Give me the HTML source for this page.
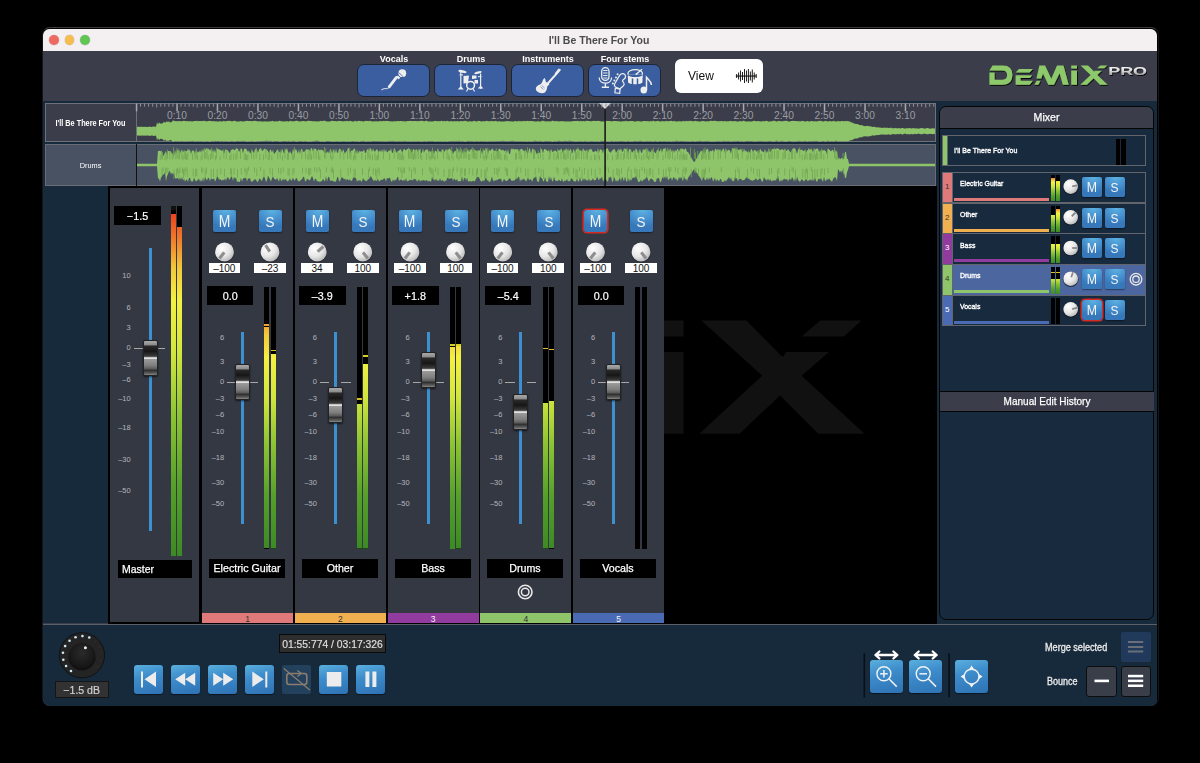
<!DOCTYPE html><html><head><meta charset="utf-8"><style>
html,body{margin:0;padding:0;background:#000;width:1200px;height:763px;overflow:hidden;font-family:"Liberation Sans", sans-serif;}
.ab{position:absolute;}
.t{position:absolute;white-space:nowrap;line-height:1;}
.hv{-webkit-text-stroke:0.25px currentColor;}
.ms{position:absolute;background:radial-gradient(ellipse 90% 80% at 55% 0%,#5db3e2 0%,#4791cf 55%,#3678ba 100%);border-radius:2px;color:#f4f4f4;text-align:center;box-shadow:0 1px 1.5px rgba(0,0,0,.45);}
.ms span{display:inline-block;transform:scaleX(0.88);}
.blk{position:absolute;background:#000;color:#fff;text-align:center;}

</style></head><body>
<div class="ab" style="left:0;top:0;width:1200px;height:763px;background:#000;overflow:hidden">
<div style="position:absolute;left:41.6px;top:27.4px;width:1117px;height:679px;box-sizing:border-box;border:1px solid #161616;border-top-color:#3a3a3a;border-radius:8px;"></div>
<div style="position:absolute;left:43px;top:29px;width:1114px;height:676.6px;background:#3b3e4a;border-radius:6.5px;overflow:hidden;"></div>
<div style="position:absolute;left:43px;top:29px;width:1114px;height:22px;background:#f4f0f1;border-radius:6.5px 6.5px 0 0;"></div>
<div style="position:absolute;left:49.300000000000004px;top:35.1px;width:9.8px;height:9.8px;background:#ee6a5f;border-radius:50%;box-shadow:0 0 0 0.5px rgba(0,0,0,.12);"></div>
<div style="position:absolute;left:64.69999999999999px;top:35.1px;width:9.8px;height:9.8px;background:#f5bd4f;border-radius:50%;box-shadow:0 0 0 0.5px rgba(0,0,0,.12);"></div>
<div style="position:absolute;left:80.1px;top:35.1px;width:9.8px;height:9.8px;background:#61c554;border-radius:50%;box-shadow:0 0 0 0.5px rgba(0,0,0,.12);"></div>
<div class="t" style="left:0px;top:35.5px;width:1198px;text-align:center;font-size:10px;font-weight:bold;color:#4b4b4b;transform:scaleX(1.05);transform-origin:center 0;">I'll Be There For You</div>
<div class="t" style="left:357px;top:55px;width:74px;text-align:center;font-size:9.3px;font-weight:bold;color:#fff;transform:scaleX(0.97);transform-origin:center 0;">Vocals</div>
<div style="position:absolute;left:357px;top:64px;width:73px;height:33px;box-sizing:border-box;background:#3a5e9f;border:1px solid #1b2535;border-radius:7px;"></div>
<div class="t" style="left:434px;top:55px;width:74px;text-align:center;font-size:9.3px;font-weight:bold;color:#fff;transform:scaleX(0.97);transform-origin:center 0;">Drums</div>
<div style="position:absolute;left:434px;top:64px;width:73px;height:33px;box-sizing:border-box;background:#3a5e9f;border:1px solid #1b2535;border-radius:7px;"></div>
<div class="t" style="left:511px;top:55px;width:74px;text-align:center;font-size:9.3px;font-weight:bold;color:#fff;transform:scaleX(0.97);transform-origin:center 0;">Instruments</div>
<div style="position:absolute;left:511px;top:64px;width:73px;height:33px;box-sizing:border-box;background:#3a5e9f;border:1px solid #1b2535;border-radius:7px;"></div>
<div class="t" style="left:588px;top:55px;width:74px;text-align:center;font-size:9.3px;font-weight:bold;color:#fff;transform:scaleX(0.97);transform-origin:center 0;">Four stems</div>
<div style="position:absolute;left:588px;top:64px;width:73px;height:33px;box-sizing:border-box;background:#3a5e9f;border:1px solid #1b2535;border-radius:7px;"></div>
<div style="position:absolute;left:675px;top:59px;width:88px;height:34px;background:#fff;border-radius:6px;"></div>
<div class="t" style="left:688px;top:69.5px;font-size:12.5px;color:#111;transform:scaleX(0.96);transform-origin:left 0;">View</div>
<svg class="ab" style="left:0;top:0" width="1200" height="763"><defs><linearGradient id="prog" x1="0" y1="0" x2="0" y2="1"><stop offset="0" stop-color="#ffffff"/><stop offset="0.5" stop-color="#d8d8d8"/><stop offset="1" stop-color="#8c8c8c"/></linearGradient><filter id="lsh" x="-10%" y="-10%" width="130%" height="140%"><feDropShadow dx="0.8" dy="1" stdDeviation="0.5" flood-color="#000" flood-opacity="0.9"/></filter></defs><circle cx="402.3" cy="73.2" r="3.9" fill="#eeeeee"/><path d="M397.2,76.2 L399.5,78.5" stroke="#eeeeee" stroke-width="2.6"/><path d="M396.4,77.4 L389.2,86.8" stroke="#eeeeee" stroke-width="2.8" stroke-linecap="round"/><path d="M388.8,87.5 C387.5,89.5 386,88.5 384.5,88.5 C383,88.5 382.5,89.8 381.2,89.8" fill="none" stroke="#c9d2e0" stroke-width="1.1"/><path d="M398.8,72.5 L403.3,77" stroke="#3a60a0" stroke-width="0.8"/><path d="M397.7,74.8 L401.3,78.4" stroke="#3a60a0" stroke-width="0.8"/><g fill="#eeeeee" stroke="none"><ellipse cx="462.5" cy="71.5" rx="4.2" ry="1.3" transform="rotate(12 462.5 71.5)"/><ellipse cx="478" cy="72.6" rx="3.8" ry="1.2" transform="rotate(-14 478 72.6)"/><rect x="460.2" y="72" width="1.2" height="17"/><rect x="480" y="73.5" width="1.2" height="15.5"/><path d="M457.8,89.5 L460.8,86 L463.8,89.5Z"/><path d="M477.8,88.5 L480.6,85.5 L483.5,88.5Z"/><path d="M458,75 L463,74.3 L463,75.5Z"/><path d="M478,76 L483,76.8 L478,77.2Z"/><path d="M463.5,76 L469,75.5 L468,83 L463.5,83.5Z"/><path d="M472,75.5 L476.5,75.5 L476.5,78.5 L472,79Z"/><path d="M474.5,80 L478,80 L478,83.5 L474.5,83.5Z"/></g><circle cx="470.6" cy="85.3" r="3.9" fill="none" stroke="#eeeeee" stroke-width="1.5"/><path d="M466.5,91.5 L468,88.5 M474.5,91.5 L473,88.5" stroke="#eeeeee" stroke-width="1.1"/><g fill="#eeeeee"><path d="M546.3,83.6 L555.4,73.4 L556.9,74.8 L547.8,85Z"/><path d="M554.6,73.6 L558.6,68.6 L561,69.6 L560.4,70.8 L556.6,75.2Z"/><path d="M544.6,77.9 C545.8,79.5 545.6,80.8 545.8,81.8 L547.6,83.1 C548.6,83.3 549.4,83.9 549.3,84.8 C548.4,85.2 547.6,85.8 547.3,86.6 C546.9,88.6 546.8,90.5 545.2,92.2 C543.2,93.9 539.6,93.6 537.2,91.6 C535.3,89.8 535.4,87.6 537.2,86 C538.6,84.9 540.2,84.8 541.3,83.6 C542.6,82 542.4,79.3 544.6,77.9Z"/></g><path d="M540.4,86.6 L543.4,89.4 M541.6,85.3 L544.6,88.1" stroke="#5d7bb0" stroke-width="0.7"/><g fill="none" stroke="#eeeeee" stroke-width="1.3"><rect x="601.7" y="67.6" width="7.3" height="12.8" rx="3.65" fill="#3a60a0"/><path d="M599.2,77.4 C599.2,85 611.6,85 611.6,77.4"/><path d="M605.4,83.2 L605.4,87 M601.8,87.3 L609,87.3" stroke-width="1.4"/></g><g fill="#eeeeee"><rect x="603.2" y="70" width="4.3" height="1"/><rect x="603.2" y="72.5" width="4.3" height="1"/><rect x="603.2" y="75" width="4.3" height="1"/><rect x="603.2" y="77.5" width="4.3" height="1"/></g><path d="M622.1,73.6 C624.5,73.4 626,75.5 625.4,77.5 C625,79 622.5,79.5 622.5,80.8 C622.5,82 624.5,82.5 624.1,84.3 C623.8,86 621.5,87.5 619.8,88.7 L615.5,87 C614.2,86.2 614.2,85 614.6,84 L619.5,75.6 C620.2,74.4 621,73.7 622.1,73.6 Z" fill="none" stroke="#eeeeee" stroke-width="1.2"/><path d="M615.3,88.2 L614.9,92.8 L619.7,93.3 L620.1,89.2Z" fill="none" stroke="#eeeeee" stroke-width="1.2"/><g fill="#eeeeee"><circle cx="617.6" cy="74.3" r="1"/><circle cx="616" cy="77.4" r="1"/><circle cx="614.4" cy="80.5" r="1"/><circle cx="612.9" cy="83.5" r="1"/></g><ellipse cx="635.2" cy="73.4" rx="7.3" ry="3.8" fill="none" stroke="#eeeeee" stroke-width="1.3"/><path d="M628,74.5 L628,82 C628,85 642.5,85 642.5,82 L642.5,74.5" fill="#eeeeee"/><path d="M628,74.5 C628,78 642.5,78 642.5,74.5" fill="#3a60a0"/><path d="M628,76.5 C628,78.5 642.5,78.5 642.5,76.5" fill="none" stroke="#eeeeee" stroke-width="1.3"/><path d="M632.5,78.5 L632.5,85 M637.5,78.5 L637.5,85" stroke="#3a60a0" stroke-width="1.5"/><circle cx="636.5" cy="74" r="1" fill="#eeeeee"/><path d="M636.5,74 L642,69.2" stroke="#eeeeee" stroke-width="1.3"/><ellipse cx="643.8" cy="90" rx="3.3" ry="3.5" fill="#eeeeee"/><path d="M646.5,90 L646.5,77.2 C648,79 651,81 651.5,85" fill="none" stroke="#eeeeee" stroke-width="1.5"/><rect x="736.20" y="74.00" width="0.95" height="4.00" fill="#111"/><rect x="738.15" y="72.50" width="0.95" height="7.00" fill="#111"/><rect x="740.10" y="70.50" width="0.95" height="11.00" fill="#111"/><rect x="742.05" y="72.00" width="0.95" height="8.00" fill="#111"/><rect x="744.00" y="69.00" width="0.95" height="14.00" fill="#111"/><rect x="745.95" y="70.50" width="0.95" height="11.00" fill="#111"/><rect x="747.90" y="69.00" width="0.95" height="14.00" fill="#111"/><rect x="749.85" y="71.50" width="0.95" height="9.00" fill="#111"/><rect x="751.80" y="69.50" width="0.95" height="13.00" fill="#111"/><rect x="753.75" y="72.50" width="0.95" height="7.00" fill="#111"/><rect x="755.70" y="74.00" width="0.95" height="4.00" fill="#111"/><rect x="735.8" y="75.5" width="20.5" height="1.1" fill="#111"/><g fill="#8dc86a" filter="url(#lsh)"><path d="M992.6,65.5 L1003,65.5 Q1012.4,65.5 1012.4,75.1 Q1012.4,84.8 1003,84.8 L989.4,84.8 L989.4,72.5 L994.6,72.5 L994.6,79.7 L1002.5,79.7 Q1007.1,79.7 1007.1,75.1 Q1007.1,70.6 1002.5,70.6 L989.4,70.6 Z"/><path d="M1015.6,72.5 L1019,69 L1033,69 L1029.6,72.5Z"/><path d="M1015.6,75.2 L1032.3,75.2 L1029.9,77.9 L1020.5,77.9 L1020.5,80.8 L1033,80.8 L1029.6,84.8 L1015.6,84.8Z"/><path d="M1034.4,84.75 L1036.6,80.85 L1040.5,80.85 L1038.4,84.75Z"/><path d="M1036.4,78.6 L1039.4,65.5 L1045.1,65.5 L1051.3,78.8 L1057,65.5 L1063.5,65.5 L1068.7,84.75 L1062.8,84.75 L1059.6,73.3 L1054,84.75 L1048.3,84.75 L1043,73.5 L1041.3,78.6Z"/><rect x="1071.2" y="65.5" width="5.8" height="3"/><rect x="1071.2" y="70.5" width="5.8" height="14.25"/><path d="M1080.53,65.50 L1088.06,65.50 L1093.72,71.35 L1094.14,71.70 L1094.64,70.84 L1101.80,70.84 L1097.23,74.88 L1107.71,84.75 L1100.01,84.75 L1093.64,78.23 L1086.91,84.75 L1080.20,84.75 L1090.67,74.88Z"/><path d="M1097.23,68.19 L1100.33,65.50 L1107.21,65.50 L1104.26,68.19Z"/></g><text x="1108.3" y="75" font-family="Liberation Sans" font-weight="bold" font-size="11" textLength="38.7" lengthAdjust="spacingAndGlyphs" fill="url(#prog)" filter="url(#lsh)">PRO</text></svg>
<div style="position:absolute;left:43px;top:101px;width:895px;height:86px;background:#172a3b;"></div>
<div style="position:absolute;left:45px;top:103px;width:891px;height:39px;box-sizing:border-box;background:#3b3e4a;border:1px solid #6f7179;"></div>
<div style="position:absolute;left:136px;top:103px;width:1px;height:39px;background:#6f7179;"></div>
<div class="t" style="left:45px;top:118.8px;width:91px;text-align:center;font-size:8.6px;font-weight:bold;color:#fff;transform:scaleX(0.85);transform-origin:center 0;">I'll Be There For You</div>
<div style="position:absolute;left:45px;top:144px;width:891px;height:42px;box-sizing:border-box;background:#485263;border:1px solid #696c74;"></div>
<div style="position:absolute;left:136px;top:144px;width:1px;height:42px;background:#111;"></div>
<div class="t" style="left:45px;top:161.6px;width:91px;text-align:center;font-size:8px;color:#fff;transform:scaleX(0.92);transform-origin:center 0;">Drums</div>
<svg class="ab" style="left:0;top:0" width="1200" height="763"><path d="M137.0,126.8 L138.0,126.9 L139.0,126.6 L140.0,127.0 L141.0,126.7 L142.0,126.8 L143.0,127.0 L144.0,126.7 L145.0,127.0 L146.0,126.7 L147.0,127.0 L148.0,126.9 L149.0,126.7 L150.0,126.5 L151.0,126.9 L152.0,126.9 L153.0,126.6 L154.0,126.4 L155.0,126.7 L156.0,126.8 L157.0,122.2 L158.0,124.4 L159.0,122.2 L160.0,123.4 L161.0,123.6 L162.0,123.5 L163.0,122.9 L164.0,121.5 L165.0,122.9 L166.0,121.7 L167.0,121.4 L168.0,121.9 L169.0,121.3 L170.0,122.4 L171.0,122.2 L172.0,121.7 L173.0,120.3 L174.0,120.8 L175.0,121.3 L176.0,121.1 L177.0,121.2 L178.0,121.3 L179.0,120.9 L180.0,121.0 L181.0,121.4 L182.0,121.1 L183.0,121.1 L184.0,120.8 L185.0,120.9 L186.0,121.3 L187.0,120.7 L188.0,121.5 L189.0,121.2 L190.0,120.9 L191.0,121.5 L192.0,121.2 L193.0,121.6 L194.0,121.0 L195.0,120.9 L196.0,121.1 L197.0,120.8 L198.0,121.3 L199.0,121.0 L200.0,121.1 L201.0,121.1 L202.0,121.2 L203.0,120.8 L204.0,120.7 L205.0,121.2 L206.0,121.0 L207.0,121.5 L208.0,121.0 L209.0,121.0 L210.0,120.7 L211.0,120.9 L212.0,121.3 L213.0,121.3 L214.0,121.0 L215.0,121.6 L216.0,121.2 L217.0,121.4 L218.0,121.5 L219.0,121.5 L220.0,120.9 L221.0,121.5 L222.0,121.4 L223.0,121.2 L224.0,120.8 L225.0,121.5 L226.0,121.2 L227.0,121.1 L228.0,120.8 L229.0,120.9 L230.0,120.8 L231.0,121.3 L232.0,121.2 L233.0,121.3 L234.0,120.8 L235.0,120.7 L236.0,121.5 L237.0,121.4 L238.0,121.4 L239.0,121.4 L240.0,121.2 L241.0,121.1 L242.0,121.4 L243.0,121.6 L244.0,121.2 L245.0,121.3 L246.0,121.1 L247.0,120.7 L248.0,121.0 L249.0,121.1 L250.0,121.0 L251.0,121.0 L252.0,121.6 L253.0,120.8 L254.0,120.9 L255.0,120.8 L256.0,120.9 L257.0,121.2 L258.0,121.2 L259.0,121.5 L260.0,121.0 L261.0,121.5 L262.0,121.5 L263.0,121.4 L264.0,121.5 L265.0,121.3 L266.0,121.6 L267.0,121.6 L268.0,121.5 L269.0,121.5 L270.0,121.3 L271.0,121.6 L272.0,120.8 L273.0,121.0 L274.0,121.5 L275.0,121.4 L276.0,121.3 L277.0,121.3 L278.0,121.5 L279.0,120.8 L280.0,120.7 L281.0,121.2 L282.0,121.2 L283.0,121.5 L284.0,121.5 L285.0,121.3 L286.0,121.4 L287.0,120.9 L288.0,121.5 L289.0,121.6 L290.0,120.7 L291.0,121.1 L292.0,121.5 L293.0,121.1 L294.0,121.6 L295.0,121.1 L296.0,120.7 L297.0,120.8 L298.0,121.0 L299.0,121.4 L300.0,121.3 L301.0,121.4 L302.0,120.9 L303.0,121.1 L304.0,120.9 L305.0,121.3 L306.0,121.4 L307.0,120.9 L308.0,120.7 L309.0,120.8 L310.0,120.9 L311.0,120.9 L312.0,120.9 L313.0,121.4 L314.0,121.1 L315.0,121.3 L316.0,121.6 L317.0,121.6 L318.0,121.3 L319.0,121.4 L320.0,121.0 L321.0,120.7 L322.0,121.2 L323.0,120.8 L324.0,120.7 L325.0,120.7 L326.0,121.3 L327.0,121.4 L328.0,121.4 L329.0,121.4 L330.0,121.4 L331.0,121.0 L332.0,120.8 L333.0,120.8 L334.0,121.2 L335.0,121.0 L336.0,120.9 L337.0,121.5 L338.0,121.0 L339.0,120.8 L340.0,120.9 L341.0,120.9 L342.0,121.2 L343.0,121.4 L344.0,120.9 L345.0,121.3 L346.0,120.9 L347.0,120.7 L348.0,121.2 L349.0,121.2 L350.0,120.7 L351.0,120.9 L352.0,121.4 L353.0,121.5 L354.0,121.5 L355.0,120.8 L356.0,120.9 L357.0,121.5 L358.0,120.9 L359.0,120.7 L360.0,121.0 L361.0,121.3 L362.0,121.1 L363.0,121.5 L364.0,121.6 L365.0,120.7 L366.0,121.0 L367.0,121.1 L368.0,120.8 L369.0,121.2 L370.0,120.8 L371.0,120.9 L372.0,121.4 L373.0,121.4 L374.0,121.3 L375.0,121.4 L376.0,121.1 L377.0,121.4 L378.0,121.2 L379.0,121.5 L380.0,120.8 L381.0,121.3 L382.0,121.2 L383.0,121.1 L384.0,120.8 L385.0,121.2 L386.0,120.8 L387.0,121.1 L388.0,121.1 L389.0,121.1 L390.0,121.6 L391.0,121.2 L392.0,121.4 L393.0,121.6 L394.0,120.9 L395.0,121.4 L396.0,121.2 L397.0,120.9 L398.0,121.1 L399.0,121.3 L400.0,121.1 L401.0,121.1 L402.0,120.9 L403.0,121.5 L404.0,121.1 L405.0,121.4 L406.0,121.4 L407.0,120.9 L408.0,121.1 L409.0,121.1 L410.0,120.9 L411.0,120.8 L412.0,121.2 L413.0,121.0 L414.0,121.1 L415.0,121.1 L416.0,121.0 L417.0,121.2 L418.0,121.1 L419.0,121.2 L420.0,120.8 L421.0,121.0 L422.0,120.8 L423.0,120.8 L424.0,121.4 L425.0,121.1 L426.0,120.8 L427.0,120.8 L428.0,121.5 L429.0,121.5 L430.0,121.2 L431.0,121.5 L432.0,121.4 L433.0,121.5 L434.0,121.0 L435.0,120.9 L436.0,120.8 L437.0,121.5 L438.0,121.0 L439.0,121.0 L440.0,121.5 L441.0,120.8 L442.0,120.7 L443.0,121.4 L444.0,120.7 L445.0,121.2 L446.0,121.2 L447.0,120.7 L448.0,120.9 L449.0,121.5 L450.0,121.2 L451.0,121.1 L452.0,121.3 L453.0,121.4 L454.0,121.3 L455.0,121.0 L456.0,121.6 L457.0,121.1 L458.0,121.2 L459.0,121.6 L460.0,121.3 L461.0,121.0 L462.0,121.1 L463.0,121.5 L464.0,120.7 L465.0,120.9 L466.0,120.7 L467.0,121.5 L468.0,121.4 L469.0,121.6 L470.0,120.9 L471.0,121.4 L472.0,121.5 L473.0,121.2 L474.0,120.8 L475.0,120.9 L476.0,121.4 L477.0,121.5 L478.0,120.8 L479.0,121.1 L480.0,121.0 L481.0,121.5 L482.0,121.5 L483.0,121.0 L484.0,121.2 L485.0,121.5 L486.0,120.8 L487.0,121.0 L488.0,120.9 L489.0,121.5 L490.0,120.8 L491.0,121.5 L492.0,120.8 L493.0,121.2 L494.0,121.3 L495.0,121.1 L496.0,120.8 L497.0,121.4 L498.0,121.5 L499.0,121.1 L500.0,121.4 L501.0,121.5 L502.0,121.5 L503.0,121.6 L504.0,121.4 L505.0,121.3 L506.0,121.3 L507.0,120.9 L508.0,121.3 L509.0,121.1 L510.0,121.4 L511.0,121.3 L512.0,121.6 L513.0,121.4 L514.0,121.6 L515.0,120.9 L516.0,121.1 L517.0,121.4 L518.0,121.2 L519.0,120.8 L520.0,121.5 L521.0,120.9 L522.0,121.2 L523.0,121.2 L524.0,120.8 L525.0,121.2 L526.0,121.1 L527.0,121.0 L528.0,120.7 L529.0,121.3 L530.0,120.9 L531.0,121.0 L532.0,121.0 L533.0,121.2 L534.0,121.3 L535.0,121.6 L536.0,121.5 L537.0,121.5 L538.0,120.9 L539.0,121.4 L540.0,121.5 L541.0,121.5 L542.0,120.8 L543.0,120.8 L544.0,121.0 L545.0,121.3 L546.0,121.4 L547.0,121.3 L548.0,121.2 L549.0,121.5 L550.0,121.2 L551.0,121.4 L552.0,120.7 L553.0,120.7 L554.0,121.1 L555.0,121.4 L556.0,120.7 L557.0,121.3 L558.0,121.3 L559.0,121.6 L560.0,121.3 L561.0,121.2 L562.0,121.1 L563.0,121.4 L564.0,121.1 L565.0,121.6 L566.0,121.4 L567.0,121.5 L568.0,121.2 L569.0,121.6 L570.0,121.6 L571.0,121.3 L572.0,121.4 L573.0,121.1 L574.0,121.1 L575.0,120.9 L576.0,121.0 L577.0,121.0 L578.0,120.8 L579.0,121.2 L580.0,121.3 L581.0,120.7 L582.0,121.5 L583.0,120.9 L584.0,121.0 L585.0,121.6 L586.0,120.8 L587.0,120.8 L588.0,121.0 L589.0,120.9 L590.0,120.9 L591.0,121.5 L592.0,121.1 L593.0,121.1 L594.0,120.8 L595.0,120.9 L596.0,120.9 L597.0,121.1 L598.0,120.8 L599.0,121.0 L600.0,121.0 L601.0,121.4 L602.0,121.6 L603.0,121.5 L604.0,121.3 L605.0,121.5 L606.0,120.8 L607.0,121.1 L608.0,121.0 L609.0,121.0 L610.0,121.0 L611.0,121.2 L612.0,121.6 L613.0,120.9 L614.0,120.9 L615.0,121.1 L616.0,121.1 L617.0,121.0 L618.0,121.5 L619.0,120.9 L620.0,121.4 L621.0,121.5 L622.0,121.4 L623.0,120.9 L624.0,121.4 L625.0,120.9 L626.0,120.7 L627.0,121.2 L628.0,121.3 L629.0,121.2 L630.0,121.0 L631.0,120.9 L632.0,121.0 L633.0,121.0 L634.0,121.5 L635.0,121.5 L636.0,121.4 L637.0,120.9 L638.0,121.3 L639.0,121.1 L640.0,121.6 L641.0,121.5 L642.0,121.4 L643.0,121.0 L644.0,121.0 L645.0,121.0 L646.0,121.3 L647.0,121.1 L648.0,121.2 L649.0,121.2 L650.0,121.5 L651.0,120.8 L652.0,121.4 L653.0,120.7 L654.0,120.8 L655.0,121.6 L656.0,121.2 L657.0,120.9 L658.0,120.7 L659.0,121.2 L660.0,121.4 L661.0,121.4 L662.0,120.7 L663.0,121.4 L664.0,121.1 L665.0,121.5 L666.0,121.1 L667.0,120.7 L668.0,121.5 L669.0,120.9 L670.0,121.1 L671.0,120.8 L672.0,121.0 L673.0,121.4 L674.0,120.8 L675.0,121.2 L676.0,121.6 L677.0,121.6 L678.0,121.2 L679.0,121.2 L680.0,121.3 L681.0,121.5 L682.0,121.3 L683.0,121.3 L684.0,120.8 L685.0,121.6 L686.0,120.9 L687.0,120.8 L688.0,121.5 L689.0,120.8 L690.0,121.0 L691.0,120.8 L692.0,121.3 L693.0,121.3 L694.0,121.2 L695.0,120.7 L696.0,121.1 L697.0,121.3 L698.0,121.2 L699.0,121.4 L700.0,121.6 L701.0,121.5 L702.0,120.8 L703.0,121.3 L704.0,120.8 L705.0,121.4 L706.0,121.4 L707.0,121.1 L708.0,121.4 L709.0,121.3 L710.0,120.7 L711.0,120.8 L712.0,120.9 L713.0,121.0 L714.0,120.8 L715.0,120.8 L716.0,121.1 L717.0,121.0 L718.0,121.6 L719.0,120.9 L720.0,121.2 L721.0,120.9 L722.0,121.0 L723.0,121.3 L724.0,121.6 L725.0,120.8 L726.0,121.5 L727.0,121.2 L728.0,121.3 L729.0,121.3 L730.0,120.9 L731.0,120.7 L732.0,121.4 L733.0,121.0 L734.0,121.3 L735.0,121.1 L736.0,121.2 L737.0,121.4 L738.0,121.5 L739.0,121.4 L740.0,120.8 L741.0,121.2 L742.0,121.4 L743.0,120.8 L744.0,120.7 L745.0,121.2 L746.0,121.5 L747.0,121.4 L748.0,121.5 L749.0,121.3 L750.0,121.5 L751.0,121.4 L752.0,121.4 L753.0,121.1 L754.0,120.8 L755.0,120.9 L756.0,121.2 L757.0,121.2 L758.0,121.1 L759.0,121.3 L760.0,121.3 L761.0,121.5 L762.0,121.4 L763.0,120.7 L764.0,121.5 L765.0,121.1 L766.0,121.0 L767.0,120.8 L768.0,121.4 L769.0,121.4 L770.0,121.4 L771.0,121.2 L772.0,121.2 L773.0,120.7 L774.0,120.8 L775.0,120.8 L776.0,121.6 L777.0,121.6 L778.0,121.0 L779.0,120.8 L780.0,121.2 L781.0,121.1 L782.0,121.6 L783.0,121.2 L784.0,120.8 L785.0,120.9 L786.0,120.8 L787.0,120.7 L788.0,121.4 L789.0,121.5 L790.0,121.5 L791.0,121.1 L792.0,121.0 L793.0,120.8 L794.0,121.0 L795.0,121.0 L796.0,120.9 L797.0,121.2 L798.0,121.1 L799.0,121.6 L800.0,120.9 L801.0,121.4 L802.0,120.8 L803.0,121.0 L804.0,121.3 L805.0,121.5 L806.0,121.4 L807.0,121.0 L808.0,121.0 L809.0,121.5 L810.0,121.5 L811.0,121.1 L812.0,121.1 L813.0,121.3 L814.0,121.4 L815.0,121.1 L816.0,121.6 L817.0,121.3 L818.0,121.2 L819.0,120.7 L820.0,121.0 L821.0,120.8 L822.0,121.2 L823.0,121.4 L824.0,121.4 L825.0,120.7 L826.0,121.0 L827.0,121.3 L828.0,121.6 L829.0,121.2 L830.0,121.0 L831.0,121.2 L832.0,121.4 L833.0,121.0 L834.0,120.8 L835.0,121.4 L836.0,121.6 L837.0,121.3 L838.0,121.2 L839.0,121.0 L840.0,121.4 L841.0,120.9 L842.0,120.9 L843.0,121.1 L844.0,121.4 L845.0,120.7 L846.0,121.3 L847.0,120.9 L848.0,121.1 L849.0,121.6 L850.0,121.6 L851.0,122.4 L852.0,122.2 L853.0,122.9 L854.0,123.5 L855.0,123.8 L856.0,123.9 L857.0,124.0 L858.0,124.1 L859.0,124.9 L860.0,125.0 L861.0,125.3 L862.0,124.9 L863.0,125.8 L864.0,126.0 L865.0,126.2 L866.0,126.1 L867.0,125.8 L868.0,126.0 L869.0,126.2 L870.0,126.2 L871.0,126.3 L872.0,126.9 L873.0,127.1 L874.0,126.6 L875.0,126.9 L876.0,127.5 L877.0,127.1 L878.0,127.4 L879.0,127.5 L880.0,127.6 L881.0,127.8 L882.0,128.0 L883.0,127.8 L884.0,127.8 L885.0,127.4 L886.0,128.1 L887.0,127.4 L888.0,128.1 L889.0,128.0 L890.0,127.7 L891.0,127.7 L892.0,128.1 L893.0,128.4 L894.0,128.1 L895.0,128.2 L896.0,127.8 L897.0,128.4 L898.0,128.3 L899.0,127.9 L900.0,128.6 L901.0,128.3 L902.0,128.0 L903.0,128.0 L904.0,128.6 L905.0,128.6 L906.0,128.6 L907.0,128.0 L908.0,128.5 L909.0,128.1 L910.0,128.0 L911.0,128.5 L912.0,128.5 L913.0,128.0 L914.0,128.3 L915.0,128.6 L916.0,128.2 L917.0,128.5 L918.0,128.6 L919.0,128.8 L920.0,128.2 L921.0,128.1 L922.0,128.3 L923.0,128.1 L924.0,128.8 L925.0,128.6 L926.0,128.5 L927.0,128.1 L928.0,128.1 L929.0,128.5 L930.0,128.7 L931.0,128.5 L932.0,128.5 L933.0,128.1 L934.0,128.7 L935.0,128.2 L935.0,134.2 L934.0,133.7 L933.0,134.3 L932.0,133.9 L931.0,133.9 L930.0,133.7 L929.0,133.9 L928.0,134.3 L927.0,134.3 L926.0,133.9 L925.0,133.8 L924.0,133.6 L923.0,134.3 L922.0,134.1 L921.0,134.3 L920.0,134.2 L919.0,133.6 L918.0,133.8 L917.0,133.9 L916.0,134.2 L915.0,133.8 L914.0,134.1 L913.0,134.4 L912.0,133.9 L911.0,133.9 L910.0,134.4 L909.0,134.3 L908.0,133.9 L907.0,134.4 L906.0,133.8 L905.0,133.8 L904.0,133.8 L903.0,134.4 L902.0,134.4 L901.0,134.1 L900.0,133.8 L899.0,134.5 L898.0,134.1 L897.0,134.0 L896.0,134.6 L895.0,134.2 L894.0,134.3 L893.0,134.0 L892.0,134.3 L891.0,134.7 L890.0,134.7 L889.0,134.4 L888.0,134.3 L887.0,135.0 L886.0,134.3 L885.0,135.0 L884.0,134.6 L883.0,134.6 L882.0,134.4 L881.0,134.6 L880.0,134.8 L879.0,134.9 L878.0,135.0 L877.0,135.3 L876.0,134.9 L875.0,135.5 L874.0,135.8 L873.0,135.3 L872.0,135.5 L871.0,136.1 L870.0,136.2 L869.0,136.2 L868.0,136.4 L867.0,136.6 L866.0,136.3 L865.0,136.2 L864.0,136.4 L863.0,136.6 L862.0,137.5 L861.0,137.1 L860.0,137.4 L859.0,137.5 L858.0,138.3 L857.0,138.4 L856.0,138.5 L855.0,138.6 L854.0,138.9 L853.0,139.5 L852.0,140.2 L851.0,140.0 L850.0,140.8 L849.0,140.8 L848.0,141.3 L847.0,141.5 L846.0,141.1 L845.0,141.7 L844.0,141.0 L843.0,141.3 L842.0,141.5 L841.0,141.5 L840.0,141.0 L839.0,141.4 L838.0,141.2 L837.0,141.1 L836.0,140.8 L835.0,141.0 L834.0,141.6 L833.0,141.4 L832.0,141.0 L831.0,141.2 L830.0,141.4 L829.0,141.2 L828.0,140.8 L827.0,141.1 L826.0,141.4 L825.0,141.7 L824.0,141.0 L823.0,141.0 L822.0,141.2 L821.0,141.6 L820.0,141.4 L819.0,141.7 L818.0,141.2 L817.0,141.1 L816.0,140.8 L815.0,141.3 L814.0,141.0 L813.0,141.1 L812.0,141.3 L811.0,141.3 L810.0,140.9 L809.0,140.9 L808.0,141.4 L807.0,141.4 L806.0,141.0 L805.0,140.9 L804.0,141.1 L803.0,141.4 L802.0,141.6 L801.0,141.0 L800.0,141.5 L799.0,140.8 L798.0,141.3 L797.0,141.2 L796.0,141.5 L795.0,141.4 L794.0,141.4 L793.0,141.6 L792.0,141.4 L791.0,141.3 L790.0,140.9 L789.0,140.9 L788.0,141.0 L787.0,141.7 L786.0,141.6 L785.0,141.5 L784.0,141.6 L783.0,141.2 L782.0,140.8 L781.0,141.3 L780.0,141.2 L779.0,141.6 L778.0,141.4 L777.0,140.8 L776.0,140.8 L775.0,141.6 L774.0,141.6 L773.0,141.7 L772.0,141.2 L771.0,141.2 L770.0,141.0 L769.0,141.0 L768.0,141.0 L767.0,141.6 L766.0,141.4 L765.0,141.3 L764.0,140.9 L763.0,141.7 L762.0,141.0 L761.0,140.9 L760.0,141.1 L759.0,141.1 L758.0,141.3 L757.0,141.2 L756.0,141.2 L755.0,141.5 L754.0,141.6 L753.0,141.3 L752.0,141.0 L751.0,141.0 L750.0,140.9 L749.0,141.1 L748.0,140.9 L747.0,141.0 L746.0,140.9 L745.0,141.2 L744.0,141.7 L743.0,141.6 L742.0,141.0 L741.0,141.2 L740.0,141.6 L739.0,141.0 L738.0,140.9 L737.0,141.0 L736.0,141.2 L735.0,141.3 L734.0,141.1 L733.0,141.4 L732.0,141.0 L731.0,141.7 L730.0,141.5 L729.0,141.1 L728.0,141.1 L727.0,141.2 L726.0,140.9 L725.0,141.6 L724.0,140.8 L723.0,141.1 L722.0,141.4 L721.0,141.5 L720.0,141.2 L719.0,141.5 L718.0,140.8 L717.0,141.4 L716.0,141.3 L715.0,141.6 L714.0,141.6 L713.0,141.4 L712.0,141.5 L711.0,141.6 L710.0,141.7 L709.0,141.1 L708.0,141.0 L707.0,141.3 L706.0,141.0 L705.0,141.0 L704.0,141.6 L703.0,141.1 L702.0,141.6 L701.0,140.9 L700.0,140.8 L699.0,141.0 L698.0,141.2 L697.0,141.1 L696.0,141.3 L695.0,141.7 L694.0,141.2 L693.0,141.1 L692.0,141.1 L691.0,141.6 L690.0,141.4 L689.0,141.6 L688.0,140.9 L687.0,141.6 L686.0,141.5 L685.0,140.8 L684.0,141.6 L683.0,141.1 L682.0,141.1 L681.0,140.9 L680.0,141.1 L679.0,141.2 L678.0,141.2 L677.0,140.8 L676.0,140.8 L675.0,141.2 L674.0,141.6 L673.0,141.0 L672.0,141.4 L671.0,141.6 L670.0,141.3 L669.0,141.5 L668.0,140.9 L667.0,141.7 L666.0,141.3 L665.0,140.9 L664.0,141.3 L663.0,141.0 L662.0,141.7 L661.0,141.0 L660.0,141.0 L659.0,141.2 L658.0,141.7 L657.0,141.5 L656.0,141.2 L655.0,140.8 L654.0,141.6 L653.0,141.7 L652.0,141.0 L651.0,141.6 L650.0,140.9 L649.0,141.2 L648.0,141.2 L647.0,141.3 L646.0,141.1 L645.0,141.4 L644.0,141.4 L643.0,141.4 L642.0,141.0 L641.0,140.9 L640.0,140.8 L639.0,141.3 L638.0,141.1 L637.0,141.5 L636.0,141.0 L635.0,140.9 L634.0,140.9 L633.0,141.4 L632.0,141.4 L631.0,141.5 L630.0,141.4 L629.0,141.2 L628.0,141.1 L627.0,141.2 L626.0,141.7 L625.0,141.5 L624.0,141.0 L623.0,141.5 L622.0,141.0 L621.0,140.9 L620.0,141.0 L619.0,141.5 L618.0,140.9 L617.0,141.4 L616.0,141.3 L615.0,141.3 L614.0,141.5 L613.0,141.5 L612.0,140.8 L611.0,141.2 L610.0,141.4 L609.0,141.4 L608.0,141.4 L607.0,141.3 L606.0,141.6 L605.0,140.9 L604.0,141.1 L603.0,140.9 L602.0,140.8 L601.0,141.0 L600.0,141.4 L599.0,141.4 L598.0,141.6 L597.0,141.3 L596.0,141.5 L595.0,141.5 L594.0,141.6 L593.0,141.3 L592.0,141.3 L591.0,140.9 L590.0,141.5 L589.0,141.5 L588.0,141.4 L587.0,141.6 L586.0,141.6 L585.0,140.8 L584.0,141.4 L583.0,141.5 L582.0,140.9 L581.0,141.7 L580.0,141.1 L579.0,141.2 L578.0,141.6 L577.0,141.4 L576.0,141.4 L575.0,141.5 L574.0,141.3 L573.0,141.3 L572.0,141.0 L571.0,141.1 L570.0,140.8 L569.0,140.8 L568.0,141.2 L567.0,140.9 L566.0,141.0 L565.0,140.8 L564.0,141.3 L563.0,141.0 L562.0,141.3 L561.0,141.2 L560.0,141.1 L559.0,140.8 L558.0,141.1 L557.0,141.1 L556.0,141.7 L555.0,141.0 L554.0,141.3 L553.0,141.7 L552.0,141.7 L551.0,141.0 L550.0,141.2 L549.0,140.9 L548.0,141.2 L547.0,141.1 L546.0,141.0 L545.0,141.1 L544.0,141.4 L543.0,141.6 L542.0,141.6 L541.0,140.9 L540.0,140.9 L539.0,141.0 L538.0,141.5 L537.0,140.9 L536.0,140.9 L535.0,140.8 L534.0,141.1 L533.0,141.2 L532.0,141.4 L531.0,141.4 L530.0,141.5 L529.0,141.1 L528.0,141.7 L527.0,141.4 L526.0,141.3 L525.0,141.2 L524.0,141.6 L523.0,141.2 L522.0,141.2 L521.0,141.5 L520.0,140.9 L519.0,141.6 L518.0,141.2 L517.0,141.0 L516.0,141.3 L515.0,141.5 L514.0,140.8 L513.0,141.0 L512.0,140.8 L511.0,141.1 L510.0,141.0 L509.0,141.3 L508.0,141.1 L507.0,141.5 L506.0,141.1 L505.0,141.1 L504.0,141.0 L503.0,140.8 L502.0,140.9 L501.0,140.9 L500.0,141.0 L499.0,141.3 L498.0,140.9 L497.0,141.0 L496.0,141.6 L495.0,141.3 L494.0,141.1 L493.0,141.2 L492.0,141.6 L491.0,140.9 L490.0,141.6 L489.0,140.9 L488.0,141.5 L487.0,141.4 L486.0,141.6 L485.0,140.9 L484.0,141.2 L483.0,141.4 L482.0,140.9 L481.0,140.9 L480.0,141.4 L479.0,141.3 L478.0,141.6 L477.0,140.9 L476.0,141.0 L475.0,141.5 L474.0,141.6 L473.0,141.2 L472.0,140.9 L471.0,141.0 L470.0,141.5 L469.0,140.8 L468.0,141.0 L467.0,140.9 L466.0,141.7 L465.0,141.5 L464.0,141.7 L463.0,140.9 L462.0,141.3 L461.0,141.4 L460.0,141.1 L459.0,140.8 L458.0,141.2 L457.0,141.3 L456.0,140.8 L455.0,141.4 L454.0,141.1 L453.0,141.0 L452.0,141.1 L451.0,141.3 L450.0,141.2 L449.0,140.9 L448.0,141.5 L447.0,141.7 L446.0,141.2 L445.0,141.2 L444.0,141.7 L443.0,141.0 L442.0,141.7 L441.0,141.6 L440.0,140.9 L439.0,141.4 L438.0,141.4 L437.0,140.9 L436.0,141.6 L435.0,141.5 L434.0,141.4 L433.0,140.9 L432.0,141.0 L431.0,140.9 L430.0,141.2 L429.0,140.9 L428.0,140.9 L427.0,141.6 L426.0,141.6 L425.0,141.3 L424.0,141.0 L423.0,141.6 L422.0,141.6 L421.0,141.4 L420.0,141.6 L419.0,141.2 L418.0,141.3 L417.0,141.2 L416.0,141.4 L415.0,141.3 L414.0,141.3 L413.0,141.4 L412.0,141.2 L411.0,141.6 L410.0,141.5 L409.0,141.3 L408.0,141.3 L407.0,141.5 L406.0,141.0 L405.0,141.0 L404.0,141.3 L403.0,140.9 L402.0,141.5 L401.0,141.3 L400.0,141.3 L399.0,141.1 L398.0,141.3 L397.0,141.5 L396.0,141.2 L395.0,141.0 L394.0,141.5 L393.0,140.8 L392.0,141.0 L391.0,141.2 L390.0,140.8 L389.0,141.3 L388.0,141.3 L387.0,141.3 L386.0,141.6 L385.0,141.2 L384.0,141.6 L383.0,141.3 L382.0,141.2 L381.0,141.1 L380.0,141.6 L379.0,140.9 L378.0,141.2 L377.0,141.0 L376.0,141.3 L375.0,141.0 L374.0,141.1 L373.0,141.0 L372.0,141.0 L371.0,141.5 L370.0,141.6 L369.0,141.2 L368.0,141.6 L367.0,141.3 L366.0,141.4 L365.0,141.7 L364.0,140.8 L363.0,140.9 L362.0,141.3 L361.0,141.1 L360.0,141.4 L359.0,141.7 L358.0,141.5 L357.0,140.9 L356.0,141.5 L355.0,141.6 L354.0,140.9 L353.0,140.9 L352.0,141.0 L351.0,141.5 L350.0,141.7 L349.0,141.2 L348.0,141.2 L347.0,141.7 L346.0,141.5 L345.0,141.1 L344.0,141.5 L343.0,141.0 L342.0,141.2 L341.0,141.5 L340.0,141.5 L339.0,141.6 L338.0,141.4 L337.0,140.9 L336.0,141.5 L335.0,141.4 L334.0,141.2 L333.0,141.6 L332.0,141.6 L331.0,141.4 L330.0,141.0 L329.0,141.0 L328.0,141.0 L327.0,141.0 L326.0,141.1 L325.0,141.7 L324.0,141.7 L323.0,141.6 L322.0,141.2 L321.0,141.7 L320.0,141.4 L319.0,141.0 L318.0,141.1 L317.0,140.8 L316.0,140.8 L315.0,141.1 L314.0,141.3 L313.0,141.0 L312.0,141.5 L311.0,141.5 L310.0,141.5 L309.0,141.6 L308.0,141.7 L307.0,141.5 L306.0,141.0 L305.0,141.1 L304.0,141.5 L303.0,141.3 L302.0,141.5 L301.0,141.0 L300.0,141.1 L299.0,141.0 L298.0,141.4 L297.0,141.6 L296.0,141.7 L295.0,141.3 L294.0,140.8 L293.0,141.3 L292.0,140.9 L291.0,141.3 L290.0,141.7 L289.0,140.8 L288.0,140.9 L287.0,141.5 L286.0,141.0 L285.0,141.1 L284.0,140.9 L283.0,140.9 L282.0,141.2 L281.0,141.2 L280.0,141.7 L279.0,141.6 L278.0,140.9 L277.0,141.1 L276.0,141.1 L275.0,141.0 L274.0,140.9 L273.0,141.4 L272.0,141.6 L271.0,140.8 L270.0,141.1 L269.0,140.9 L268.0,140.9 L267.0,140.8 L266.0,140.8 L265.0,141.1 L264.0,140.9 L263.0,141.0 L262.0,140.9 L261.0,140.9 L260.0,141.4 L259.0,140.9 L258.0,141.2 L257.0,141.2 L256.0,141.5 L255.0,141.6 L254.0,141.5 L253.0,141.6 L252.0,140.8 L251.0,141.4 L250.0,141.4 L249.0,141.3 L248.0,141.4 L247.0,141.7 L246.0,141.3 L245.0,141.1 L244.0,141.2 L243.0,140.8 L242.0,141.0 L241.0,141.3 L240.0,141.2 L239.0,141.0 L238.0,141.0 L237.0,141.0 L236.0,140.9 L235.0,141.7 L234.0,141.6 L233.0,141.1 L232.0,141.2 L231.0,141.1 L230.0,141.6 L229.0,141.5 L228.0,141.6 L227.0,141.3 L226.0,141.2 L225.0,140.9 L224.0,141.6 L223.0,141.2 L222.0,141.0 L221.0,140.9 L220.0,141.5 L219.0,140.9 L218.0,140.9 L217.0,141.0 L216.0,141.2 L215.0,140.8 L214.0,141.4 L213.0,141.1 L212.0,141.1 L211.0,141.5 L210.0,141.7 L209.0,141.4 L208.0,141.4 L207.0,140.9 L206.0,141.4 L205.0,141.2 L204.0,141.7 L203.0,141.6 L202.0,141.2 L201.0,141.3 L200.0,141.3 L199.0,141.4 L198.0,141.1 L197.0,141.6 L196.0,141.3 L195.0,141.5 L194.0,141.4 L193.0,140.8 L192.0,141.2 L191.0,140.9 L190.0,141.5 L189.0,141.2 L188.0,140.9 L187.0,141.7 L186.0,141.1 L185.0,141.5 L184.0,141.6 L183.0,141.3 L182.0,141.3 L181.0,141.0 L180.0,141.4 L179.0,141.5 L178.0,141.1 L177.0,141.2 L176.0,141.3 L175.0,141.1 L174.0,141.6 L173.0,142.1 L172.0,140.7 L171.0,140.2 L170.0,140.0 L169.0,141.1 L168.0,140.5 L167.0,141.0 L166.0,140.7 L165.0,139.5 L164.0,140.9 L163.0,139.5 L162.0,138.9 L161.0,138.8 L160.0,139.0 L159.0,140.2 L158.0,138.0 L157.0,140.2 L156.0,135.6 L155.0,135.7 L154.0,136.0 L153.0,135.8 L152.0,135.5 L151.0,135.5 L150.0,135.9 L149.0,135.7 L148.0,135.5 L147.0,135.4 L146.0,135.7 L145.0,135.4 L144.0,135.7 L143.0,135.4 L142.0,135.6 L141.0,135.7 L140.0,135.4 L139.0,135.8 L138.0,135.5 L137.0,135.6Z" fill="#8ec46a"/><path d="M137.0,163.7 L138.0,163.7 L139.0,163.7 L140.0,163.7 L141.0,163.7 L142.0,163.7 L143.0,163.7 L144.0,163.7 L145.0,163.7 L146.0,163.7 L147.0,163.7 L148.0,163.7 L149.0,163.7 L150.0,163.7 L151.0,163.7 L152.0,163.7 L153.0,163.7 L154.0,163.7 L155.0,163.7 L156.0,163.7 L157.0,163.7 L158.0,151.0 L159.0,151.0 L160.0,150.8 L161.0,151.5 L162.0,151.1 L163.0,156.4 L164.0,154.5 L165.0,153.0 L166.0,150.8 L167.0,156.1 L168.0,151.0 L169.0,151.1 L170.0,151.5 L171.0,151.2 L172.0,154.3 L173.0,153.4 L174.0,155.8 L175.0,149.5 L176.0,154.0 L177.0,149.3 L178.0,151.2 L179.0,148.8 L180.0,153.2 L181.0,150.8 L182.0,149.5 L183.0,152.3 L184.0,150.7 L185.0,151.3 L186.0,151.2 L187.0,151.0 L188.0,148.5 L189.0,150.9 L190.0,149.1 L191.0,154.2 L192.0,150.6 L193.0,150.7 L194.0,150.4 L195.0,153.9 L196.0,149.5 L197.0,152.9 L198.0,150.9 L199.0,152.4 L200.0,150.1 L201.0,152.8 L202.0,148.8 L203.0,152.0 L204.0,148.2 L205.0,150.3 L206.0,148.3 L207.0,148.4 L208.0,148.7 L209.0,148.9 L210.0,150.7 L211.0,148.7 L212.0,151.9 L213.0,150.1 L214.0,152.6 L215.0,149.1 L216.0,153.5 L217.0,149.0 L218.0,148.6 L219.0,149.7 L220.0,149.6 L221.0,150.6 L222.0,150.6 L223.0,150.5 L224.0,153.8 L225.0,150.3 L226.0,149.0 L227.0,150.4 L228.0,150.3 L229.0,152.6 L230.0,152.9 L231.0,150.1 L232.0,149.5 L233.0,149.1 L234.0,150.1 L235.0,150.2 L236.0,148.2 L237.0,148.6 L238.0,149.1 L239.0,152.0 L240.0,150.2 L241.0,148.3 L242.0,148.9 L243.0,153.2 L244.0,149.0 L245.0,148.4 L246.0,148.7 L247.0,150.2 L248.0,151.9 L249.0,150.2 L250.0,153.6 L251.0,152.3 L252.0,149.3 L253.0,152.2 L254.0,152.7 L255.0,149.5 L256.0,148.5 L257.0,149.8 L258.0,152.8 L259.0,149.6 L260.0,148.8 L261.0,148.0 L262.0,151.0 L263.0,150.5 L264.0,149.1 L265.0,148.7 L266.0,149.5 L267.0,149.8 L268.0,151.2 L269.0,153.6 L270.0,149.6 L271.0,150.1 L272.0,152.5 L273.0,149.5 L274.0,154.3 L275.0,152.8 L276.0,151.8 L277.0,149.8 L278.0,149.6 L279.0,152.5 L280.0,151.7 L281.0,152.9 L282.0,148.5 L283.0,150.7 L284.0,154.0 L285.0,149.9 L286.0,149.5 L287.0,148.2 L288.0,151.7 L289.0,153.5 L290.0,150.7 L291.0,153.3 L292.0,154.0 L293.0,148.2 L294.0,152.0 L295.0,150.2 L296.0,148.8 L297.0,151.3 L298.0,153.4 L299.0,148.9 L300.0,154.1 L301.0,149.0 L302.0,149.1 L303.0,151.8 L304.0,151.8 L305.0,151.1 L306.0,149.3 L307.0,149.2 L308.0,149.9 L309.0,148.9 L310.0,151.5 L311.0,148.1 L312.0,148.5 L313.0,151.6 L314.0,149.1 L315.0,149.0 L316.0,148.5 L317.0,151.7 L318.0,149.6 L319.0,149.4 L320.0,150.4 L321.0,149.3 L322.0,150.5 L323.0,149.8 L324.0,151.9 L325.0,153.1 L326.0,152.4 L327.0,152.8 L328.0,151.0 L329.0,153.7 L330.0,149.3 L331.0,149.3 L332.0,153.2 L333.0,150.9 L334.0,148.7 L335.0,153.2 L336.0,148.3 L337.0,152.8 L338.0,152.7 L339.0,148.6 L340.0,149.5 L341.0,149.6 L342.0,152.8 L343.0,149.0 L344.0,151.2 L345.0,153.8 L346.0,151.4 L347.0,150.9 L348.0,148.1 L349.0,148.6 L350.0,153.7 L351.0,150.5 L352.0,151.0 L353.0,150.0 L354.0,148.5 L355.0,148.7 L356.0,154.3 L357.0,149.0 L358.0,154.2 L359.0,150.2 L360.0,152.1 L361.0,151.0 L362.0,151.6 L363.0,151.4 L364.0,149.2 L365.0,152.7 L366.0,153.0 L367.0,149.3 L368.0,149.6 L369.0,150.7 L370.0,148.4 L371.0,148.4 L372.0,152.0 L373.0,148.4 L374.0,150.8 L375.0,151.8 L376.0,150.0 L377.0,149.0 L378.0,151.0 L379.0,152.3 L380.0,149.4 L381.0,152.2 L382.0,148.9 L383.0,152.6 L384.0,148.5 L385.0,152.1 L386.0,149.2 L387.0,152.4 L388.0,151.7 L389.0,150.1 L390.0,151.2 L391.0,148.1 L392.0,152.8 L393.0,152.8 L394.0,148.1 L395.0,149.1 L396.0,152.0 L397.0,152.8 L398.0,150.8 L399.0,150.7 L400.0,149.3 L401.0,149.6 L402.0,152.5 L403.0,150.7 L404.0,148.4 L405.0,149.8 L406.0,150.6 L407.0,149.1 L408.0,148.9 L409.0,148.6 L410.0,149.5 L411.0,151.2 L412.0,152.9 L413.0,148.9 L414.0,149.6 L415.0,150.6 L416.0,149.6 L417.0,149.4 L418.0,152.1 L419.0,148.9 L420.0,150.3 L421.0,153.5 L422.0,152.3 L423.0,148.2 L424.0,152.8 L425.0,150.0 L426.0,150.1 L427.0,148.7 L428.0,150.7 L429.0,151.9 L430.0,150.8 L431.0,152.6 L432.0,151.0 L433.0,151.5 L434.0,154.0 L435.0,150.6 L436.0,151.0 L437.0,151.8 L438.0,148.2 L439.0,151.9 L440.0,150.8 L441.0,152.6 L442.0,148.8 L443.0,150.4 L444.0,151.8 L445.0,151.0 L446.0,148.7 L447.0,150.4 L448.0,150.0 L449.0,148.7 L450.0,148.6 L451.0,150.9 L452.0,150.6 L453.0,154.3 L454.0,151.4 L455.0,151.3 L456.0,150.6 L457.0,149.4 L458.0,148.3 L459.0,153.3 L460.0,148.4 L461.0,152.5 L462.0,149.5 L463.0,154.0 L464.0,149.4 L465.0,152.8 L466.0,151.8 L467.0,151.0 L468.0,148.4 L469.0,152.2 L470.0,149.7 L471.0,149.4 L472.0,148.9 L473.0,152.0 L474.0,150.0 L475.0,150.5 L476.0,149.9 L477.0,151.8 L478.0,150.2 L479.0,150.4 L480.0,150.2 L481.0,150.0 L482.0,154.1 L483.0,150.4 L484.0,149.4 L485.0,150.9 L486.0,148.2 L487.0,149.5 L488.0,153.7 L489.0,149.3 L490.0,151.1 L491.0,150.1 L492.0,148.4 L493.0,149.2 L494.0,151.1 L495.0,150.9 L496.0,150.1 L497.0,151.9 L498.0,150.6 L499.0,148.7 L500.0,148.7 L501.0,150.2 L502.0,150.2 L503.0,149.5 L504.0,151.1 L505.0,151.3 L506.0,149.5 L507.0,153.5 L508.0,148.5 L509.0,153.4 L510.0,154.2 L511.0,148.3 L512.0,149.4 L513.0,148.4 L514.0,149.6 L515.0,149.3 L516.0,149.3 L517.0,149.4 L518.0,149.0 L519.0,152.1 L520.0,148.9 L521.0,149.4 L522.0,148.7 L523.0,149.9 L524.0,151.3 L525.0,151.2 L526.0,149.5 L527.0,153.3 L528.0,153.5 L529.0,148.8 L530.0,148.3 L531.0,154.0 L532.0,149.7 L533.0,148.1 L534.0,150.7 L535.0,149.5 L536.0,152.4 L537.0,154.2 L538.0,152.6 L539.0,153.0 L540.0,152.6 L541.0,149.2 L542.0,149.1 L543.0,153.4 L544.0,149.2 L545.0,149.1 L546.0,149.6 L547.0,150.4 L548.0,151.6 L549.0,149.2 L550.0,153.9 L551.0,148.7 L552.0,151.3 L553.0,152.3 L554.0,150.3 L555.0,150.9 L556.0,150.5 L557.0,152.4 L558.0,150.9 L559.0,149.6 L560.0,150.8 L561.0,148.2 L562.0,149.9 L563.0,153.3 L564.0,149.2 L565.0,151.1 L566.0,148.1 L567.0,149.7 L568.0,150.6 L569.0,150.9 L570.0,149.7 L571.0,148.8 L572.0,154.3 L573.0,150.6 L574.0,148.7 L575.0,153.5 L576.0,148.8 L577.0,149.8 L578.0,148.6 L579.0,149.3 L580.0,151.0 L581.0,149.9 L582.0,152.0 L583.0,148.3 L584.0,149.7 L585.0,150.4 L586.0,151.6 L587.0,148.8 L588.0,153.0 L589.0,148.9 L590.0,149.8 L591.0,148.5 L592.0,150.3 L593.0,152.1 L594.0,152.1 L595.0,150.9 L596.0,150.7 L597.0,152.4 L598.0,148.0 L599.0,152.8 L600.0,148.9 L601.0,149.7 L602.0,150.1 L603.0,153.6 L604.0,148.5 L605.0,149.9 L606.0,148.9 L607.0,148.2 L608.0,148.7 L609.0,151.6 L610.0,152.0 L611.0,153.0 L612.0,149.9 L613.0,150.4 L614.0,148.4 L615.0,149.7 L616.0,152.7 L617.0,151.6 L618.0,149.5 L619.0,149.4 L620.0,150.5 L621.0,148.1 L622.0,151.8 L623.0,151.6 L624.0,148.4 L625.0,148.7 L626.0,148.9 L627.0,149.5 L628.0,153.3 L629.0,149.0 L630.0,149.3 L631.0,149.7 L632.0,152.8 L633.0,151.6 L634.0,150.3 L635.0,151.7 L636.0,149.3 L637.0,149.2 L638.0,153.6 L639.0,151.9 L640.0,148.5 L641.0,152.5 L642.0,152.9 L643.0,148.6 L644.0,150.4 L645.0,148.7 L646.0,149.6 L647.0,151.8 L648.0,149.2 L649.0,152.4 L650.0,151.5 L651.0,152.3 L652.0,148.6 L653.0,152.2 L654.0,151.2 L655.0,152.7 L656.0,153.3 L657.0,149.4 L658.0,150.3 L659.0,151.6 L660.0,150.9 L661.0,148.0 L662.0,152.9 L663.0,148.4 L664.0,149.1 L665.0,148.1 L666.0,148.8 L667.0,152.5 L668.0,148.7 L669.0,152.1 L670.0,148.3 L671.0,149.8 L672.0,152.2 L673.0,149.2 L674.0,153.0 L675.0,149.7 L676.0,151.5 L677.0,149.6 L678.0,148.8 L679.0,152.0 L680.0,149.1 L681.0,149.1 L682.0,148.8 L683.0,148.6 L684.0,150.2 L685.0,148.4 L686.0,148.5 L687.0,152.1 L688.0,151.7 L689.0,153.5 L690.0,155.2 L691.0,157.0 L692.0,158.7 L693.0,160.4 L694.0,162.2 L695.0,161.1 L696.0,159.3 L697.0,157.6 L698.0,155.8 L699.0,154.1 L700.0,152.3 L701.0,150.6 L702.0,151.6 L703.0,153.7 L704.0,149.2 L705.0,153.9 L706.0,149.8 L707.0,149.2 L708.0,148.5 L709.0,153.5 L710.0,150.2 L711.0,151.5 L712.0,150.7 L713.0,149.7 L714.0,152.4 L715.0,149.0 L716.0,148.7 L717.0,150.8 L718.0,148.6 L719.0,150.8 L720.0,148.9 L721.0,151.7 L722.0,150.5 L723.0,148.8 L724.0,148.7 L725.0,153.3 L726.0,148.2 L727.0,151.7 L728.0,149.6 L729.0,150.0 L730.0,150.6 L731.0,153.8 L732.0,148.1 L733.0,148.2 L734.0,148.8 L735.0,148.5 L736.0,149.5 L737.0,149.3 L738.0,150.0 L739.0,149.6 L740.0,150.1 L741.0,148.2 L742.0,151.3 L743.0,152.6 L744.0,148.2 L745.0,151.5 L746.0,150.0 L747.0,152.6 L748.0,151.4 L749.0,151.4 L750.0,153.0 L751.0,148.6 L752.0,149.8 L753.0,152.0 L754.0,150.4 L755.0,149.6 L756.0,151.3 L757.0,151.8 L758.0,150.8 L759.0,154.0 L760.0,148.6 L761.0,149.9 L762.0,151.4 L763.0,151.4 L764.0,152.3 L765.0,148.5 L766.0,153.2 L767.0,150.5 L768.0,152.7 L769.0,148.2 L770.0,152.4 L771.0,151.0 L772.0,149.6 L773.0,148.7 L774.0,149.1 L775.0,149.0 L776.0,148.9 L777.0,148.3 L778.0,148.5 L779.0,149.0 L780.0,150.2 L781.0,149.8 L782.0,148.9 L783.0,149.7 L784.0,150.4 L785.0,149.1 L786.0,150.8 L787.0,150.8 L788.0,148.9 L789.0,150.2 L790.0,152.1 L791.0,152.4 L792.0,149.8 L793.0,148.3 L794.0,148.6 L795.0,148.2 L796.0,150.6 L797.0,154.0 L798.0,149.9 L799.0,148.3 L800.0,150.0 L801.0,150.1 L802.0,149.3 L803.0,151.0 L804.0,151.0 L805.0,149.4 L806.0,152.8 L807.0,150.7 L808.0,149.8 L809.0,148.1 L810.0,150.5 L811.0,148.0 L812.0,150.0 L813.0,152.2 L814.0,148.1 L815.0,150.1 L816.0,148.4 L817.0,148.7 L818.0,148.4 L819.0,152.3 L820.0,150.1 L821.0,152.1 L822.0,149.6 L823.0,151.0 L824.0,149.5 L825.0,150.7 L826.0,151.3 L827.0,154.2 L828.0,148.6 L829.0,149.4 L830.0,150.2 L831.0,151.5 L832.0,150.0 L833.0,149.8 L834.0,152.6 L835.0,149.0 L836.0,152.8 L837.0,150.1 L838.0,159.8 L839.0,157.1 L840.0,159.6 L841.0,158.2 L842.0,157.7 L843.0,159.0 L844.0,158.7 L845.0,152.0 L846.0,152.0 L847.0,158.8 L848.0,159.0 L849.0,163.7 L850.0,163.7 L851.0,163.7 L852.0,163.7 L853.0,163.7 L854.0,163.7 L855.0,163.7 L856.0,163.7 L857.0,163.7 L858.0,163.7 L859.0,163.7 L860.0,163.7 L861.0,163.7 L862.0,163.7 L863.0,163.7 L864.0,163.7 L865.0,163.7 L866.0,163.7 L867.0,163.7 L868.0,163.7 L869.0,163.7 L870.0,163.7 L871.0,163.7 L872.0,163.7 L873.0,163.7 L874.0,163.7 L875.0,163.7 L876.0,163.7 L877.0,163.7 L878.0,163.7 L879.0,163.7 L880.0,163.7 L881.0,163.7 L882.0,163.7 L883.0,163.7 L884.0,163.7 L885.0,163.7 L886.0,163.7 L887.0,163.7 L888.0,163.7 L889.0,163.7 L890.0,163.7 L891.0,163.7 L892.0,163.7 L893.0,163.7 L894.0,163.7 L895.0,163.7 L896.0,163.7 L897.0,163.7 L898.0,163.7 L899.0,163.7 L900.0,163.7 L901.0,163.7 L902.0,163.7 L903.0,163.7 L904.0,163.7 L905.0,163.7 L906.0,163.7 L907.0,163.7 L908.0,163.7 L909.0,163.7 L910.0,163.7 L911.0,163.7 L912.0,163.7 L913.0,163.7 L914.0,163.7 L915.0,163.7 L916.0,163.7 L917.0,163.7 L918.0,163.7 L919.0,163.7 L920.0,163.7 L921.0,163.7 L922.0,163.7 L923.0,163.7 L924.0,163.7 L925.0,163.7 L926.0,163.7 L927.0,163.7 L928.0,163.7 L929.0,163.7 L930.0,163.7 L931.0,163.7 L932.0,163.7 L933.0,163.7 L934.0,163.7 L935.0,163.7 L935.0,166.3 L934.0,166.3 L933.0,166.3 L932.0,166.3 L931.0,166.3 L930.0,166.3 L929.0,166.3 L928.0,166.3 L927.0,166.3 L926.0,166.3 L925.0,166.3 L924.0,166.3 L923.0,166.3 L922.0,166.3 L921.0,166.3 L920.0,166.3 L919.0,166.3 L918.0,166.3 L917.0,166.3 L916.0,166.3 L915.0,166.3 L914.0,166.3 L913.0,166.3 L912.0,166.3 L911.0,166.3 L910.0,166.3 L909.0,166.3 L908.0,166.3 L907.0,166.3 L906.0,166.3 L905.0,166.3 L904.0,166.3 L903.0,166.3 L902.0,166.3 L901.0,166.3 L900.0,166.3 L899.0,166.3 L898.0,166.3 L897.0,166.3 L896.0,166.3 L895.0,166.3 L894.0,166.3 L893.0,166.3 L892.0,166.3 L891.0,166.3 L890.0,166.3 L889.0,166.3 L888.0,166.3 L887.0,166.3 L886.0,166.3 L885.0,166.3 L884.0,166.3 L883.0,166.3 L882.0,166.3 L881.0,166.3 L880.0,166.3 L879.0,166.3 L878.0,166.3 L877.0,166.3 L876.0,166.3 L875.0,166.3 L874.0,166.3 L873.0,166.3 L872.0,166.3 L871.0,166.3 L870.0,166.3 L869.0,166.3 L868.0,166.3 L867.0,166.3 L866.0,166.3 L865.0,166.3 L864.0,166.3 L863.0,166.3 L862.0,166.3 L861.0,166.3 L860.0,166.3 L859.0,166.3 L858.0,166.3 L857.0,166.3 L856.0,166.3 L855.0,166.3 L854.0,166.3 L853.0,166.3 L852.0,166.3 L851.0,166.3 L850.0,166.3 L849.0,166.3 L848.0,169.7 L847.0,172.5 L846.0,178.0 L845.0,178.0 L844.0,172.6 L843.0,169.2 L842.0,172.8 L841.0,170.5 L840.0,172.6 L839.0,170.4 L838.0,169.0 L837.0,181.3 L836.0,177.8 L835.0,177.2 L834.0,177.7 L833.0,179.3 L832.0,182.0 L831.0,180.5 L830.0,180.1 L829.0,178.0 L828.0,180.2 L827.0,178.7 L826.0,180.7 L825.0,181.1 L824.0,176.5 L823.0,182.0 L822.0,180.3 L821.0,177.9 L820.0,179.8 L819.0,178.6 L818.0,179.4 L817.0,182.0 L816.0,180.7 L815.0,177.3 L814.0,181.3 L813.0,178.8 L812.0,181.3 L811.0,178.9 L810.0,180.4 L809.0,179.7 L808.0,181.5 L807.0,180.1 L806.0,179.1 L805.0,179.9 L804.0,181.8 L803.0,180.3 L802.0,179.2 L801.0,179.9 L800.0,182.0 L799.0,181.1 L798.0,179.8 L797.0,176.6 L796.0,181.6 L795.0,178.0 L794.0,181.4 L793.0,178.8 L792.0,177.0 L791.0,180.2 L790.0,178.7 L789.0,179.5 L788.0,181.4 L787.0,178.8 L786.0,180.1 L785.0,178.6 L784.0,179.6 L783.0,179.2 L782.0,181.5 L781.0,179.4 L780.0,181.9 L779.0,180.2 L778.0,175.8 L777.0,177.4 L776.0,180.8 L775.0,179.7 L774.0,180.9 L773.0,179.9 L772.0,181.4 L771.0,180.6 L770.0,178.9 L769.0,180.9 L768.0,178.2 L767.0,180.9 L766.0,179.2 L765.0,179.5 L764.0,176.8 L763.0,181.1 L762.0,182.0 L761.0,179.8 L760.0,178.3 L759.0,179.0 L758.0,180.2 L757.0,179.9 L756.0,178.3 L755.0,179.6 L754.0,180.0 L753.0,180.8 L752.0,180.5 L751.0,180.3 L750.0,180.0 L749.0,178.3 L748.0,179.3 L747.0,177.5 L746.0,177.6 L745.0,179.6 L744.0,179.9 L743.0,180.3 L742.0,180.5 L741.0,178.6 L740.0,179.5 L739.0,178.4 L738.0,181.7 L737.0,178.5 L736.0,178.5 L735.0,176.4 L734.0,181.5 L733.0,180.5 L732.0,181.1 L731.0,177.5 L730.0,179.8 L729.0,176.8 L728.0,179.1 L727.0,179.4 L726.0,181.7 L725.0,179.9 L724.0,181.4 L723.0,181.7 L722.0,181.9 L721.0,178.9 L720.0,178.9 L719.0,181.8 L718.0,179.9 L717.0,179.4 L716.0,181.8 L715.0,177.7 L714.0,180.2 L713.0,181.4 L712.0,177.5 L711.0,177.4 L710.0,179.8 L709.0,177.4 L708.0,180.8 L707.0,177.2 L706.0,179.9 L705.0,180.3 L704.0,178.0 L703.0,177.1 L702.0,181.3 L701.0,178.9 L700.0,177.5 L699.0,176.0 L698.0,174.6 L697.0,173.1 L696.0,171.7 L695.0,170.2 L694.0,169.3 L693.0,170.7 L692.0,172.2 L691.0,173.6 L690.0,175.1 L689.0,176.5 L688.0,178.0 L687.0,181.3 L686.0,178.5 L685.0,179.7 L684.0,176.1 L683.0,181.5 L682.0,178.9 L681.0,176.7 L680.0,179.3 L679.0,176.8 L678.0,180.2 L677.0,180.8 L676.0,178.0 L675.0,179.8 L674.0,177.0 L673.0,178.0 L672.0,181.1 L671.0,177.5 L670.0,178.1 L669.0,179.5 L668.0,179.9 L667.0,175.7 L666.0,178.9 L665.0,176.1 L664.0,178.6 L663.0,176.7 L662.0,178.6 L661.0,181.7 L660.0,182.0 L659.0,178.0 L658.0,178.6 L657.0,178.1 L656.0,181.6 L655.0,181.9 L654.0,181.6 L653.0,179.8 L652.0,178.9 L651.0,178.5 L650.0,179.3 L649.0,181.5 L648.0,180.1 L647.0,176.7 L646.0,177.5 L645.0,179.7 L644.0,178.9 L643.0,180.4 L642.0,181.7 L641.0,179.5 L640.0,181.6 L639.0,181.7 L638.0,181.7 L637.0,178.0 L636.0,176.0 L635.0,177.6 L634.0,177.8 L633.0,177.4 L632.0,178.8 L631.0,181.0 L630.0,178.7 L629.0,181.8 L628.0,177.6 L627.0,181.9 L626.0,180.8 L625.0,176.6 L624.0,181.6 L623.0,179.0 L622.0,176.5 L621.0,182.0 L620.0,177.7 L619.0,179.2 L618.0,181.8 L617.0,180.1 L616.0,181.8 L615.0,179.3 L614.0,176.8 L613.0,181.8 L612.0,181.5 L611.0,176.6 L610.0,177.9 L609.0,176.4 L608.0,181.9 L607.0,181.1 L606.0,179.4 L605.0,178.4 L604.0,179.7 L603.0,182.0 L602.0,176.2 L601.0,179.0 L600.0,177.7 L599.0,180.4 L598.0,179.1 L597.0,176.5 L596.0,179.9 L595.0,180.1 L594.0,180.8 L593.0,177.9 L592.0,180.2 L591.0,179.9 L590.0,181.6 L589.0,178.2 L588.0,181.2 L587.0,179.6 L586.0,181.0 L585.0,178.0 L584.0,180.7 L583.0,178.2 L582.0,181.0 L581.0,181.2 L580.0,177.0 L579.0,181.7 L578.0,181.2 L577.0,178.5 L576.0,181.5 L575.0,181.3 L574.0,181.6 L573.0,180.2 L572.0,178.4 L571.0,178.6 L570.0,181.6 L569.0,180.7 L568.0,181.6 L567.0,178.7 L566.0,181.3 L565.0,180.3 L564.0,181.3 L563.0,181.9 L562.0,178.6 L561.0,181.1 L560.0,181.1 L559.0,179.4 L558.0,180.5 L557.0,181.2 L556.0,180.7 L555.0,180.2 L554.0,176.7 L553.0,181.4 L552.0,180.9 L551.0,177.0 L550.0,180.5 L549.0,176.0 L548.0,181.9 L547.0,181.7 L546.0,180.8 L545.0,177.0 L544.0,181.4 L543.0,181.1 L542.0,177.9 L541.0,178.3 L540.0,176.1 L539.0,181.5 L538.0,181.9 L537.0,180.7 L536.0,176.1 L535.0,178.1 L534.0,177.2 L533.0,179.7 L532.0,181.8 L531.0,179.2 L530.0,179.5 L529.0,180.2 L528.0,177.3 L527.0,180.1 L526.0,181.7 L525.0,179.4 L524.0,179.4 L523.0,178.4 L522.0,181.1 L521.0,179.1 L520.0,181.7 L519.0,176.4 L518.0,177.2 L517.0,179.6 L516.0,178.1 L515.0,180.3 L514.0,180.4 L513.0,180.4 L512.0,181.1 L511.0,180.3 L510.0,177.9 L509.0,178.7 L508.0,180.0 L507.0,180.9 L506.0,181.1 L505.0,180.2 L504.0,178.8 L503.0,181.2 L502.0,181.9 L501.0,178.5 L500.0,179.3 L499.0,178.6 L498.0,180.1 L497.0,179.5 L496.0,181.1 L495.0,179.7 L494.0,181.4 L493.0,180.4 L492.0,176.4 L491.0,179.7 L490.0,181.9 L489.0,181.7 L488.0,180.3 L487.0,180.5 L486.0,176.9 L485.0,179.4 L484.0,181.4 L483.0,180.1 L482.0,181.4 L481.0,181.5 L480.0,179.8 L479.0,177.6 L478.0,176.7 L477.0,177.5 L476.0,178.4 L475.0,181.5 L474.0,180.9 L473.0,180.7 L472.0,181.4 L471.0,181.6 L470.0,181.1 L469.0,181.6 L468.0,181.2 L467.0,177.6 L466.0,181.1 L465.0,177.5 L464.0,178.4 L463.0,181.8 L462.0,176.1 L461.0,181.3 L460.0,181.1 L459.0,181.3 L458.0,181.4 L457.0,179.1 L456.0,180.5 L455.0,179.7 L454.0,178.3 L453.0,180.9 L452.0,177.9 L451.0,178.4 L450.0,178.5 L449.0,179.0 L448.0,177.4 L447.0,178.6 L446.0,181.3 L445.0,180.5 L444.0,181.9 L443.0,180.1 L442.0,180.5 L441.0,181.1 L440.0,178.1 L439.0,181.2 L438.0,179.9 L437.0,180.9 L436.0,178.5 L435.0,180.7 L434.0,179.4 L433.0,179.3 L432.0,176.7 L431.0,181.9 L430.0,181.0 L429.0,180.7 L428.0,181.8 L427.0,179.9 L426.0,180.5 L425.0,180.8 L424.0,180.2 L423.0,179.9 L422.0,181.1 L421.0,180.0 L420.0,181.9 L419.0,179.2 L418.0,180.5 L417.0,181.7 L416.0,179.3 L415.0,179.6 L414.0,178.4 L413.0,180.8 L412.0,179.4 L411.0,180.4 L410.0,179.6 L409.0,180.7 L408.0,180.8 L407.0,181.5 L406.0,178.2 L405.0,181.0 L404.0,179.4 L403.0,180.9 L402.0,180.3 L401.0,179.6 L400.0,179.8 L399.0,181.2 L398.0,176.4 L397.0,178.0 L396.0,180.5 L395.0,179.5 L394.0,181.2 L393.0,179.2 L392.0,181.9 L391.0,180.9 L390.0,177.9 L389.0,177.7 L388.0,178.8 L387.0,177.7 L386.0,181.4 L385.0,178.7 L384.0,178.3 L383.0,179.6 L382.0,180.2 L381.0,179.5 L380.0,180.9 L379.0,181.4 L378.0,178.8 L377.0,180.5 L376.0,181.0 L375.0,179.6 L374.0,181.5 L373.0,179.8 L372.0,178.4 L371.0,176.2 L370.0,177.0 L369.0,179.2 L368.0,179.0 L367.0,181.1 L366.0,181.1 L365.0,180.5 L364.0,179.8 L363.0,178.1 L362.0,181.8 L361.0,181.3 L360.0,179.8 L359.0,181.2 L358.0,179.8 L357.0,181.9 L356.0,178.0 L355.0,177.8 L354.0,177.1 L353.0,178.1 L352.0,180.8 L351.0,181.1 L350.0,179.3 L349.0,180.4 L348.0,179.8 L347.0,178.8 L346.0,180.8 L345.0,178.4 L344.0,179.4 L343.0,178.0 L342.0,177.1 L341.0,178.6 L340.0,181.3 L339.0,181.2 L338.0,176.4 L337.0,178.0 L336.0,181.8 L335.0,181.5 L334.0,181.6 L333.0,181.3 L332.0,180.2 L331.0,180.9 L330.0,180.5 L329.0,176.5 L328.0,177.5 L327.0,181.7 L326.0,176.3 L325.0,181.6 L324.0,180.4 L323.0,178.7 L322.0,180.9 L321.0,181.4 L320.0,181.4 L319.0,181.9 L318.0,180.7 L317.0,181.6 L316.0,178.9 L315.0,178.8 L314.0,181.8 L313.0,178.3 L312.0,176.1 L311.0,178.1 L310.0,180.5 L309.0,179.9 L308.0,179.5 L307.0,178.5 L306.0,181.4 L305.0,181.0 L304.0,176.5 L303.0,177.2 L302.0,179.6 L301.0,179.6 L300.0,181.4 L299.0,180.8 L298.0,181.6 L297.0,178.7 L296.0,177.8 L295.0,180.5 L294.0,180.3 L293.0,177.5 L292.0,180.1 L291.0,181.1 L290.0,178.3 L289.0,180.0 L288.0,181.6 L287.0,180.9 L286.0,179.5 L285.0,179.0 L284.0,180.5 L283.0,178.4 L282.0,181.1 L281.0,180.5 L280.0,177.6 L279.0,181.8 L278.0,179.7 L277.0,178.0 L276.0,180.2 L275.0,179.0 L274.0,179.0 L273.0,176.2 L272.0,178.2 L271.0,181.6 L270.0,179.4 L269.0,177.6 L268.0,175.7 L267.0,180.6 L266.0,181.9 L265.0,178.4 L264.0,176.6 L263.0,177.8 L262.0,181.0 L261.0,180.2 L260.0,178.5 L259.0,179.2 L258.0,182.0 L257.0,181.5 L256.0,180.1 L255.0,179.0 L254.0,180.0 L253.0,181.1 L252.0,181.6 L251.0,181.8 L250.0,177.9 L249.0,178.8 L248.0,178.4 L247.0,181.7 L246.0,177.6 L245.0,178.5 L244.0,177.7 L243.0,179.0 L242.0,181.7 L241.0,177.7 L240.0,181.8 L239.0,181.9 L238.0,181.3 L237.0,182.0 L236.0,177.5 L235.0,179.1 L234.0,176.7 L233.0,181.1 L232.0,177.0 L231.0,176.5 L230.0,179.5 L229.0,179.4 L228.0,177.2 L227.0,177.8 L226.0,181.1 L225.0,178.3 L224.0,180.4 L223.0,179.5 L222.0,180.6 L221.0,180.2 L220.0,178.7 L219.0,180.1 L218.0,177.3 L217.0,176.4 L216.0,180.1 L215.0,181.6 L214.0,178.3 L213.0,179.2 L212.0,179.3 L211.0,177.9 L210.0,181.4 L209.0,178.2 L208.0,177.7 L207.0,180.4 L206.0,179.2 L205.0,176.7 L204.0,181.9 L203.0,177.4 L202.0,181.9 L201.0,179.8 L200.0,181.7 L199.0,178.6 L198.0,179.8 L197.0,180.4 L196.0,181.6 L195.0,180.1 L194.0,177.7 L193.0,181.5 L192.0,181.3 L191.0,181.6 L190.0,178.0 L189.0,178.0 L188.0,182.0 L187.0,179.4 L186.0,180.1 L185.0,181.8 L184.0,178.6 L183.0,180.7 L182.0,177.1 L181.0,180.1 L180.0,177.2 L179.0,180.0 L178.0,178.0 L177.0,177.9 L176.0,178.8 L175.0,178.0 L174.0,172.5 L173.0,174.7 L172.0,172.6 L171.0,174.5 L170.0,171.2 L169.0,171.6 L168.0,174.0 L167.0,176.3 L166.0,181.4 L165.0,171.7 L164.0,174.7 L163.0,174.0 L162.0,176.3 L161.0,177.4 L160.0,181.7 L159.0,178.5 L158.0,178.5 L157.0,166.3 L156.0,166.3 L155.0,166.3 L154.0,166.3 L153.0,166.3 L152.0,166.3 L151.0,166.3 L150.0,166.3 L149.0,166.3 L148.0,166.3 L147.0,166.3 L146.0,166.3 L145.0,166.3 L144.0,166.3 L143.0,166.3 L142.0,166.3 L141.0,166.3 L140.0,166.3 L139.0,166.3 L138.0,166.3 L137.0,166.3Z" fill="#8ec46a"/><rect x="159.8" y="154.3" width="0.8" height="5.8" fill="#74a653"/><rect x="161.0" y="150.9" width="0.8" height="8.3" fill="#74a653"/><rect x="161.6" y="168.2" width="0.8" height="7.0" fill="#74a653"/><rect x="162.2" y="152.4" width="0.8" height="7.2" fill="#74a653"/><rect x="162.8" y="167.1" width="0.8" height="4.6" fill="#74a653"/><rect x="164.6" y="153.8" width="0.8" height="6.2" fill="#74a653"/><rect x="165.2" y="167.6" width="0.8" height="5.6" fill="#74a653"/><rect x="165.8" y="155.7" width="0.8" height="4.7" fill="#74a653"/><rect x="166.4" y="167.7" width="0.8" height="5.9" fill="#74a653"/><rect x="167.0" y="149.6" width="0.8" height="9.3" fill="#74a653"/><rect x="167.6" y="167.5" width="0.8" height="5.5" fill="#74a653"/><rect x="169.4" y="152.0" width="0.8" height="7.5" fill="#74a653"/><rect x="171.8" y="152.8" width="0.8" height="6.9" fill="#74a653"/><rect x="173.0" y="147.4" width="0.8" height="11.0" fill="#74a653"/><rect x="173.6" y="169.4" width="0.8" height="9.5" fill="#74a653"/><rect x="175.4" y="151.9" width="0.8" height="7.6" fill="#74a653"/><rect x="176.0" y="168.7" width="0.8" height="8.0" fill="#74a653"/><rect x="176.6" y="147.9" width="0.8" height="10.6" fill="#74a653"/><rect x="177.2" y="167.8" width="0.8" height="6.1" fill="#74a653"/><rect x="177.8" y="150.5" width="0.8" height="8.6" fill="#74a653"/><rect x="178.4" y="169.2" width="0.8" height="9.0" fill="#74a653"/><rect x="179.0" y="151.4" width="0.8" height="8.0" fill="#74a653"/><rect x="179.6" y="167.5" width="0.8" height="5.5" fill="#74a653"/><rect x="181.4" y="150.1" width="0.8" height="8.9" fill="#74a653"/><rect x="182.0" y="167.6" width="0.8" height="5.7" fill="#74a653"/><rect x="182.6" y="155.2" width="0.8" height="5.1" fill="#74a653"/><rect x="183.2" y="169.1" width="0.8" height="8.9" fill="#74a653"/><rect x="183.8" y="150.0" width="0.8" height="9.0" fill="#74a653"/><rect x="184.4" y="168.3" width="0.8" height="7.2" fill="#74a653"/><rect x="185.0" y="151.5" width="0.8" height="7.9" fill="#74a653"/><rect x="185.6" y="167.0" width="0.8" height="4.3" fill="#74a653"/><rect x="186.2" y="154.0" width="0.8" height="6.0" fill="#74a653"/><rect x="186.8" y="168.7" width="0.8" height="8.1" fill="#74a653"/><rect x="187.4" y="152.4" width="0.8" height="7.2" fill="#74a653"/><rect x="192.2" y="153.5" width="0.8" height="6.4" fill="#74a653"/><rect x="192.8" y="168.6" width="0.8" height="7.9" fill="#74a653"/><rect x="194.6" y="152.3" width="0.8" height="7.3" fill="#74a653"/><rect x="195.2" y="168.7" width="0.8" height="8.0" fill="#74a653"/><rect x="195.8" y="148.4" width="0.8" height="10.2" fill="#74a653"/><rect x="196.4" y="168.5" width="0.8" height="7.6" fill="#74a653"/><rect x="197.0" y="155.0" width="0.8" height="5.3" fill="#74a653"/><rect x="200.6" y="155.6" width="0.8" height="4.8" fill="#74a653"/><rect x="201.2" y="167.3" width="0.8" height="5.1" fill="#74a653"/><rect x="201.8" y="152.6" width="0.8" height="7.1" fill="#74a653"/><rect x="202.4" y="167.6" width="0.8" height="5.7" fill="#74a653"/><rect x="204.2" y="148.4" width="0.8" height="10.2" fill="#74a653"/><rect x="204.8" y="168.7" width="0.8" height="8.1" fill="#74a653"/><rect x="205.4" y="152.1" width="0.8" height="7.4" fill="#74a653"/><rect x="206.0" y="167.7" width="0.8" height="5.9" fill="#74a653"/><rect x="206.6" y="148.5" width="0.8" height="10.1" fill="#74a653"/><rect x="207.8" y="155.6" width="0.8" height="4.8" fill="#74a653"/><rect x="210.2" y="153.8" width="0.8" height="6.2" fill="#74a653"/><rect x="210.8" y="168.9" width="0.8" height="8.5" fill="#74a653"/><rect x="211.4" y="147.8" width="0.8" height="10.7" fill="#74a653"/><rect x="212.6" y="149.7" width="0.8" height="9.2" fill="#74a653"/><rect x="213.2" y="168.8" width="0.8" height="8.3" fill="#74a653"/><rect x="215.0" y="155.2" width="0.8" height="5.1" fill="#74a653"/><rect x="216.2" y="147.6" width="0.8" height="10.8" fill="#74a653"/><rect x="216.8" y="168.8" width="0.8" height="8.2" fill="#74a653"/><rect x="219.8" y="155.5" width="0.8" height="4.9" fill="#74a653"/><rect x="220.4" y="168.0" width="0.8" height="6.4" fill="#74a653"/><rect x="223.4" y="149.1" width="0.8" height="9.6" fill="#74a653"/><rect x="224.0" y="168.7" width="0.8" height="8.0" fill="#74a653"/><rect x="225.8" y="151.1" width="0.8" height="8.2" fill="#74a653"/><rect x="229.4" y="155.5" width="0.8" height="4.9" fill="#74a653"/><rect x="230.0" y="167.9" width="0.8" height="6.3" fill="#74a653"/><rect x="230.6" y="153.2" width="0.8" height="6.6" fill="#74a653"/><rect x="231.2" y="168.7" width="0.8" height="8.0" fill="#74a653"/><rect x="233.0" y="153.8" width="0.8" height="6.1" fill="#74a653"/><rect x="233.6" y="168.0" width="0.8" height="6.5" fill="#74a653"/><rect x="235.4" y="153.3" width="0.8" height="6.5" fill="#74a653"/><rect x="236.6" y="150.9" width="0.8" height="8.3" fill="#74a653"/><rect x="237.2" y="169.0" width="0.8" height="8.7" fill="#74a653"/><rect x="240.2" y="150.0" width="0.8" height="9.0" fill="#74a653"/><rect x="240.8" y="168.0" width="0.8" height="6.6" fill="#74a653"/><rect x="243.8" y="153.4" width="0.8" height="6.5" fill="#74a653"/><rect x="244.4" y="167.4" width="0.8" height="5.1" fill="#74a653"/><rect x="245.0" y="153.5" width="0.8" height="6.4" fill="#74a653"/><rect x="245.6" y="168.7" width="0.8" height="8.0" fill="#74a653"/><rect x="246.2" y="155.0" width="0.8" height="5.3" fill="#74a653"/><rect x="246.8" y="168.1" width="0.8" height="6.6" fill="#74a653"/><rect x="247.4" y="154.5" width="0.8" height="5.6" fill="#74a653"/><rect x="248.0" y="166.8" width="0.8" height="4.0" fill="#74a653"/><rect x="251.0" y="149.5" width="0.8" height="9.3" fill="#74a653"/><rect x="253.4" y="151.6" width="0.8" height="7.8" fill="#74a653"/><rect x="254.0" y="167.3" width="0.8" height="5.0" fill="#74a653"/><rect x="255.8" y="147.7" width="0.8" height="10.7" fill="#74a653"/><rect x="256.4" y="168.5" width="0.8" height="7.6" fill="#74a653"/><rect x="259.4" y="153.8" width="0.8" height="6.2" fill="#74a653"/><rect x="260.0" y="166.9" width="0.8" height="4.1" fill="#74a653"/><rect x="263.0" y="154.3" width="0.8" height="5.8" fill="#74a653"/><rect x="263.6" y="169.1" width="0.8" height="8.8" fill="#74a653"/><rect x="265.4" y="148.9" width="0.8" height="9.8" fill="#74a653"/><rect x="267.8" y="154.3" width="0.8" height="5.7" fill="#74a653"/><rect x="269.0" y="152.7" width="0.8" height="7.0" fill="#74a653"/><rect x="269.6" y="167.8" width="0.8" height="6.1" fill="#74a653"/><rect x="271.4" y="155.6" width="0.8" height="4.8" fill="#74a653"/><rect x="272.0" y="168.5" width="0.8" height="7.6" fill="#74a653"/><rect x="277.4" y="151.5" width="0.8" height="7.9" fill="#74a653"/><rect x="278.0" y="167.6" width="0.8" height="5.7" fill="#74a653"/><rect x="279.8" y="149.8" width="0.8" height="9.1" fill="#74a653"/><rect x="280.4" y="168.0" width="0.8" height="6.5" fill="#74a653"/><rect x="282.2" y="155.6" width="0.8" height="4.8" fill="#74a653"/><rect x="282.8" y="167.3" width="0.8" height="5.0" fill="#74a653"/><rect x="284.6" y="148.4" width="0.8" height="10.2" fill="#74a653"/><rect x="287.0" y="153.5" width="0.8" height="6.4" fill="#74a653"/><rect x="287.6" y="168.2" width="0.8" height="6.9" fill="#74a653"/><rect x="288.2" y="153.0" width="0.8" height="6.8" fill="#74a653"/><rect x="288.8" y="168.6" width="0.8" height="7.8" fill="#74a653"/><rect x="291.8" y="153.3" width="0.8" height="6.5" fill="#74a653"/><rect x="292.4" y="168.3" width="0.8" height="7.2" fill="#74a653"/><rect x="293.0" y="154.2" width="0.8" height="5.8" fill="#74a653"/><rect x="293.6" y="167.7" width="0.8" height="5.8" fill="#74a653"/><rect x="294.2" y="147.3" width="0.8" height="11.1" fill="#74a653"/><rect x="301.4" y="149.9" width="0.8" height="9.1" fill="#74a653"/><rect x="302.0" y="167.6" width="0.8" height="5.6" fill="#74a653"/><rect x="305.0" y="150.2" width="0.8" height="8.9" fill="#74a653"/><rect x="305.6" y="167.7" width="0.8" height="5.9" fill="#74a653"/><rect x="307.4" y="154.3" width="0.8" height="5.8" fill="#74a653"/><rect x="308.0" y="168.0" width="0.8" height="6.5" fill="#74a653"/><rect x="308.6" y="150.1" width="0.8" height="9.0" fill="#74a653"/><rect x="309.2" y="168.4" width="0.8" height="7.3" fill="#74a653"/><rect x="309.8" y="151.2" width="0.8" height="8.1" fill="#74a653"/><rect x="310.4" y="167.9" width="0.8" height="6.2" fill="#74a653"/><rect x="311.0" y="154.4" width="0.8" height="5.7" fill="#74a653"/><rect x="313.4" y="148.2" width="0.8" height="10.3" fill="#74a653"/><rect x="314.0" y="167.1" width="0.8" height="4.5" fill="#74a653"/><rect x="315.8" y="151.6" width="0.8" height="7.8" fill="#74a653"/><rect x="316.4" y="167.4" width="0.8" height="5.2" fill="#74a653"/><rect x="318.2" y="151.4" width="0.8" height="8.0" fill="#74a653"/><rect x="318.8" y="167.0" width="0.8" height="4.4" fill="#74a653"/><rect x="319.4" y="155.3" width="0.8" height="5.0" fill="#74a653"/><rect x="320.0" y="169.1" width="0.8" height="9.0" fill="#74a653"/><rect x="324.2" y="147.1" width="0.8" height="11.2" fill="#74a653"/><rect x="325.4" y="148.5" width="0.8" height="10.1" fill="#74a653"/><rect x="326.0" y="167.3" width="0.8" height="4.9" fill="#74a653"/><rect x="330.2" y="149.0" width="0.8" height="9.7" fill="#74a653"/><rect x="330.8" y="167.4" width="0.8" height="5.3" fill="#74a653"/><rect x="331.4" y="155.9" width="0.8" height="4.6" fill="#74a653"/><rect x="332.0" y="167.4" width="0.8" height="5.1" fill="#74a653"/><rect x="332.6" y="149.6" width="0.8" height="9.3" fill="#74a653"/><rect x="333.2" y="169.2" width="0.8" height="9.1" fill="#74a653"/><rect x="339.8" y="149.3" width="0.8" height="9.5" fill="#74a653"/><rect x="340.4" y="168.9" width="0.8" height="8.4" fill="#74a653"/><rect x="343.4" y="152.6" width="0.8" height="7.0" fill="#74a653"/><rect x="347.0" y="150.6" width="0.8" height="8.6" fill="#74a653"/><rect x="347.6" y="168.3" width="0.8" height="7.1" fill="#74a653"/><rect x="349.4" y="147.7" width="0.8" height="10.7" fill="#74a653"/><rect x="350.0" y="167.5" width="0.8" height="5.4" fill="#74a653"/><rect x="350.6" y="152.0" width="0.8" height="7.5" fill="#74a653"/><rect x="353.0" y="155.8" width="0.8" height="4.6" fill="#74a653"/><rect x="353.6" y="169.0" width="0.8" height="8.6" fill="#74a653"/><rect x="354.2" y="151.0" width="0.8" height="8.2" fill="#74a653"/><rect x="354.8" y="168.7" width="0.8" height="7.9" fill="#74a653"/><rect x="355.4" y="154.7" width="0.8" height="5.5" fill="#74a653"/><rect x="361.4" y="152.9" width="0.8" height="6.8" fill="#74a653"/><rect x="362.0" y="168.2" width="0.8" height="6.8" fill="#74a653"/><rect x="365.0" y="154.4" width="0.8" height="5.7" fill="#74a653"/><rect x="367.4" y="151.7" width="0.8" height="7.7" fill="#74a653"/><rect x="368.0" y="169.1" width="0.8" height="8.8" fill="#74a653"/><rect x="368.6" y="148.1" width="0.8" height="10.4" fill="#74a653"/><rect x="369.2" y="167.0" width="0.8" height="4.3" fill="#74a653"/><rect x="369.8" y="154.1" width="0.8" height="6.0" fill="#74a653"/><rect x="372.2" y="154.5" width="0.8" height="5.6" fill="#74a653"/><rect x="372.8" y="168.1" width="0.8" height="6.6" fill="#74a653"/><rect x="374.6" y="152.8" width="0.8" height="6.9" fill="#74a653"/><rect x="375.2" y="168.4" width="0.8" height="7.3" fill="#74a653"/><rect x="375.8" y="155.8" width="0.8" height="4.6" fill="#74a653"/><rect x="376.4" y="169.5" width="0.8" height="9.7" fill="#74a653"/><rect x="377.0" y="154.7" width="0.8" height="5.5" fill="#74a653"/><rect x="377.6" y="167.5" width="0.8" height="5.5" fill="#74a653"/><rect x="378.2" y="151.5" width="0.8" height="7.9" fill="#74a653"/><rect x="378.8" y="168.3" width="0.8" height="7.2" fill="#74a653"/><rect x="383.0" y="151.0" width="0.8" height="8.3" fill="#74a653"/><rect x="389.0" y="153.5" width="0.8" height="6.4" fill="#74a653"/><rect x="393.8" y="149.1" width="0.8" height="9.7" fill="#74a653"/><rect x="397.4" y="151.0" width="0.8" height="8.2" fill="#74a653"/><rect x="398.0" y="167.0" width="0.8" height="4.3" fill="#74a653"/><rect x="398.6" y="153.1" width="0.8" height="6.7" fill="#74a653"/><rect x="399.8" y="152.7" width="0.8" height="7.0" fill="#74a653"/><rect x="400.4" y="167.4" width="0.8" height="5.3" fill="#74a653"/><rect x="401.0" y="154.8" width="0.8" height="5.4" fill="#74a653"/><rect x="401.6" y="169.2" width="0.8" height="9.0" fill="#74a653"/><rect x="402.2" y="152.0" width="0.8" height="7.5" fill="#74a653"/><rect x="402.8" y="167.6" width="0.8" height="5.7" fill="#74a653"/><rect x="403.4" y="155.4" width="0.8" height="4.9" fill="#74a653"/><rect x="404.0" y="167.6" width="0.8" height="5.7" fill="#74a653"/><rect x="408.2" y="147.7" width="0.8" height="10.7" fill="#74a653"/><rect x="408.8" y="167.0" width="0.8" height="4.4" fill="#74a653"/><rect x="409.4" y="150.8" width="0.8" height="8.4" fill="#74a653"/><rect x="410.6" y="149.0" width="0.8" height="9.7" fill="#74a653"/><rect x="411.2" y="169.1" width="0.8" height="9.0" fill="#74a653"/><rect x="411.8" y="151.6" width="0.8" height="7.8" fill="#74a653"/><rect x="413.0" y="153.7" width="0.8" height="6.2" fill="#74a653"/><rect x="413.6" y="167.2" width="0.8" height="4.9" fill="#74a653"/><rect x="414.2" y="149.7" width="0.8" height="9.3" fill="#74a653"/><rect x="414.8" y="167.9" width="0.8" height="6.2" fill="#74a653"/><rect x="415.4" y="150.6" width="0.8" height="8.6" fill="#74a653"/><rect x="417.8" y="149.4" width="0.8" height="9.5" fill="#74a653"/><rect x="420.2" y="148.7" width="0.8" height="10.0" fill="#74a653"/><rect x="421.4" y="154.8" width="0.8" height="5.4" fill="#74a653"/><rect x="422.0" y="168.2" width="0.8" height="7.0" fill="#74a653"/><rect x="426.2" y="153.1" width="0.8" height="6.7" fill="#74a653"/><rect x="428.6" y="149.9" width="0.8" height="9.1" fill="#74a653"/><rect x="429.2" y="167.0" width="0.8" height="4.2" fill="#74a653"/><rect x="429.8" y="155.6" width="0.8" height="4.8" fill="#74a653"/><rect x="430.4" y="167.7" width="0.8" height="5.9" fill="#74a653"/><rect x="431.0" y="150.6" width="0.8" height="8.5" fill="#74a653"/><rect x="431.6" y="168.1" width="0.8" height="6.6" fill="#74a653"/><rect x="432.2" y="147.7" width="0.8" height="10.7" fill="#74a653"/><rect x="432.8" y="169.5" width="0.8" height="9.7" fill="#74a653"/><rect x="433.4" y="150.5" width="0.8" height="8.6" fill="#74a653"/><rect x="434.6" y="155.2" width="0.8" height="5.1" fill="#74a653"/><rect x="435.2" y="167.2" width="0.8" height="4.7" fill="#74a653"/><rect x="437.0" y="148.7" width="0.8" height="10.0" fill="#74a653"/><rect x="437.6" y="168.3" width="0.8" height="7.1" fill="#74a653"/><rect x="443.0" y="149.3" width="0.8" height="9.5" fill="#74a653"/><rect x="443.6" y="168.7" width="0.8" height="8.1" fill="#74a653"/><rect x="446.6" y="149.0" width="0.8" height="9.7" fill="#74a653"/><rect x="447.8" y="153.5" width="0.8" height="6.4" fill="#74a653"/><rect x="448.4" y="169.3" width="0.8" height="9.4" fill="#74a653"/><rect x="449.0" y="155.9" width="0.8" height="4.6" fill="#74a653"/><rect x="449.6" y="168.6" width="0.8" height="7.7" fill="#74a653"/><rect x="451.4" y="147.1" width="0.8" height="11.2" fill="#74a653"/><rect x="452.0" y="168.8" width="0.8" height="8.3" fill="#74a653"/><rect x="452.6" y="155.7" width="0.8" height="4.7" fill="#74a653"/><rect x="453.2" y="167.0" width="0.8" height="4.3" fill="#74a653"/><rect x="456.2" y="147.5" width="0.8" height="10.8" fill="#74a653"/><rect x="456.8" y="167.2" width="0.8" height="4.8" fill="#74a653"/><rect x="457.4" y="149.4" width="0.8" height="9.5" fill="#74a653"/><rect x="458.6" y="155.7" width="0.8" height="4.7" fill="#74a653"/><rect x="459.8" y="147.2" width="0.8" height="11.1" fill="#74a653"/><rect x="460.4" y="168.5" width="0.8" height="7.6" fill="#74a653"/><rect x="461.0" y="148.8" width="0.8" height="9.9" fill="#74a653"/><rect x="461.6" y="167.7" width="0.8" height="5.8" fill="#74a653"/><rect x="463.4" y="149.4" width="0.8" height="9.5" fill="#74a653"/><rect x="464.0" y="168.5" width="0.8" height="7.7" fill="#74a653"/><rect x="464.6" y="148.2" width="0.8" height="10.3" fill="#74a653"/><rect x="465.2" y="168.3" width="0.8" height="7.2" fill="#74a653"/><rect x="465.8" y="147.7" width="0.8" height="10.7" fill="#74a653"/><rect x="468.2" y="153.7" width="0.8" height="6.2" fill="#74a653"/><rect x="468.8" y="168.0" width="0.8" height="6.4" fill="#74a653"/><rect x="469.4" y="154.2" width="0.8" height="5.9" fill="#74a653"/><rect x="471.8" y="147.1" width="0.8" height="11.2" fill="#74a653"/><rect x="472.4" y="168.3" width="0.8" height="7.2" fill="#74a653"/><rect x="473.0" y="148.2" width="0.8" height="10.3" fill="#74a653"/><rect x="474.2" y="149.2" width="0.8" height="9.6" fill="#74a653"/><rect x="475.4" y="153.0" width="0.8" height="6.7" fill="#74a653"/><rect x="476.0" y="169.2" width="0.8" height="9.1" fill="#74a653"/><rect x="476.6" y="149.9" width="0.8" height="9.1" fill="#74a653"/><rect x="477.2" y="168.0" width="0.8" height="6.6" fill="#74a653"/><rect x="480.2" y="148.0" width="0.8" height="10.5" fill="#74a653"/><rect x="480.8" y="168.9" width="0.8" height="8.5" fill="#74a653"/><rect x="482.6" y="148.2" width="0.8" height="10.3" fill="#74a653"/><rect x="483.8" y="155.8" width="0.8" height="4.7" fill="#74a653"/><rect x="484.4" y="169.4" width="0.8" height="9.6" fill="#74a653"/><rect x="485.0" y="147.8" width="0.8" height="10.7" fill="#74a653"/><rect x="485.6" y="168.8" width="0.8" height="8.2" fill="#74a653"/><rect x="486.2" y="154.5" width="0.8" height="5.6" fill="#74a653"/><rect x="486.8" y="167.0" width="0.8" height="4.4" fill="#74a653"/><rect x="487.4" y="147.7" width="0.8" height="10.7" fill="#74a653"/><rect x="491.0" y="153.9" width="0.8" height="6.1" fill="#74a653"/><rect x="493.4" y="151.5" width="0.8" height="7.9" fill="#74a653"/><rect x="494.0" y="168.0" width="0.8" height="6.4" fill="#74a653"/><rect x="494.6" y="155.8" width="0.8" height="4.6" fill="#74a653"/><rect x="495.8" y="148.1" width="0.8" height="10.4" fill="#74a653"/><rect x="496.4" y="168.1" width="0.8" height="6.8" fill="#74a653"/><rect x="497.0" y="152.1" width="0.8" height="7.4" fill="#74a653"/><rect x="497.6" y="168.7" width="0.8" height="7.9" fill="#74a653"/><rect x="498.2" y="149.4" width="0.8" height="9.5" fill="#74a653"/><rect x="498.8" y="167.1" width="0.8" height="4.6" fill="#74a653"/><rect x="499.4" y="151.5" width="0.8" height="7.8" fill="#74a653"/><rect x="500.6" y="154.1" width="0.8" height="6.0" fill="#74a653"/><rect x="504.2" y="154.4" width="0.8" height="5.7" fill="#74a653"/><rect x="504.8" y="167.0" width="0.8" height="4.3" fill="#74a653"/><rect x="505.4" y="151.4" width="0.8" height="7.9" fill="#74a653"/><rect x="506.0" y="168.3" width="0.8" height="7.2" fill="#74a653"/><rect x="506.6" y="155.9" width="0.8" height="4.6" fill="#74a653"/><rect x="507.2" y="168.6" width="0.8" height="7.7" fill="#74a653"/><rect x="515.0" y="153.1" width="0.8" height="6.6" fill="#74a653"/><rect x="515.6" y="169.4" width="0.8" height="9.6" fill="#74a653"/><rect x="516.2" y="152.5" width="0.8" height="7.1" fill="#74a653"/><rect x="516.8" y="167.2" width="0.8" height="4.7" fill="#74a653"/><rect x="518.6" y="150.5" width="0.8" height="8.6" fill="#74a653"/><rect x="519.8" y="150.5" width="0.8" height="8.6" fill="#74a653"/><rect x="520.4" y="167.5" width="0.8" height="5.3" fill="#74a653"/><rect x="521.0" y="155.0" width="0.8" height="5.3" fill="#74a653"/><rect x="524.6" y="149.8" width="0.8" height="9.2" fill="#74a653"/><rect x="525.2" y="168.5" width="0.8" height="7.7" fill="#74a653"/><rect x="527.0" y="147.3" width="0.8" height="11.1" fill="#74a653"/><rect x="527.6" y="168.8" width="0.8" height="8.3" fill="#74a653"/><rect x="533.0" y="150.3" width="0.8" height="8.7" fill="#74a653"/><rect x="534.2" y="149.6" width="0.8" height="9.3" fill="#74a653"/><rect x="534.8" y="168.2" width="0.8" height="7.0" fill="#74a653"/><rect x="537.8" y="150.3" width="0.8" height="8.7" fill="#74a653"/><rect x="538.4" y="167.4" width="0.8" height="5.2" fill="#74a653"/><rect x="540.2" y="147.8" width="0.8" height="10.6" fill="#74a653"/><rect x="540.8" y="168.7" width="0.8" height="8.1" fill="#74a653"/><rect x="542.6" y="154.0" width="0.8" height="6.0" fill="#74a653"/><rect x="543.2" y="169.3" width="0.8" height="9.3" fill="#74a653"/><rect x="548.6" y="154.4" width="0.8" height="5.7" fill="#74a653"/><rect x="549.8" y="150.2" width="0.8" height="8.8" fill="#74a653"/><rect x="553.4" y="152.6" width="0.8" height="7.1" fill="#74a653"/><rect x="555.8" y="154.6" width="0.8" height="5.5" fill="#74a653"/><rect x="556.4" y="167.1" width="0.8" height="4.5" fill="#74a653"/><rect x="557.0" y="148.8" width="0.8" height="9.9" fill="#74a653"/><rect x="557.6" y="168.0" width="0.8" height="6.5" fill="#74a653"/><rect x="558.2" y="152.4" width="0.8" height="7.2" fill="#74a653"/><rect x="560.6" y="151.7" width="0.8" height="7.7" fill="#74a653"/><rect x="563.0" y="149.9" width="0.8" height="9.1" fill="#74a653"/><rect x="563.6" y="168.2" width="0.8" height="6.9" fill="#74a653"/><rect x="564.2" y="152.7" width="0.8" height="7.0" fill="#74a653"/><rect x="564.8" y="167.8" width="0.8" height="6.1" fill="#74a653"/><rect x="565.4" y="154.2" width="0.8" height="5.9" fill="#74a653"/><rect x="566.0" y="167.0" width="0.8" height="4.2" fill="#74a653"/><rect x="566.6" y="149.5" width="0.8" height="9.3" fill="#74a653"/><rect x="567.2" y="167.7" width="0.8" height="5.8" fill="#74a653"/><rect x="567.8" y="148.5" width="0.8" height="10.1" fill="#74a653"/><rect x="568.4" y="168.5" width="0.8" height="7.6" fill="#74a653"/><rect x="570.2" y="152.2" width="0.8" height="7.4" fill="#74a653"/><rect x="572.6" y="155.6" width="0.8" height="4.8" fill="#74a653"/><rect x="573.2" y="167.8" width="0.8" height="6.0" fill="#74a653"/><rect x="575.0" y="152.3" width="0.8" height="7.3" fill="#74a653"/><rect x="575.6" y="169.0" width="0.8" height="8.6" fill="#74a653"/><rect x="576.2" y="152.5" width="0.8" height="7.1" fill="#74a653"/><rect x="576.8" y="169.3" width="0.8" height="9.3" fill="#74a653"/><rect x="577.4" y="147.3" width="0.8" height="11.1" fill="#74a653"/><rect x="578.6" y="150.0" width="0.8" height="9.0" fill="#74a653"/><rect x="579.2" y="167.0" width="0.8" height="4.3" fill="#74a653"/><rect x="581.0" y="151.3" width="0.8" height="8.0" fill="#74a653"/><rect x="581.6" y="169.2" width="0.8" height="9.2" fill="#74a653"/><rect x="583.4" y="150.7" width="0.8" height="8.5" fill="#74a653"/><rect x="584.0" y="168.0" width="0.8" height="6.6" fill="#74a653"/><rect x="585.8" y="151.7" width="0.8" height="7.7" fill="#74a653"/><rect x="587.0" y="151.6" width="0.8" height="7.8" fill="#74a653"/><rect x="587.6" y="169.0" width="0.8" height="8.7" fill="#74a653"/><rect x="590.6" y="155.6" width="0.8" height="4.8" fill="#74a653"/><rect x="591.2" y="168.3" width="0.8" height="7.1" fill="#74a653"/><rect x="594.2" y="154.0" width="0.8" height="6.0" fill="#74a653"/><rect x="594.8" y="169.0" width="0.8" height="8.7" fill="#74a653"/><rect x="595.4" y="155.2" width="0.8" height="5.1" fill="#74a653"/><rect x="597.8" y="149.9" width="0.8" height="9.1" fill="#74a653"/><rect x="599.0" y="155.5" width="0.8" height="4.9" fill="#74a653"/><rect x="599.6" y="167.9" width="0.8" height="6.3" fill="#74a653"/><rect x="605.0" y="153.0" width="0.8" height="6.8" fill="#74a653"/><rect x="605.6" y="166.8" width="0.8" height="3.9" fill="#74a653"/><rect x="607.4" y="153.6" width="0.8" height="6.3" fill="#74a653"/><rect x="608.0" y="167.5" width="0.8" height="5.4" fill="#74a653"/><rect x="612.2" y="155.5" width="0.8" height="4.8" fill="#74a653"/><rect x="612.8" y="169.1" width="0.8" height="9.0" fill="#74a653"/><rect x="615.8" y="154.2" width="0.8" height="5.9" fill="#74a653"/><rect x="616.4" y="168.2" width="0.8" height="7.0" fill="#74a653"/><rect x="617.0" y="151.8" width="0.8" height="7.6" fill="#74a653"/><rect x="617.6" y="168.4" width="0.8" height="7.3" fill="#74a653"/><rect x="618.2" y="148.8" width="0.8" height="9.9" fill="#74a653"/><rect x="618.8" y="169.3" width="0.8" height="9.3" fill="#74a653"/><rect x="620.6" y="153.2" width="0.8" height="6.6" fill="#74a653"/><rect x="621.2" y="167.9" width="0.8" height="6.3" fill="#74a653"/><rect x="623.0" y="153.5" width="0.8" height="6.3" fill="#74a653"/><rect x="624.2" y="149.6" width="0.8" height="9.3" fill="#74a653"/><rect x="626.6" y="147.6" width="0.8" height="10.8" fill="#74a653"/><rect x="627.2" y="169.2" width="0.8" height="9.0" fill="#74a653"/><rect x="627.8" y="152.1" width="0.8" height="7.4" fill="#74a653"/><rect x="628.4" y="166.9" width="0.8" height="4.2" fill="#74a653"/><rect x="630.2" y="150.6" width="0.8" height="8.5" fill="#74a653"/><rect x="630.8" y="169.3" width="0.8" height="9.3" fill="#74a653"/><rect x="633.8" y="149.9" width="0.8" height="9.0" fill="#74a653"/><rect x="634.4" y="167.6" width="0.8" height="5.6" fill="#74a653"/><rect x="635.0" y="148.5" width="0.8" height="10.2" fill="#74a653"/><rect x="635.6" y="169.3" width="0.8" height="9.3" fill="#74a653"/><rect x="636.2" y="155.1" width="0.8" height="5.2" fill="#74a653"/><rect x="636.8" y="168.9" width="0.8" height="8.5" fill="#74a653"/><rect x="638.6" y="150.1" width="0.8" height="8.9" fill="#74a653"/><rect x="639.2" y="169.2" width="0.8" height="9.2" fill="#74a653"/><rect x="641.0" y="155.5" width="0.8" height="4.9" fill="#74a653"/><rect x="641.6" y="166.9" width="0.8" height="4.1" fill="#74a653"/><rect x="643.4" y="153.9" width="0.8" height="6.1" fill="#74a653"/><rect x="644.0" y="167.7" width="0.8" height="5.8" fill="#74a653"/><rect x="645.8" y="147.8" width="0.8" height="10.7" fill="#74a653"/><rect x="646.4" y="169.1" width="0.8" height="8.8" fill="#74a653"/><rect x="647.0" y="148.8" width="0.8" height="9.9" fill="#74a653"/><rect x="648.2" y="155.7" width="0.8" height="4.7" fill="#74a653"/><rect x="648.8" y="168.5" width="0.8" height="7.6" fill="#74a653"/><rect x="649.4" y="151.1" width="0.8" height="8.2" fill="#74a653"/><rect x="650.0" y="168.1" width="0.8" height="6.6" fill="#74a653"/><rect x="651.8" y="149.9" width="0.8" height="9.1" fill="#74a653"/><rect x="652.4" y="169.0" width="0.8" height="8.7" fill="#74a653"/><rect x="653.0" y="147.7" width="0.8" height="10.7" fill="#74a653"/><rect x="656.6" y="152.9" width="0.8" height="6.8" fill="#74a653"/><rect x="657.8" y="147.6" width="0.8" height="10.8" fill="#74a653"/><rect x="658.4" y="168.1" width="0.8" height="6.7" fill="#74a653"/><rect x="662.6" y="154.7" width="0.8" height="5.4" fill="#74a653"/><rect x="663.2" y="169.2" width="0.8" height="9.1" fill="#74a653"/><rect x="665.0" y="147.7" width="0.8" height="10.7" fill="#74a653"/><rect x="665.6" y="168.4" width="0.8" height="7.4" fill="#74a653"/><rect x="667.4" y="147.5" width="0.8" height="10.9" fill="#74a653"/><rect x="668.0" y="166.9" width="0.8" height="4.2" fill="#74a653"/><rect x="668.6" y="152.0" width="0.8" height="7.5" fill="#74a653"/><rect x="669.2" y="168.8" width="0.8" height="8.2" fill="#74a653"/><rect x="669.8" y="148.9" width="0.8" height="9.8" fill="#74a653"/><rect x="670.4" y="167.0" width="0.8" height="4.3" fill="#74a653"/><rect x="672.2" y="151.0" width="0.8" height="8.2" fill="#74a653"/><rect x="674.6" y="155.7" width="0.8" height="4.7" fill="#74a653"/><rect x="675.2" y="167.1" width="0.8" height="4.5" fill="#74a653"/><rect x="677.0" y="150.8" width="0.8" height="8.4" fill="#74a653"/><rect x="677.6" y="167.8" width="0.8" height="6.1" fill="#74a653"/><rect x="679.4" y="154.5" width="0.8" height="5.6" fill="#74a653"/><rect x="680.6" y="148.4" width="0.8" height="10.2" fill="#74a653"/><rect x="681.8" y="154.7" width="0.8" height="5.5" fill="#74a653"/><rect x="682.4" y="169.2" width="0.8" height="9.0" fill="#74a653"/><rect x="683.0" y="151.5" width="0.8" height="7.8" fill="#74a653"/><rect x="683.6" y="167.1" width="0.8" height="4.6" fill="#74a653"/><rect x="684.2" y="154.5" width="0.8" height="5.6" fill="#74a653"/><rect x="684.8" y="168.2" width="0.8" height="6.9" fill="#74a653"/><rect x="685.4" y="154.2" width="0.8" height="5.8" fill="#74a653"/><rect x="686.0" y="167.3" width="0.8" height="5.1" fill="#74a653"/><rect x="686.6" y="153.8" width="0.8" height="6.1" fill="#74a653"/><rect x="690.2" y="147.5" width="0.8" height="10.9" fill="#74a653"/><rect x="690.8" y="168.9" width="0.8" height="8.5" fill="#74a653"/><rect x="693.8" y="149.2" width="0.8" height="9.6" fill="#74a653"/><rect x="694.4" y="167.5" width="0.8" height="5.4" fill="#74a653"/><rect x="695.0" y="152.5" width="0.8" height="7.2" fill="#74a653"/><rect x="695.6" y="167.6" width="0.8" height="5.6" fill="#74a653"/><rect x="697.4" y="150.8" width="0.8" height="8.4" fill="#74a653"/><rect x="698.0" y="168.4" width="0.8" height="7.4" fill="#74a653"/><rect x="701.0" y="153.8" width="0.8" height="6.2" fill="#74a653"/><rect x="701.6" y="169.5" width="0.8" height="9.7" fill="#74a653"/><rect x="702.2" y="150.4" width="0.8" height="8.7" fill="#74a653"/><rect x="702.8" y="169.0" width="0.8" height="8.7" fill="#74a653"/><rect x="703.4" y="148.7" width="0.8" height="10.0" fill="#74a653"/><rect x="704.0" y="169.3" width="0.8" height="9.3" fill="#74a653"/><rect x="704.6" y="147.5" width="0.8" height="10.8" fill="#74a653"/><rect x="705.2" y="167.9" width="0.8" height="6.3" fill="#74a653"/><rect x="705.8" y="153.8" width="0.8" height="6.2" fill="#74a653"/><rect x="708.2" y="152.9" width="0.8" height="6.8" fill="#74a653"/><rect x="708.8" y="167.3" width="0.8" height="5.1" fill="#74a653"/><rect x="709.4" y="153.0" width="0.8" height="6.7" fill="#74a653"/><rect x="713.0" y="151.5" width="0.8" height="7.9" fill="#74a653"/><rect x="717.8" y="150.4" width="0.8" height="8.7" fill="#74a653"/><rect x="720.2" y="149.5" width="0.8" height="9.3" fill="#74a653"/><rect x="720.8" y="167.2" width="0.8" height="4.8" fill="#74a653"/><rect x="725.0" y="148.5" width="0.8" height="10.1" fill="#74a653"/><rect x="732.2" y="148.6" width="0.8" height="10.1" fill="#74a653"/><rect x="734.6" y="147.4" width="0.8" height="11.0" fill="#74a653"/><rect x="735.2" y="169.4" width="0.8" height="9.4" fill="#74a653"/><rect x="735.8" y="147.3" width="0.8" height="11.0" fill="#74a653"/><rect x="737.0" y="148.5" width="0.8" height="10.2" fill="#74a653"/><rect x="737.6" y="167.3" width="0.8" height="5.1" fill="#74a653"/><rect x="738.2" y="153.9" width="0.8" height="6.1" fill="#74a653"/><rect x="738.8" y="169.3" width="0.8" height="9.2" fill="#74a653"/><rect x="741.8" y="148.9" width="0.8" height="9.8" fill="#74a653"/><rect x="746.6" y="155.2" width="0.8" height="5.1" fill="#74a653"/><rect x="747.2" y="169.1" width="0.8" height="8.8" fill="#74a653"/><rect x="747.8" y="150.6" width="0.8" height="8.5" fill="#74a653"/><rect x="750.2" y="151.6" width="0.8" height="7.8" fill="#74a653"/><rect x="750.8" y="167.1" width="0.8" height="4.5" fill="#74a653"/><rect x="752.6" y="150.6" width="0.8" height="8.6" fill="#74a653"/><rect x="753.2" y="167.7" width="0.8" height="5.9" fill="#74a653"/><rect x="753.8" y="152.8" width="0.8" height="6.9" fill="#74a653"/><rect x="756.2" y="155.2" width="0.8" height="5.1" fill="#74a653"/><rect x="756.8" y="168.7" width="0.8" height="8.0" fill="#74a653"/><rect x="757.4" y="150.1" width="0.8" height="9.0" fill="#74a653"/><rect x="758.6" y="149.9" width="0.8" height="9.1" fill="#74a653"/><rect x="759.2" y="169.0" width="0.8" height="8.7" fill="#74a653"/><rect x="759.8" y="153.6" width="0.8" height="6.3" fill="#74a653"/><rect x="761.0" y="154.0" width="0.8" height="6.0" fill="#74a653"/><rect x="764.6" y="151.5" width="0.8" height="7.9" fill="#74a653"/><rect x="768.2" y="148.5" width="0.8" height="10.1" fill="#74a653"/><rect x="768.8" y="168.2" width="0.8" height="7.0" fill="#74a653"/><rect x="769.4" y="154.4" width="0.8" height="5.7" fill="#74a653"/><rect x="770.6" y="148.7" width="0.8" height="10.0" fill="#74a653"/><rect x="771.2" y="167.8" width="0.8" height="6.0" fill="#74a653"/><rect x="771.8" y="151.0" width="0.8" height="8.2" fill="#74a653"/><rect x="774.2" y="147.6" width="0.8" height="10.8" fill="#74a653"/><rect x="776.6" y="150.4" width="0.8" height="8.7" fill="#74a653"/><rect x="777.2" y="169.4" width="0.8" height="9.5" fill="#74a653"/><rect x="777.8" y="150.0" width="0.8" height="9.0" fill="#74a653"/><rect x="778.4" y="167.8" width="0.8" height="6.1" fill="#74a653"/><rect x="782.6" y="152.7" width="0.8" height="7.0" fill="#74a653"/><rect x="783.8" y="148.5" width="0.8" height="10.1" fill="#74a653"/><rect x="784.4" y="168.3" width="0.8" height="7.2" fill="#74a653"/><rect x="785.0" y="149.2" width="0.8" height="9.6" fill="#74a653"/><rect x="788.6" y="153.1" width="0.8" height="6.7" fill="#74a653"/><rect x="789.2" y="169.4" width="0.8" height="9.5" fill="#74a653"/><rect x="791.0" y="150.7" width="0.8" height="8.5" fill="#74a653"/><rect x="791.6" y="166.9" width="0.8" height="4.2" fill="#74a653"/><rect x="792.2" y="149.3" width="0.8" height="9.5" fill="#74a653"/><rect x="792.8" y="167.6" width="0.8" height="5.5" fill="#74a653"/><rect x="794.6" y="151.1" width="0.8" height="8.2" fill="#74a653"/><rect x="795.2" y="169.4" width="0.8" height="9.6" fill="#74a653"/><rect x="799.4" y="147.3" width="0.8" height="11.0" fill="#74a653"/><rect x="801.8" y="154.5" width="0.8" height="5.6" fill="#74a653"/><rect x="802.4" y="169.0" width="0.8" height="8.7" fill="#74a653"/><rect x="804.2" y="154.7" width="0.8" height="5.4" fill="#74a653"/><rect x="804.8" y="169.2" width="0.8" height="9.0" fill="#74a653"/><rect x="805.4" y="149.4" width="0.8" height="9.5" fill="#74a653"/><rect x="806.0" y="167.6" width="0.8" height="5.7" fill="#74a653"/><rect x="806.6" y="153.3" width="0.8" height="6.5" fill="#74a653"/><rect x="807.2" y="169.4" width="0.8" height="9.6" fill="#74a653"/><rect x="809.0" y="153.2" width="0.8" height="6.6" fill="#74a653"/><rect x="810.2" y="153.1" width="0.8" height="6.7" fill="#74a653"/><rect x="810.8" y="167.1" width="0.8" height="4.5" fill="#74a653"/><rect x="811.4" y="152.5" width="0.8" height="7.2" fill="#74a653"/><rect x="812.0" y="169.4" width="0.8" height="9.5" fill="#74a653"/><rect x="812.6" y="154.2" width="0.8" height="5.9" fill="#74a653"/><rect x="813.8" y="148.5" width="0.8" height="10.2" fill="#74a653"/><rect x="814.4" y="168.9" width="0.8" height="8.5" fill="#74a653"/><rect x="815.0" y="154.6" width="0.8" height="5.5" fill="#74a653"/><rect x="816.2" y="151.0" width="0.8" height="8.3" fill="#74a653"/><rect x="816.8" y="168.8" width="0.8" height="8.3" fill="#74a653"/><rect x="817.4" y="152.7" width="0.8" height="6.9" fill="#74a653"/><rect x="819.8" y="150.3" width="0.8" height="8.8" fill="#74a653"/><rect x="820.4" y="168.9" width="0.8" height="8.4" fill="#74a653"/><rect x="821.0" y="148.6" width="0.8" height="10.1" fill="#74a653"/><rect x="821.6" y="167.8" width="0.8" height="6.0" fill="#74a653"/><rect x="823.4" y="153.8" width="0.8" height="6.1" fill="#74a653"/><rect x="824.0" y="168.3" width="0.8" height="7.1" fill="#74a653"/><rect x="827.0" y="148.7" width="0.8" height="10.0" fill="#74a653"/><rect x="827.6" y="167.6" width="0.8" height="5.7" fill="#74a653"/><rect x="834.2" y="147.5" width="0.8" height="10.8" fill="#74a653"/><rect x="835.4" y="152.5" width="0.8" height="7.1" fill="#74a653"/><rect x="836.6" y="154.3" width="0.8" height="5.8" fill="#74a653"/><rect x="842.6" y="153.0" width="0.8" height="6.8" fill="#74a653"/><rect x="843.2" y="167.9" width="0.8" height="6.3" fill="#74a653"/><rect x="604.3" y="104" width="1.6" height="82" fill="#1c1c1c"/><path d="M599,103 L611,103 L605,109 Z" fill="#d8d8d8"/></svg>
<svg class="ab" style="left:0;top:0" width="1200" height="763"><rect x="135.8" y="103.5" width="1.5" height="7.8" fill="#a6a8ae"/><rect x="140.0" y="103.5" width="1" height="3.2" fill="#8d9097"/><rect x="144.1" y="103.5" width="1" height="3.2" fill="#8d9097"/><rect x="148.1" y="103.5" width="1" height="3.2" fill="#8d9097"/><rect x="152.2" y="103.5" width="1" height="3.2" fill="#8d9097"/><rect x="156.2" y="103.5" width="1" height="4" fill="#8d9097"/><rect x="160.3" y="103.5" width="1" height="3.2" fill="#8d9097"/><rect x="164.3" y="103.5" width="1" height="3.2" fill="#8d9097"/><rect x="168.4" y="103.5" width="1" height="3.2" fill="#8d9097"/><rect x="172.4" y="103.5" width="1" height="3.2" fill="#8d9097"/><rect x="176.3" y="103.5" width="1.5" height="7.8" fill="#a6a8ae"/><rect x="180.5" y="103.5" width="1" height="3.2" fill="#8d9097"/><rect x="184.6" y="103.5" width="1" height="3.2" fill="#8d9097"/><rect x="188.6" y="103.5" width="1" height="3.2" fill="#8d9097"/><rect x="192.7" y="103.5" width="1" height="3.2" fill="#8d9097"/><rect x="196.7" y="103.5" width="1" height="4" fill="#8d9097"/><rect x="200.8" y="103.5" width="1" height="3.2" fill="#8d9097"/><rect x="204.8" y="103.5" width="1" height="3.2" fill="#8d9097"/><rect x="208.8" y="103.5" width="1" height="3.2" fill="#8d9097"/><rect x="212.9" y="103.5" width="1" height="3.2" fill="#8d9097"/><rect x="216.7" y="103.5" width="1.5" height="7.8" fill="#a6a8ae"/><rect x="221.0" y="103.5" width="1" height="3.2" fill="#8d9097"/><rect x="225.0" y="103.5" width="1" height="3.2" fill="#8d9097"/><rect x="229.1" y="103.5" width="1" height="3.2" fill="#8d9097"/><rect x="233.1" y="103.5" width="1" height="3.2" fill="#8d9097"/><rect x="237.2" y="103.5" width="1" height="4" fill="#8d9097"/><rect x="241.2" y="103.5" width="1" height="3.2" fill="#8d9097"/><rect x="245.3" y="103.5" width="1" height="3.2" fill="#8d9097"/><rect x="249.3" y="103.5" width="1" height="3.2" fill="#8d9097"/><rect x="253.4" y="103.5" width="1" height="3.2" fill="#8d9097"/><rect x="257.2" y="103.5" width="1.5" height="7.8" fill="#a6a8ae"/><rect x="261.5" y="103.5" width="1" height="3.2" fill="#8d9097"/><rect x="265.5" y="103.5" width="1" height="3.2" fill="#8d9097"/><rect x="269.6" y="103.5" width="1" height="3.2" fill="#8d9097"/><rect x="273.6" y="103.5" width="1" height="3.2" fill="#8d9097"/><rect x="277.6" y="103.5" width="1" height="4" fill="#8d9097"/><rect x="281.7" y="103.5" width="1" height="3.2" fill="#8d9097"/><rect x="285.7" y="103.5" width="1" height="3.2" fill="#8d9097"/><rect x="289.8" y="103.5" width="1" height="3.2" fill="#8d9097"/><rect x="293.8" y="103.5" width="1" height="3.2" fill="#8d9097"/><rect x="297.7" y="103.5" width="1.5" height="7.8" fill="#a6a8ae"/><rect x="301.9" y="103.5" width="1" height="3.2" fill="#8d9097"/><rect x="306.0" y="103.5" width="1" height="3.2" fill="#8d9097"/><rect x="310.0" y="103.5" width="1" height="3.2" fill="#8d9097"/><rect x="314.1" y="103.5" width="1" height="3.2" fill="#8d9097"/><rect x="318.1" y="103.5" width="1" height="4" fill="#8d9097"/><rect x="322.2" y="103.5" width="1" height="3.2" fill="#8d9097"/><rect x="326.2" y="103.5" width="1" height="3.2" fill="#8d9097"/><rect x="330.3" y="103.5" width="1" height="3.2" fill="#8d9097"/><rect x="334.3" y="103.5" width="1" height="3.2" fill="#8d9097"/><rect x="338.2" y="103.5" width="1.5" height="7.8" fill="#a6a8ae"/><rect x="342.4" y="103.5" width="1" height="3.2" fill="#8d9097"/><rect x="346.4" y="103.5" width="1" height="3.2" fill="#8d9097"/><rect x="350.5" y="103.5" width="1" height="3.2" fill="#8d9097"/><rect x="354.5" y="103.5" width="1" height="3.2" fill="#8d9097"/><rect x="358.6" y="103.5" width="1" height="4" fill="#8d9097"/><rect x="362.6" y="103.5" width="1" height="3.2" fill="#8d9097"/><rect x="366.7" y="103.5" width="1" height="3.2" fill="#8d9097"/><rect x="370.7" y="103.5" width="1" height="3.2" fill="#8d9097"/><rect x="374.8" y="103.5" width="1" height="3.2" fill="#8d9097"/><rect x="378.6" y="103.5" width="1.5" height="7.8" fill="#a6a8ae"/><rect x="382.9" y="103.5" width="1" height="3.2" fill="#8d9097"/><rect x="386.9" y="103.5" width="1" height="3.2" fill="#8d9097"/><rect x="391.0" y="103.5" width="1" height="3.2" fill="#8d9097"/><rect x="395.0" y="103.5" width="1" height="3.2" fill="#8d9097"/><rect x="399.1" y="103.5" width="1" height="4" fill="#8d9097"/><rect x="403.1" y="103.5" width="1" height="3.2" fill="#8d9097"/><rect x="407.1" y="103.5" width="1" height="3.2" fill="#8d9097"/><rect x="411.2" y="103.5" width="1" height="3.2" fill="#8d9097"/><rect x="415.2" y="103.5" width="1" height="3.2" fill="#8d9097"/><rect x="419.1" y="103.5" width="1.5" height="7.8" fill="#a6a8ae"/><rect x="423.3" y="103.5" width="1" height="3.2" fill="#8d9097"/><rect x="427.4" y="103.5" width="1" height="3.2" fill="#8d9097"/><rect x="431.4" y="103.5" width="1" height="3.2" fill="#8d9097"/><rect x="435.5" y="103.5" width="1" height="3.2" fill="#8d9097"/><rect x="439.5" y="103.5" width="1" height="4" fill="#8d9097"/><rect x="443.6" y="103.5" width="1" height="3.2" fill="#8d9097"/><rect x="447.6" y="103.5" width="1" height="3.2" fill="#8d9097"/><rect x="451.7" y="103.5" width="1" height="3.2" fill="#8d9097"/><rect x="455.7" y="103.5" width="1" height="3.2" fill="#8d9097"/><rect x="459.6" y="103.5" width="1.5" height="7.8" fill="#a6a8ae"/><rect x="463.8" y="103.5" width="1" height="3.2" fill="#8d9097"/><rect x="467.9" y="103.5" width="1" height="3.2" fill="#8d9097"/><rect x="471.9" y="103.5" width="1" height="3.2" fill="#8d9097"/><rect x="475.9" y="103.5" width="1" height="3.2" fill="#8d9097"/><rect x="480.0" y="103.5" width="1" height="4" fill="#8d9097"/><rect x="484.0" y="103.5" width="1" height="3.2" fill="#8d9097"/><rect x="488.1" y="103.5" width="1" height="3.2" fill="#8d9097"/><rect x="492.1" y="103.5" width="1" height="3.2" fill="#8d9097"/><rect x="496.2" y="103.5" width="1" height="3.2" fill="#8d9097"/><rect x="500.0" y="103.5" width="1.5" height="7.8" fill="#a6a8ae"/><rect x="504.3" y="103.5" width="1" height="3.2" fill="#8d9097"/><rect x="508.3" y="103.5" width="1" height="3.2" fill="#8d9097"/><rect x="512.4" y="103.5" width="1" height="3.2" fill="#8d9097"/><rect x="516.4" y="103.5" width="1" height="3.2" fill="#8d9097"/><rect x="520.5" y="103.5" width="1" height="4" fill="#8d9097"/><rect x="524.5" y="103.5" width="1" height="3.2" fill="#8d9097"/><rect x="528.6" y="103.5" width="1" height="3.2" fill="#8d9097"/><rect x="532.6" y="103.5" width="1" height="3.2" fill="#8d9097"/><rect x="536.7" y="103.5" width="1" height="3.2" fill="#8d9097"/><rect x="540.5" y="103.5" width="1.5" height="7.8" fill="#a6a8ae"/><rect x="544.7" y="103.5" width="1" height="3.2" fill="#8d9097"/><rect x="548.8" y="103.5" width="1" height="3.2" fill="#8d9097"/><rect x="552.8" y="103.5" width="1" height="3.2" fill="#8d9097"/><rect x="556.9" y="103.5" width="1" height="3.2" fill="#8d9097"/><rect x="560.9" y="103.5" width="1" height="4" fill="#8d9097"/><rect x="565.0" y="103.5" width="1" height="3.2" fill="#8d9097"/><rect x="569.0" y="103.5" width="1" height="3.2" fill="#8d9097"/><rect x="573.1" y="103.5" width="1" height="3.2" fill="#8d9097"/><rect x="577.1" y="103.5" width="1" height="3.2" fill="#8d9097"/><rect x="581.0" y="103.5" width="1.5" height="7.8" fill="#a6a8ae"/><rect x="585.2" y="103.5" width="1" height="3.2" fill="#8d9097"/><rect x="589.3" y="103.5" width="1" height="3.2" fill="#8d9097"/><rect x="593.3" y="103.5" width="1" height="3.2" fill="#8d9097"/><rect x="597.4" y="103.5" width="1" height="3.2" fill="#8d9097"/><rect x="601.4" y="103.5" width="1" height="4" fill="#8d9097"/><rect x="605.5" y="103.5" width="1" height="3.2" fill="#8d9097"/><rect x="609.5" y="103.5" width="1" height="3.2" fill="#8d9097"/><rect x="613.5" y="103.5" width="1" height="3.2" fill="#8d9097"/><rect x="617.6" y="103.5" width="1" height="3.2" fill="#8d9097"/><rect x="621.4" y="103.5" width="1.5" height="7.8" fill="#a6a8ae"/><rect x="625.7" y="103.5" width="1" height="3.2" fill="#8d9097"/><rect x="629.7" y="103.5" width="1" height="3.2" fill="#8d9097"/><rect x="633.8" y="103.5" width="1" height="3.2" fill="#8d9097"/><rect x="637.8" y="103.5" width="1" height="3.2" fill="#8d9097"/><rect x="641.9" y="103.5" width="1" height="4" fill="#8d9097"/><rect x="645.9" y="103.5" width="1" height="3.2" fill="#8d9097"/><rect x="650.0" y="103.5" width="1" height="3.2" fill="#8d9097"/><rect x="654.0" y="103.5" width="1" height="3.2" fill="#8d9097"/><rect x="658.1" y="103.5" width="1" height="3.2" fill="#8d9097"/><rect x="661.9" y="103.5" width="1.5" height="7.8" fill="#a6a8ae"/><rect x="666.2" y="103.5" width="1" height="3.2" fill="#8d9097"/><rect x="670.2" y="103.5" width="1" height="3.2" fill="#8d9097"/><rect x="674.3" y="103.5" width="1" height="3.2" fill="#8d9097"/><rect x="678.3" y="103.5" width="1" height="3.2" fill="#8d9097"/><rect x="682.3" y="103.5" width="1" height="4" fill="#8d9097"/><rect x="686.4" y="103.5" width="1" height="3.2" fill="#8d9097"/><rect x="690.4" y="103.5" width="1" height="3.2" fill="#8d9097"/><rect x="694.5" y="103.5" width="1" height="3.2" fill="#8d9097"/><rect x="698.5" y="103.5" width="1" height="3.2" fill="#8d9097"/><rect x="702.4" y="103.5" width="1.5" height="7.8" fill="#a6a8ae"/><rect x="706.6" y="103.5" width="1" height="3.2" fill="#8d9097"/><rect x="710.7" y="103.5" width="1" height="3.2" fill="#8d9097"/><rect x="714.7" y="103.5" width="1" height="3.2" fill="#8d9097"/><rect x="718.8" y="103.5" width="1" height="3.2" fill="#8d9097"/><rect x="722.8" y="103.5" width="1" height="4" fill="#8d9097"/><rect x="726.9" y="103.5" width="1" height="3.2" fill="#8d9097"/><rect x="730.9" y="103.5" width="1" height="3.2" fill="#8d9097"/><rect x="735.0" y="103.5" width="1" height="3.2" fill="#8d9097"/><rect x="739.0" y="103.5" width="1" height="3.2" fill="#8d9097"/><rect x="742.8" y="103.5" width="1.5" height="7.8" fill="#a6a8ae"/><rect x="747.1" y="103.5" width="1" height="3.2" fill="#8d9097"/><rect x="751.1" y="103.5" width="1" height="3.2" fill="#8d9097"/><rect x="755.2" y="103.5" width="1" height="3.2" fill="#8d9097"/><rect x="759.2" y="103.5" width="1" height="3.2" fill="#8d9097"/><rect x="763.3" y="103.5" width="1" height="4" fill="#8d9097"/><rect x="767.3" y="103.5" width="1" height="3.2" fill="#8d9097"/><rect x="771.4" y="103.5" width="1" height="3.2" fill="#8d9097"/><rect x="775.4" y="103.5" width="1" height="3.2" fill="#8d9097"/><rect x="779.5" y="103.5" width="1" height="3.2" fill="#8d9097"/><rect x="783.3" y="103.5" width="1.5" height="7.8" fill="#a6a8ae"/><rect x="787.6" y="103.5" width="1" height="3.2" fill="#8d9097"/><rect x="791.6" y="103.5" width="1" height="3.2" fill="#8d9097"/><rect x="795.7" y="103.5" width="1" height="3.2" fill="#8d9097"/><rect x="799.7" y="103.5" width="1" height="3.2" fill="#8d9097"/><rect x="803.8" y="103.5" width="1" height="4" fill="#8d9097"/><rect x="807.8" y="103.5" width="1" height="3.2" fill="#8d9097"/><rect x="811.8" y="103.5" width="1" height="3.2" fill="#8d9097"/><rect x="815.9" y="103.5" width="1" height="3.2" fill="#8d9097"/><rect x="819.9" y="103.5" width="1" height="3.2" fill="#8d9097"/><rect x="823.8" y="103.5" width="1.5" height="7.8" fill="#a6a8ae"/><rect x="828.0" y="103.5" width="1" height="3.2" fill="#8d9097"/><rect x="832.1" y="103.5" width="1" height="3.2" fill="#8d9097"/><rect x="836.1" y="103.5" width="1" height="3.2" fill="#8d9097"/><rect x="840.2" y="103.5" width="1" height="3.2" fill="#8d9097"/><rect x="844.2" y="103.5" width="1" height="4" fill="#8d9097"/><rect x="848.3" y="103.5" width="1" height="3.2" fill="#8d9097"/><rect x="852.3" y="103.5" width="1" height="3.2" fill="#8d9097"/><rect x="856.4" y="103.5" width="1" height="3.2" fill="#8d9097"/><rect x="860.4" y="103.5" width="1" height="3.2" fill="#8d9097"/><rect x="864.3" y="103.5" width="1.5" height="7.8" fill="#a6a8ae"/><rect x="868.5" y="103.5" width="1" height="3.2" fill="#8d9097"/><rect x="872.6" y="103.5" width="1" height="3.2" fill="#8d9097"/><rect x="876.6" y="103.5" width="1" height="3.2" fill="#8d9097"/><rect x="880.6" y="103.5" width="1" height="3.2" fill="#8d9097"/><rect x="884.7" y="103.5" width="1" height="4" fill="#8d9097"/><rect x="888.7" y="103.5" width="1" height="3.2" fill="#8d9097"/><rect x="892.8" y="103.5" width="1" height="3.2" fill="#8d9097"/><rect x="896.8" y="103.5" width="1" height="3.2" fill="#8d9097"/><rect x="900.9" y="103.5" width="1" height="3.2" fill="#8d9097"/><rect x="904.7" y="103.5" width="1.5" height="7.8" fill="#a6a8ae"/><rect x="909.0" y="103.5" width="1" height="3.2" fill="#8d9097"/><rect x="913.0" y="103.5" width="1" height="3.2" fill="#8d9097"/><rect x="917.1" y="103.5" width="1" height="3.2" fill="#8d9097"/><rect x="921.1" y="103.5" width="1" height="3.2" fill="#8d9097"/><rect x="925.2" y="103.5" width="1" height="4" fill="#8d9097"/><rect x="929.2" y="103.5" width="1" height="3.2" fill="#8d9097"/><rect x="933.3" y="103.5" width="1" height="3.2" fill="#8d9097"/><text x="177.0" y="119.3" text-anchor="middle" font-size="10.2" fill="#9a9ca3" font-family="Liberation Sans">0:10</text><text x="217.4" y="119.3" text-anchor="middle" font-size="10.2" fill="#9a9ca3" font-family="Liberation Sans">0:20</text><text x="257.9" y="119.3" text-anchor="middle" font-size="10.2" fill="#9a9ca3" font-family="Liberation Sans">0:30</text><text x="298.4" y="119.3" text-anchor="middle" font-size="10.2" fill="#9a9ca3" font-family="Liberation Sans">0:40</text><text x="338.9" y="119.3" text-anchor="middle" font-size="10.2" fill="#9a9ca3" font-family="Liberation Sans">0:50</text><text x="379.3" y="119.3" text-anchor="middle" font-size="10.2" fill="#9a9ca3" font-family="Liberation Sans">1:00</text><text x="419.8" y="119.3" text-anchor="middle" font-size="10.2" fill="#9a9ca3" font-family="Liberation Sans">1:10</text><text x="460.3" y="119.3" text-anchor="middle" font-size="10.2" fill="#9a9ca3" font-family="Liberation Sans">1:20</text><text x="500.7" y="119.3" text-anchor="middle" font-size="10.2" fill="#9a9ca3" font-family="Liberation Sans">1:30</text><text x="541.2" y="119.3" text-anchor="middle" font-size="10.2" fill="#9a9ca3" font-family="Liberation Sans">1:40</text><text x="581.7" y="119.3" text-anchor="middle" font-size="10.2" fill="#9a9ca3" font-family="Liberation Sans">1:50</text><text x="622.1" y="119.3" text-anchor="middle" font-size="10.2" fill="#9a9ca3" font-family="Liberation Sans">2:00</text><text x="662.6" y="119.3" text-anchor="middle" font-size="10.2" fill="#9a9ca3" font-family="Liberation Sans">2:10</text><text x="703.1" y="119.3" text-anchor="middle" font-size="10.2" fill="#9a9ca3" font-family="Liberation Sans">2:20</text><text x="743.5" y="119.3" text-anchor="middle" font-size="10.2" fill="#9a9ca3" font-family="Liberation Sans">2:30</text><text x="784.0" y="119.3" text-anchor="middle" font-size="10.2" fill="#9a9ca3" font-family="Liberation Sans">2:40</text><text x="824.5" y="119.3" text-anchor="middle" font-size="10.2" fill="#9a9ca3" font-family="Liberation Sans">2:50</text><text x="865.0" y="119.3" text-anchor="middle" font-size="10.2" fill="#9a9ca3" font-family="Liberation Sans">3:00</text><text x="905.4" y="119.3" text-anchor="middle" font-size="10.2" fill="#9a9ca3" font-family="Liberation Sans">3:10</text></svg>
<div style="position:absolute;left:43px;top:187px;width:65px;height:436px;background:#172a3b;"></div>
<div style="position:absolute;left:108px;top:186px;width:830px;height:438px;background:#000;"></div>
<svg class="ab" style="left:0;top:0" width="1200" height="763"><path d="M664,320.6 L683.6,320.6 L683.6,336.4 L664,336.4Z M664,352 L683.6,352 L683.6,433.7 L664,433.7Z" fill="#111"/><path d="M701.3,320.6 L746.5,320.6 L780.5,355 L783,357 L786,352 L829,352 L801.6,375.7 L864.5,433.7 L818.3,433.7 L780,395.4 L739.6,433.7 L699.3,433.7 L762.2,375.7 Z" fill="#111"/><path d="M801.6,336.4 L820.2,320.6 L861.5,320.6 L843.8,336.4Z" fill="#111"/></svg>
<div style="position:absolute;left:110px;top:187.5px;width:89px;height:434px;background:#333843;"></div>
<div style="position:absolute;left:114px;top:206px;width:47px;height:19px;background:#000;"></div>
<div class="t" style="left:114px;top:210.5px;width:47px;text-align:center;font-size:11px;color:#fff;-webkit-text-stroke:0.2px #fff;transform:scaleX(0.98);transform-origin:center 0;">&#8722;1.5</div>
<div style="position:absolute;left:171.0px;top:205.5px;width:5px;height:350.5px;background:#000;"></div><div style="position:absolute;left:171.0px;top:214px;width:5px;height:342.0px;background:linear-gradient(to bottom,#e9301c 0%,#f07628 9%,#f3c83a 18%,#f4f140 27%,#d2e63c 42%,#8cc432 60%,#55a02a 80%,#3c8a24 100%);background-size:5px 350.5px;background-position:0 -8.5px;"></div><div style="position:absolute;left:177.3px;top:205.5px;width:5px;height:350.5px;background:#000;"></div><div style="position:absolute;left:177.3px;top:227px;width:5px;height:329.0px;background:linear-gradient(to bottom,#e9301c 0%,#f07628 9%,#f3c83a 18%,#f4f140 27%,#d2e63c 42%,#8cc432 60%,#55a02a 80%,#3c8a24 100%);background-size:5px 350.5px;background-position:0 -21.5px;"></div>
<div style="position:absolute;left:171px;top:205.5px;width:5px;height:4px;background:#111;"></div>
<div style="position:absolute;left:171px;top:210.5px;width:5px;height:3.5px;background:#000;"></div>
<div style="position:absolute;left:148.5px;top:248px;width:3px;height:283px;background:#3d8fd0;"></div>
<div style="position:absolute;left:134px;top:347.5px;width:9px;height:1px;background:#a8a8a8;"></div>
<div style="position:absolute;left:156px;top:347.5px;width:9px;height:1px;background:#a8a8a8;"></div>
<div class="t" style="left:100.7px;top:272px;width:30px;text-align:right;font-size:7.5px;color:#b4b6bc;">10</div><div class="t" style="left:100.7px;top:304px;width:30px;text-align:right;font-size:7.5px;color:#b4b6bc;">6</div><div class="t" style="left:100.7px;top:324px;width:30px;text-align:right;font-size:7.5px;color:#b4b6bc;">3</div><div class="t" style="left:100.7px;top:344px;width:30px;text-align:right;font-size:7.5px;color:#b4b6bc;">0</div><div class="t" style="left:100.7px;top:360.6px;width:30px;text-align:right;font-size:7.5px;color:#b4b6bc;">&#8211;3</div><div class="t" style="left:100.7px;top:376px;width:30px;text-align:right;font-size:7.5px;color:#b4b6bc;">&#8211;6</div><div class="t" style="left:100.7px;top:394.8px;width:30px;text-align:right;font-size:7.5px;color:#b4b6bc;">&#8211;10</div><div class="t" style="left:100.7px;top:424px;width:30px;text-align:right;font-size:7.5px;color:#b4b6bc;">&#8211;18</div><div class="t" style="left:100.7px;top:455.7px;width:30px;text-align:right;font-size:7.5px;color:#b4b6bc;">&#8211;30</div><div class="t" style="left:100.7px;top:486.7px;width:30px;text-align:right;font-size:7.5px;color:#b4b6bc;">&#8211;50</div>
<div style="position:absolute;left:142.5px;top:340px;width:15px;height:36px;box-sizing:border-box;border-radius:2px;border:1px solid #222;background:linear-gradient(to bottom,#a9a9a9 0%,#8c8c8c 11%,#2a2a2a 15%,#161616 30%,#3c3c3c 45%,#d8d8d8 49%,#eeeeee 51%,#9a9a9a 54%,#7e7e7e 72%,#5a5a5a 82%,#2e2e2e 86%,#5c5c5c 95%,#8a8a8a 100%);box-shadow:0 1px 2px rgba(0,0,0,.6);"></div>
<div style="position:absolute;left:117.5px;top:560px;width:74px;height:18px;background:#000;"></div>
<div class="t" style="left:121.5px;top:564px;font-size:11px;color:#fff;-webkit-text-stroke:0.25px #fff;transform:scaleX(0.95);transform-origin:left 0;">Master</div>
<div style="position:absolute;left:202px;top:187.5px;width:91px;height:425.5px;background:#333843;"></div>
<div style="position:absolute;left:202px;top:613px;width:91px;height:10px;background:#e07a7a;"></div>
<div class="t" style="left:202px;top:614.5px;width:91px;text-align:center;font-size:8.5px;color:#333;">1</div>
<div class="ms" style="left:213px;top:210px;width:23px;height:22px;font-size:15.8px;line-height:23.8px;"><span>M</span></div>
<div class="ms" style="left:259px;top:210px;width:23px;height:22px;font-size:15.3px;line-height:23.5px;"><span>S</span></div>
<div style="position:absolute;left:208.5px;top:263px;width:31.5px;height:10px;background:#fff;"></div>
<div class="t" style="left:208.5px;top:263.5px;width:31.5px;text-align:center;font-size:10px;color:#111;">&#8211;100</div>
<div style="position:absolute;left:254px;top:263px;width:32px;height:10px;background:#fff;"></div>
<div class="t" style="left:254px;top:263.5px;width:32px;text-align:center;font-size:10px;color:#111;">&#8211;23</div>
<div style="position:absolute;left:206.5px;top:286px;width:46.5px;height:18.5px;background:#000;"></div>
<div class="t" style="left:206.5px;top:290.5px;width:46.5px;text-align:center;font-size:11px;color:#fff;-webkit-text-stroke:0.2px #fff;transform:scaleX(0.98);transform-origin:center 0;">0.0</div>
<div style="position:absolute;left:264.2px;top:287px;width:5px;height:261.5px;background:#000;"></div><div style="position:absolute;left:264.2px;top:326.6px;width:5px;height:221.9px;background:linear-gradient(to bottom,#e9301c 0%,#f07628 9%,#f3c83a 18%,#f4f140 27%,#d2e63c 42%,#8cc432 60%,#55a02a 80%,#3c8a24 100%);background-size:5px 261.5px;background-position:0 -39.60000000000002px;"></div><div style="position:absolute;left:264.2px;top:324px;width:5px;height:1.5px;background:#f0a030;"></div><div style="position:absolute;left:270.5px;top:287px;width:5px;height:261.5px;background:#000;"></div><div style="position:absolute;left:270.5px;top:354px;width:5px;height:194.5px;background:linear-gradient(to bottom,#e9301c 0%,#f07628 9%,#f3c83a 18%,#f4f140 27%,#d2e63c 42%,#8cc432 60%,#55a02a 80%,#3c8a24 100%);background-size:5px 261.5px;background-position:0 -67px;"></div><div style="position:absolute;left:270.5px;top:349.5px;width:5px;height:1.5px;background:#d8c020;"></div>
<div style="position:absolute;left:241px;top:332px;width:3px;height:192px;background:#3d8fd0;"></div>
<div style="position:absolute;left:227px;top:381.5px;width:9.5px;height:1px;background:#a8a8a8;"></div>
<div style="position:absolute;left:248.5px;top:381.5px;width:9.5px;height:1px;background:#a8a8a8;"></div>
<div class="t" style="left:194.2px;top:334px;width:30px;text-align:right;font-size:7.5px;color:#b4b6bc;">6</div><div class="t" style="left:194.2px;top:357.5px;width:30px;text-align:right;font-size:7.5px;color:#b4b6bc;">3</div><div class="t" style="left:194.2px;top:378px;width:30px;text-align:right;font-size:7.5px;color:#b4b6bc;">0</div><div class="t" style="left:194.2px;top:395px;width:30px;text-align:right;font-size:7.5px;color:#b4b6bc;">&#8211;3</div><div class="t" style="left:194.2px;top:410.5px;width:30px;text-align:right;font-size:7.5px;color:#b4b6bc;">&#8211;6</div><div class="t" style="left:194.2px;top:428px;width:30px;text-align:right;font-size:7.5px;color:#b4b6bc;">&#8211;10</div><div class="t" style="left:194.2px;top:453.5px;width:30px;text-align:right;font-size:7.5px;color:#b4b6bc;">&#8211;18</div><div class="t" style="left:194.2px;top:478.5px;width:30px;text-align:right;font-size:7.5px;color:#b4b6bc;">&#8211;30</div><div class="t" style="left:194.2px;top:499.7px;width:30px;text-align:right;font-size:7.5px;color:#b4b6bc;">&#8211;50</div>
<div style="position:absolute;left:235px;top:364px;width:15px;height:36px;box-sizing:border-box;border-radius:2px;border:1px solid #222;background:linear-gradient(to bottom,#a9a9a9 0%,#8c8c8c 11%,#2a2a2a 15%,#161616 30%,#3c3c3c 45%,#d8d8d8 49%,#eeeeee 51%,#9a9a9a 54%,#7e7e7e 72%,#5a5a5a 82%,#2e2e2e 86%,#5c5c5c 95%,#8a8a8a 100%);box-shadow:0 1px 2px rgba(0,0,0,.6);"></div>
<div style="position:absolute;left:209px;top:559px;width:76px;height:18.5px;background:#000;"></div>
<div class="t" style="left:209px;top:563px;width:76px;text-align:center;font-size:11px;color:#fff;-webkit-text-stroke:0.25px #fff;transform:scaleX(0.97);transform-origin:center 0;">Electric Guitar</div>
<div style="position:absolute;left:294.75px;top:187.5px;width:91px;height:425.5px;background:#333843;"></div>
<div style="position:absolute;left:294.75px;top:613px;width:91px;height:10px;background:#f0b050;"></div>
<div class="t" style="left:294.75px;top:614.5px;width:91px;text-align:center;font-size:8.5px;color:#333;">2</div>
<div class="ms" style="left:305.75px;top:210px;width:23px;height:22px;font-size:15.8px;line-height:23.8px;"><span>M</span></div>
<div class="ms" style="left:351.75px;top:210px;width:23px;height:22px;font-size:15.3px;line-height:23.5px;"><span>S</span></div>
<div style="position:absolute;left:301.25px;top:263px;width:31.5px;height:10px;background:#fff;"></div>
<div class="t" style="left:301.25px;top:263.5px;width:31.5px;text-align:center;font-size:10px;color:#111;">34</div>
<div style="position:absolute;left:346.75px;top:263px;width:32px;height:10px;background:#fff;"></div>
<div class="t" style="left:346.75px;top:263.5px;width:32px;text-align:center;font-size:10px;color:#111;">100</div>
<div style="position:absolute;left:299.25px;top:286px;width:46.5px;height:18.5px;background:#000;"></div>
<div class="t" style="left:299.25px;top:290.5px;width:46.5px;text-align:center;font-size:11px;color:#fff;-webkit-text-stroke:0.2px #fff;transform:scaleX(0.98);transform-origin:center 0;">&#8211;3.9</div>
<div style="position:absolute;left:356.9px;top:287px;width:5px;height:261.5px;background:#000;"></div><div style="position:absolute;left:356.9px;top:404px;width:5px;height:144.5px;background:linear-gradient(to bottom,#e9301c 0%,#f07628 9%,#f3c83a 18%,#f4f140 27%,#d2e63c 42%,#8cc432 60%,#55a02a 80%,#3c8a24 100%);background-size:5px 261.5px;background-position:0 -117px;"></div><div style="position:absolute;left:356.9px;top:398.4px;width:5px;height:1.5px;background:#d8c020;"></div><div style="position:absolute;left:363.2px;top:287px;width:5px;height:261.5px;background:#000;"></div><div style="position:absolute;left:363.2px;top:364px;width:5px;height:184.5px;background:linear-gradient(to bottom,#e9301c 0%,#f07628 9%,#f3c83a 18%,#f4f140 27%,#d2e63c 42%,#8cc432 60%,#55a02a 80%,#3c8a24 100%);background-size:5px 261.5px;background-position:0 -77px;"></div><div style="position:absolute;left:363.2px;top:355px;width:5px;height:1.5px;background:#d8d020;"></div>
<div style="position:absolute;left:333.75px;top:332px;width:3px;height:192px;background:#3d8fd0;"></div>
<div style="position:absolute;left:319.75px;top:381.5px;width:9.5px;height:1px;background:#a8a8a8;"></div>
<div style="position:absolute;left:341.25px;top:381.5px;width:9.5px;height:1px;background:#a8a8a8;"></div>
<div class="t" style="left:286.95px;top:334px;width:30px;text-align:right;font-size:7.5px;color:#b4b6bc;">6</div><div class="t" style="left:286.95px;top:357.5px;width:30px;text-align:right;font-size:7.5px;color:#b4b6bc;">3</div><div class="t" style="left:286.95px;top:378px;width:30px;text-align:right;font-size:7.5px;color:#b4b6bc;">0</div><div class="t" style="left:286.95px;top:395px;width:30px;text-align:right;font-size:7.5px;color:#b4b6bc;">&#8211;3</div><div class="t" style="left:286.95px;top:410.5px;width:30px;text-align:right;font-size:7.5px;color:#b4b6bc;">&#8211;6</div><div class="t" style="left:286.95px;top:428px;width:30px;text-align:right;font-size:7.5px;color:#b4b6bc;">&#8211;10</div><div class="t" style="left:286.95px;top:453.5px;width:30px;text-align:right;font-size:7.5px;color:#b4b6bc;">&#8211;18</div><div class="t" style="left:286.95px;top:478.5px;width:30px;text-align:right;font-size:7.5px;color:#b4b6bc;">&#8211;30</div><div class="t" style="left:286.95px;top:499.7px;width:30px;text-align:right;font-size:7.5px;color:#b4b6bc;">&#8211;50</div>
<div style="position:absolute;left:327.75px;top:386.5px;width:15px;height:36px;box-sizing:border-box;border-radius:2px;border:1px solid #222;background:linear-gradient(to bottom,#a9a9a9 0%,#8c8c8c 11%,#2a2a2a 15%,#161616 30%,#3c3c3c 45%,#d8d8d8 49%,#eeeeee 51%,#9a9a9a 54%,#7e7e7e 72%,#5a5a5a 82%,#2e2e2e 86%,#5c5c5c 95%,#8a8a8a 100%);box-shadow:0 1px 2px rgba(0,0,0,.6);"></div>
<div style="position:absolute;left:301.75px;top:559px;width:76px;height:18.5px;background:#000;"></div>
<div class="t" style="left:301.75px;top:563px;width:76px;text-align:center;font-size:11px;color:#fff;-webkit-text-stroke:0.25px #fff;transform:scaleX(0.97);transform-origin:center 0;">Other</div>
<div style="position:absolute;left:387.5px;top:187.5px;width:91px;height:425.5px;background:#333843;"></div>
<div style="position:absolute;left:387.5px;top:613px;width:91px;height:10px;background:#913b9e;"></div>
<div class="t" style="left:387.5px;top:614.5px;width:91px;text-align:center;font-size:8.5px;color:#f4f4f4;">3</div>
<div class="ms" style="left:398.5px;top:210px;width:23px;height:22px;font-size:15.8px;line-height:23.8px;"><span>M</span></div>
<div class="ms" style="left:444.5px;top:210px;width:23px;height:22px;font-size:15.3px;line-height:23.5px;"><span>S</span></div>
<div style="position:absolute;left:394.0px;top:263px;width:31.5px;height:10px;background:#fff;"></div>
<div class="t" style="left:394.0px;top:263.5px;width:31.5px;text-align:center;font-size:10px;color:#111;">&#8211;100</div>
<div style="position:absolute;left:439.5px;top:263px;width:32px;height:10px;background:#fff;"></div>
<div class="t" style="left:439.5px;top:263.5px;width:32px;text-align:center;font-size:10px;color:#111;">100</div>
<div style="position:absolute;left:392.0px;top:286px;width:46.5px;height:18.5px;background:#000;"></div>
<div class="t" style="left:392.0px;top:290.5px;width:46.5px;text-align:center;font-size:11px;color:#fff;-webkit-text-stroke:0.2px #fff;transform:scaleX(0.98);transform-origin:center 0;">+1.8</div>
<div style="position:absolute;left:449.7px;top:287px;width:5px;height:261.5px;background:#000;"></div><div style="position:absolute;left:449.7px;top:346.5px;width:5px;height:202.0px;background:linear-gradient(to bottom,#e9301c 0%,#f07628 9%,#f3c83a 18%,#f4f140 27%,#d2e63c 42%,#8cc432 60%,#55a02a 80%,#3c8a24 100%);background-size:5px 261.5px;background-position:0 -59.5px;"></div><div style="position:absolute;left:449.7px;top:344.2px;width:5px;height:1.5px;background:#d8d020;"></div><div style="position:absolute;left:456.0px;top:287px;width:5px;height:261.5px;background:#000;"></div><div style="position:absolute;left:456.0px;top:346px;width:5px;height:202.5px;background:linear-gradient(to bottom,#e9301c 0%,#f07628 9%,#f3c83a 18%,#f4f140 27%,#d2e63c 42%,#8cc432 60%,#55a02a 80%,#3c8a24 100%);background-size:5px 261.5px;background-position:0 -59px;"></div><div style="position:absolute;left:456.0px;top:344px;width:5px;height:1.5px;background:#d8d020;"></div>
<div style="position:absolute;left:426.5px;top:332px;width:3px;height:192px;background:#3d8fd0;"></div>
<div style="position:absolute;left:412.5px;top:381.5px;width:9.5px;height:1px;background:#a8a8a8;"></div>
<div style="position:absolute;left:434.0px;top:381.5px;width:9.5px;height:1px;background:#a8a8a8;"></div>
<div class="t" style="left:379.7px;top:334px;width:30px;text-align:right;font-size:7.5px;color:#b4b6bc;">6</div><div class="t" style="left:379.7px;top:357.5px;width:30px;text-align:right;font-size:7.5px;color:#b4b6bc;">3</div><div class="t" style="left:379.7px;top:378px;width:30px;text-align:right;font-size:7.5px;color:#b4b6bc;">0</div><div class="t" style="left:379.7px;top:395px;width:30px;text-align:right;font-size:7.5px;color:#b4b6bc;">&#8211;3</div><div class="t" style="left:379.7px;top:410.5px;width:30px;text-align:right;font-size:7.5px;color:#b4b6bc;">&#8211;6</div><div class="t" style="left:379.7px;top:428px;width:30px;text-align:right;font-size:7.5px;color:#b4b6bc;">&#8211;10</div><div class="t" style="left:379.7px;top:453.5px;width:30px;text-align:right;font-size:7.5px;color:#b4b6bc;">&#8211;18</div><div class="t" style="left:379.7px;top:478.5px;width:30px;text-align:right;font-size:7.5px;color:#b4b6bc;">&#8211;30</div><div class="t" style="left:379.7px;top:499.7px;width:30px;text-align:right;font-size:7.5px;color:#b4b6bc;">&#8211;50</div>
<div style="position:absolute;left:420.5px;top:352px;width:15px;height:36px;box-sizing:border-box;border-radius:2px;border:1px solid #222;background:linear-gradient(to bottom,#a9a9a9 0%,#8c8c8c 11%,#2a2a2a 15%,#161616 30%,#3c3c3c 45%,#d8d8d8 49%,#eeeeee 51%,#9a9a9a 54%,#7e7e7e 72%,#5a5a5a 82%,#2e2e2e 86%,#5c5c5c 95%,#8a8a8a 100%);box-shadow:0 1px 2px rgba(0,0,0,.6);"></div>
<div style="position:absolute;left:394.5px;top:559px;width:76px;height:18.5px;background:#000;"></div>
<div class="t" style="left:394.5px;top:563px;width:76px;text-align:center;font-size:11px;color:#fff;-webkit-text-stroke:0.25px #fff;transform:scaleX(0.97);transform-origin:center 0;">Bass</div>
<div style="position:absolute;left:480.25px;top:187.5px;width:91px;height:425.5px;background:#333843;"></div>
<div style="position:absolute;left:480.25px;top:613px;width:91px;height:10px;background:#8ec46a;"></div>
<div class="t" style="left:480.25px;top:614.5px;width:91px;text-align:center;font-size:8.5px;color:#333;">4</div>
<div class="ms" style="left:491.25px;top:210px;width:23px;height:22px;font-size:15.8px;line-height:23.8px;"><span>M</span></div>
<div class="ms" style="left:537.25px;top:210px;width:23px;height:22px;font-size:15.3px;line-height:23.5px;"><span>S</span></div>
<div style="position:absolute;left:486.75px;top:263px;width:31.5px;height:10px;background:#fff;"></div>
<div class="t" style="left:486.75px;top:263.5px;width:31.5px;text-align:center;font-size:10px;color:#111;">&#8211;100</div>
<div style="position:absolute;left:532.25px;top:263px;width:32px;height:10px;background:#fff;"></div>
<div class="t" style="left:532.25px;top:263.5px;width:32px;text-align:center;font-size:10px;color:#111;">100</div>
<div style="position:absolute;left:484.75px;top:286px;width:46.5px;height:18.5px;background:#000;"></div>
<div class="t" style="left:484.75px;top:290.5px;width:46.5px;text-align:center;font-size:11px;color:#fff;-webkit-text-stroke:0.2px #fff;transform:scaleX(0.98);transform-origin:center 0;">&#8211;5.4</div>
<div style="position:absolute;left:542.5px;top:287px;width:5px;height:261.5px;background:#000;"></div><div style="position:absolute;left:542.5px;top:403px;width:5px;height:145.5px;background:linear-gradient(to bottom,#e9301c 0%,#f07628 9%,#f3c83a 18%,#f4f140 27%,#d2e63c 42%,#8cc432 60%,#55a02a 80%,#3c8a24 100%);background-size:5px 261.5px;background-position:0 -116px;"></div><div style="position:absolute;left:542.5px;top:347.5px;width:5px;height:1.5px;background:#e0c020;"></div><div style="position:absolute;left:548.8px;top:287px;width:5px;height:261.5px;background:#000;"></div><div style="position:absolute;left:548.8px;top:400.7px;width:5px;height:147.8px;background:linear-gradient(to bottom,#e9301c 0%,#f07628 9%,#f3c83a 18%,#f4f140 27%,#d2e63c 42%,#8cc432 60%,#55a02a 80%,#3c8a24 100%);background-size:5px 261.5px;background-position:0 -113.69999999999999px;"></div><div style="position:absolute;left:548.8px;top:348.8px;width:5px;height:1.5px;background:#e0c020;"></div>
<div style="position:absolute;left:519.25px;top:332px;width:3px;height:192px;background:#3d8fd0;"></div>
<div style="position:absolute;left:505.25px;top:381.5px;width:9.5px;height:1px;background:#a8a8a8;"></div>
<div style="position:absolute;left:526.75px;top:381.5px;width:9.5px;height:1px;background:#a8a8a8;"></div>
<div class="t" style="left:472.45px;top:334px;width:30px;text-align:right;font-size:7.5px;color:#b4b6bc;">6</div><div class="t" style="left:472.45px;top:357.5px;width:30px;text-align:right;font-size:7.5px;color:#b4b6bc;">3</div><div class="t" style="left:472.45px;top:378px;width:30px;text-align:right;font-size:7.5px;color:#b4b6bc;">0</div><div class="t" style="left:472.45px;top:395px;width:30px;text-align:right;font-size:7.5px;color:#b4b6bc;">&#8211;3</div><div class="t" style="left:472.45px;top:410.5px;width:30px;text-align:right;font-size:7.5px;color:#b4b6bc;">&#8211;6</div><div class="t" style="left:472.45px;top:428px;width:30px;text-align:right;font-size:7.5px;color:#b4b6bc;">&#8211;10</div><div class="t" style="left:472.45px;top:453.5px;width:30px;text-align:right;font-size:7.5px;color:#b4b6bc;">&#8211;18</div><div class="t" style="left:472.45px;top:478.5px;width:30px;text-align:right;font-size:7.5px;color:#b4b6bc;">&#8211;30</div><div class="t" style="left:472.45px;top:499.7px;width:30px;text-align:right;font-size:7.5px;color:#b4b6bc;">&#8211;50</div>
<div style="position:absolute;left:513.25px;top:394px;width:15px;height:36px;box-sizing:border-box;border-radius:2px;border:1px solid #222;background:linear-gradient(to bottom,#a9a9a9 0%,#8c8c8c 11%,#2a2a2a 15%,#161616 30%,#3c3c3c 45%,#d8d8d8 49%,#eeeeee 51%,#9a9a9a 54%,#7e7e7e 72%,#5a5a5a 82%,#2e2e2e 86%,#5c5c5c 95%,#8a8a8a 100%);box-shadow:0 1px 2px rgba(0,0,0,.6);"></div>
<div style="position:absolute;left:487.25px;top:559px;width:76px;height:18.5px;background:#000;"></div>
<div class="t" style="left:487.25px;top:563px;width:76px;text-align:center;font-size:11px;color:#fff;-webkit-text-stroke:0.25px #fff;transform:scaleX(0.97);transform-origin:center 0;">Drums</div>
<div style="position:absolute;left:573px;top:187.5px;width:91px;height:425.5px;background:#333843;"></div>
<div style="position:absolute;left:573px;top:613px;width:91px;height:10px;background:#4a6ab4;"></div>
<div class="t" style="left:573px;top:614.5px;width:91px;text-align:center;font-size:8.5px;color:#f4f4f4;">5</div>
<div class="ms" style="left:584px;top:210px;width:23px;height:22px;font-size:15.8px;line-height:23.8px;box-shadow:0 0 0 1.6px #d42a22;border-radius:3px;"><span>M</span></div>
<div class="ms" style="left:630px;top:210px;width:23px;height:22px;font-size:15.3px;line-height:23.5px;"><span>S</span></div>
<div style="position:absolute;left:579.5px;top:263px;width:31.5px;height:10px;background:#fff;"></div>
<div class="t" style="left:579.5px;top:263.5px;width:31.5px;text-align:center;font-size:10px;color:#111;">&#8211;100</div>
<div style="position:absolute;left:625px;top:263px;width:32px;height:10px;background:#fff;"></div>
<div class="t" style="left:625px;top:263.5px;width:32px;text-align:center;font-size:10px;color:#111;">100</div>
<div style="position:absolute;left:577.5px;top:286px;width:46.5px;height:18.5px;background:#000;"></div>
<div class="t" style="left:577.5px;top:290.5px;width:46.5px;text-align:center;font-size:11px;color:#fff;-webkit-text-stroke:0.2px #fff;transform:scaleX(0.98);transform-origin:center 0;">0.0</div>
<div style="position:absolute;left:635.2px;top:287px;width:5px;height:261.5px;background:#000;"></div><div style="position:absolute;left:641.5px;top:287px;width:5px;height:261.5px;background:#000;"></div>
<div style="position:absolute;left:612px;top:332px;width:3px;height:192px;background:#3d8fd0;"></div>
<div style="position:absolute;left:598px;top:381.5px;width:9.5px;height:1px;background:#a8a8a8;"></div>
<div style="position:absolute;left:619.5px;top:381.5px;width:9.5px;height:1px;background:#a8a8a8;"></div>
<div class="t" style="left:565.2px;top:334px;width:30px;text-align:right;font-size:7.5px;color:#b4b6bc;">6</div><div class="t" style="left:565.2px;top:357.5px;width:30px;text-align:right;font-size:7.5px;color:#b4b6bc;">3</div><div class="t" style="left:565.2px;top:378px;width:30px;text-align:right;font-size:7.5px;color:#b4b6bc;">0</div><div class="t" style="left:565.2px;top:395px;width:30px;text-align:right;font-size:7.5px;color:#b4b6bc;">&#8211;3</div><div class="t" style="left:565.2px;top:410.5px;width:30px;text-align:right;font-size:7.5px;color:#b4b6bc;">&#8211;6</div><div class="t" style="left:565.2px;top:428px;width:30px;text-align:right;font-size:7.5px;color:#b4b6bc;">&#8211;10</div><div class="t" style="left:565.2px;top:453.5px;width:30px;text-align:right;font-size:7.5px;color:#b4b6bc;">&#8211;18</div><div class="t" style="left:565.2px;top:478.5px;width:30px;text-align:right;font-size:7.5px;color:#b4b6bc;">&#8211;30</div><div class="t" style="left:565.2px;top:499.7px;width:30px;text-align:right;font-size:7.5px;color:#b4b6bc;">&#8211;50</div>
<div style="position:absolute;left:606px;top:363.5px;width:15px;height:36px;box-sizing:border-box;border-radius:2px;border:1px solid #222;background:linear-gradient(to bottom,#a9a9a9 0%,#8c8c8c 11%,#2a2a2a 15%,#161616 30%,#3c3c3c 45%,#d8d8d8 49%,#eeeeee 51%,#9a9a9a 54%,#7e7e7e 72%,#5a5a5a 82%,#2e2e2e 86%,#5c5c5c 95%,#8a8a8a 100%);box-shadow:0 1px 2px rgba(0,0,0,.6);"></div>
<div style="position:absolute;left:580px;top:559px;width:76px;height:18.5px;background:#000;"></div>
<div class="t" style="left:580px;top:563px;width:76px;text-align:center;font-size:11px;color:#fff;-webkit-text-stroke:0.25px #fff;transform:scaleX(0.97);transform-origin:center 0;">Vocals</div>
<svg class="ab" style="left:0;top:0" width="1200" height="763"><defs><radialGradient id="kg" cx="35%" cy="30%" r="75%"><stop offset="0" stop-color="#ffffff"/><stop offset="0.6" stop-color="#e6e6e6"/><stop offset="1" stop-color="#b8b8b8"/></radialGradient></defs><circle cx="224.5" cy="252.6" r="9.8" fill="#1a1d24" opacity="0.6"/><circle cx="224.5" cy="252" r="9.4" fill="url(#kg)"/><line x1="224.21" y1="252.37" x2="219.41" y2="258.52" stroke="#8e8e8e" stroke-width="3.10"/><circle cx="270" cy="252.6" r="9.8" fill="#1a1d24" opacity="0.6"/><circle cx="270" cy="252" r="9.4" fill="url(#kg)"/><line x1="269.75" y1="251.60" x2="265.54" y2="245.04" stroke="#8e8e8e" stroke-width="3.10"/><circle cx="317.25" cy="252.6" r="9.8" fill="#1a1d24" opacity="0.6"/><circle cx="317.25" cy="252" r="9.4" fill="url(#kg)"/><line x1="317.60" y1="251.69" x2="323.42" y2="246.50" stroke="#8e8e8e" stroke-width="3.10"/><circle cx="362.75" cy="252.6" r="9.8" fill="#1a1d24" opacity="0.6"/><circle cx="362.75" cy="252" r="9.4" fill="url(#kg)"/><line x1="363.04" y1="252.37" x2="367.84" y2="258.52" stroke="#8e8e8e" stroke-width="3.10"/><circle cx="410.0" cy="252.6" r="9.8" fill="#1a1d24" opacity="0.6"/><circle cx="410.0" cy="252" r="9.4" fill="url(#kg)"/><line x1="409.71" y1="252.37" x2="404.91" y2="258.52" stroke="#8e8e8e" stroke-width="3.10"/><circle cx="455.5" cy="252.6" r="9.8" fill="#1a1d24" opacity="0.6"/><circle cx="455.5" cy="252" r="9.4" fill="url(#kg)"/><line x1="455.79" y1="252.37" x2="460.59" y2="258.52" stroke="#8e8e8e" stroke-width="3.10"/><circle cx="502.75" cy="252.6" r="9.8" fill="#1a1d24" opacity="0.6"/><circle cx="502.75" cy="252" r="9.4" fill="url(#kg)"/><line x1="502.46" y1="252.37" x2="497.66" y2="258.52" stroke="#8e8e8e" stroke-width="3.10"/><circle cx="548.25" cy="252.6" r="9.8" fill="#1a1d24" opacity="0.6"/><circle cx="548.25" cy="252" r="9.4" fill="url(#kg)"/><line x1="548.54" y1="252.37" x2="553.34" y2="258.52" stroke="#8e8e8e" stroke-width="3.10"/><circle cx="595.5" cy="252.6" r="9.8" fill="#1a1d24" opacity="0.6"/><circle cx="595.5" cy="252" r="9.4" fill="url(#kg)"/><line x1="595.21" y1="252.37" x2="590.41" y2="258.52" stroke="#8e8e8e" stroke-width="3.10"/><circle cx="641" cy="252.6" r="9.8" fill="#1a1d24" opacity="0.6"/><circle cx="641" cy="252" r="9.4" fill="url(#kg)"/><line x1="641.29" y1="252.37" x2="646.09" y2="258.52" stroke="#8e8e8e" stroke-width="3.10"/><circle cx="525.2" cy="592" r="6.8" fill="none" stroke="#e8e8e8" stroke-width="1.6"/><circle cx="525.2" cy="592" r="3.8" fill="none" stroke="#e8e8e8" stroke-width="1.5"/></svg>
<div style="position:absolute;left:937px;top:101px;width:220px;height:523px;background:#172a3b;"></div>
<div style="position:absolute;left:939.3px;top:106.3px;width:215.2px;height:514px;box-sizing:border-box;border:1.3px solid #050505;border-radius:7px;background:#172a3e;overflow:hidden;"><div style="position:absolute;left:0px;top:0px;width:213px;height:20.5px;background:#3b3e4a;border-bottom:1.2px solid #050505;"></div></div>
<div class="t" style="left:939px;top:112px;width:215px;text-align:center;font-size:11px;color:#fff;-webkit-text-stroke:0.25px #fff;transform:scaleX(0.96);transform-origin:center 0;">Mixer</div>
<div style="position:absolute;left:941.5px;top:135px;width:204.5px;height:30.8px;box-sizing:border-box;border:1px solid #62656c;background:#172a3e;"></div>
<div style="position:absolute;left:942.5px;top:136px;width:4px;height:28.8px;background:#8ec46a;"></div>
<div style="position:absolute;left:946.5px;top:136px;width:1px;height:28.8px;background:#62656c;"></div>
<div class="t" style="left:953.5px;top:146.6px;font-size:7.6px;color:#fff;-webkit-text-stroke:0.35px #fff;transform:scaleX(0.925);transform-origin:left 0;">I'll Be There For You</div>
<div style="position:absolute;left:1115.5px;top:138.5px;width:4.5px;height:26px;background:#000;"></div>
<div style="position:absolute;left:1121px;top:138.5px;width:4.5px;height:26px;background:#000;"></div>
<div style="position:absolute;left:941.5px;top:171.8px;width:204.5px;height:31.7px;box-sizing:border-box;border:1px solid #62656c;background:#172a3e;"></div>
<div style="position:absolute;left:942.5px;top:172.8px;width:9.7px;height:29.7px;background:#e07a7a;"></div>
<div style="position:absolute;left:952.2px;top:172.8px;width:1.2px;height:29.7px;background:#62656c;"></div>
<div class="t" style="left:942.5px;top:182.8px;width:9.7px;text-align:center;font-size:8px;color:#333;">1</div>
<div class="t" style="left:960px;top:180.1px;font-size:7.6px;color:#fff;-webkit-text-stroke:0.35px #fff;transform:scaleX(0.91);transform-origin:left 0;">Electric Guitar</div>
<div style="position:absolute;left:954px;top:198.0px;width:94.7px;height:3px;background:#e07a7a;"></div>
<div style="position:absolute;left:1050.5px;top:175.0px;width:4.4px;height:26px;background:#000;"></div>
<div style="position:absolute;left:1056.1px;top:175.0px;width:4.4px;height:26px;background:#000;"></div>
<div class="ms" style="left:1081.7px;top:176.8px;width:20.2px;height:20.3px;font-size:14px;line-height:21px;"><span>M</span></div>
<div class="ms" style="left:1104.9px;top:176.8px;width:20.2px;height:20.3px;font-size:13.6px;line-height:21px;"><span>S</span></div>
<div style="position:absolute;left:941.5px;top:202.5px;width:204.5px;height:31.7px;box-sizing:border-box;border:1px solid #62656c;background:#172a3e;"></div>
<div style="position:absolute;left:942.5px;top:203.5px;width:9.7px;height:29.7px;background:#f0b050;"></div>
<div style="position:absolute;left:952.2px;top:203.5px;width:1.2px;height:29.7px;background:#62656c;"></div>
<div class="t" style="left:942.5px;top:213.5px;width:9.7px;text-align:center;font-size:8px;color:#333;">2</div>
<div class="t" style="left:960px;top:210.8px;font-size:7.6px;color:#fff;-webkit-text-stroke:0.35px #fff;transform:scaleX(0.91);transform-origin:left 0;">Other</div>
<div style="position:absolute;left:954px;top:228.7px;width:94.7px;height:3px;background:#f0b050;"></div>
<div style="position:absolute;left:1050.5px;top:205.7px;width:4.4px;height:26px;background:#000;"></div>
<div style="position:absolute;left:1056.1px;top:205.7px;width:4.4px;height:26px;background:#000;"></div>
<div class="ms" style="left:1081.7px;top:207.5px;width:20.2px;height:20.3px;font-size:14px;line-height:21px;"><span>M</span></div>
<div class="ms" style="left:1104.9px;top:207.5px;width:20.2px;height:20.3px;font-size:13.6px;line-height:21px;"><span>S</span></div>
<div style="position:absolute;left:941.5px;top:233.2px;width:204.5px;height:31.7px;box-sizing:border-box;border:1px solid #62656c;background:#172a3e;"></div>
<div style="position:absolute;left:942.5px;top:234.2px;width:9.7px;height:29.7px;background:#913b9e;"></div>
<div style="position:absolute;left:952.2px;top:234.2px;width:1.2px;height:29.7px;background:#62656c;"></div>
<div class="t" style="left:942.5px;top:244.2px;width:9.7px;text-align:center;font-size:8px;color:#fff;">3</div>
<div class="t" style="left:960px;top:241.5px;font-size:7.6px;color:#fff;-webkit-text-stroke:0.35px #fff;transform:scaleX(0.91);transform-origin:left 0;">Bass</div>
<div style="position:absolute;left:954px;top:259.4px;width:94.7px;height:3px;background:#913b9e;"></div>
<div style="position:absolute;left:1050.5px;top:236.4px;width:4.4px;height:26px;background:#000;"></div>
<div style="position:absolute;left:1056.1px;top:236.4px;width:4.4px;height:26px;background:#000;"></div>
<div class="ms" style="left:1081.7px;top:238.2px;width:20.2px;height:20.3px;font-size:14px;line-height:21px;"><span>M</span></div>
<div class="ms" style="left:1104.9px;top:238.2px;width:20.2px;height:20.3px;font-size:13.6px;line-height:21px;"><span>S</span></div>
<div style="position:absolute;left:941.5px;top:263.9px;width:204.5px;height:31.7px;box-sizing:border-box;border:1px solid #62656c;background:#4c67a0;"></div>
<div style="position:absolute;left:942.5px;top:264.9px;width:9.7px;height:29.7px;background:#8ec46a;"></div>
<div style="position:absolute;left:952.2px;top:264.9px;width:1.2px;height:29.7px;background:#62656c;"></div>
<div class="t" style="left:942.5px;top:274.9px;width:9.7px;text-align:center;font-size:8px;color:#333;">4</div>
<div class="t" style="left:960px;top:272.2px;font-size:7.6px;color:#fff;-webkit-text-stroke:0.35px #fff;transform:scaleX(0.91);transform-origin:left 0;">Drums</div>
<div style="position:absolute;left:954px;top:290.1px;width:94.7px;height:3px;background:#8ec46a;"></div>
<div style="position:absolute;left:1050.5px;top:267.1px;width:4.4px;height:26px;background:#000;"></div>
<div style="position:absolute;left:1056.1px;top:267.1px;width:4.4px;height:26px;background:#000;"></div>
<div class="ms" style="left:1081.7px;top:268.9px;width:20.2px;height:20.3px;font-size:14px;line-height:21px;"><span>M</span></div>
<div class="ms" style="left:1104.9px;top:268.9px;width:20.2px;height:20.3px;font-size:13.6px;line-height:21px;"><span>S</span></div>
<div style="position:absolute;left:941.5px;top:294.6px;width:204.5px;height:31.7px;box-sizing:border-box;border:1px solid #62656c;background:#172a3e;"></div>
<div style="position:absolute;left:942.5px;top:295.6px;width:9.7px;height:29.7px;background:#4a6ab4;"></div>
<div style="position:absolute;left:952.2px;top:295.6px;width:1.2px;height:29.7px;background:#62656c;"></div>
<div class="t" style="left:942.5px;top:305.6px;width:9.7px;text-align:center;font-size:8px;color:#fff;">5</div>
<div class="t" style="left:960px;top:302.9px;font-size:7.6px;color:#fff;-webkit-text-stroke:0.35px #fff;transform:scaleX(0.91);transform-origin:left 0;">Vocals</div>
<div style="position:absolute;left:954px;top:320.8px;width:94.7px;height:3px;background:#4a6ab4;"></div>
<div style="position:absolute;left:1050.5px;top:297.8px;width:4.4px;height:26px;background:#000;"></div>
<div style="position:absolute;left:1056.1px;top:297.8px;width:4.4px;height:26px;background:#000;"></div>
<div class="ms" style="left:1081.7px;top:299.6px;width:20.2px;height:20.3px;font-size:14px;line-height:21px;box-shadow:0 0 0 1.5px #d42a22;border-radius:3px;"><span>M</span></div>
<div class="ms" style="left:1104.9px;top:299.6px;width:20.2px;height:20.3px;font-size:13.6px;line-height:21px;"><span>S</span></div>
<div style="position:absolute;left:1050.5px;top:177.6px;width:4.4px;height:23.4px;background:linear-gradient(to bottom,#e9301c 0%,#f07628 9%,#f3c83a 18%,#f4f140 27%,#d2e63c 42%,#8cc432 60%,#55a02a 80%,#3c8a24 100%);background-size:4.4px 26px;background-position:0 -2.6px;"></div>
<div style="position:absolute;left:1056.1px;top:180.8px;width:4.4px;height:20.2px;background:linear-gradient(to bottom,#e9301c 0%,#f07628 9%,#f3c83a 18%,#f4f140 27%,#d2e63c 42%,#8cc432 60%,#55a02a 80%,#3c8a24 100%);background-size:4.4px 26px;background-position:0 -5.8px;"></div>
<div style="position:absolute;left:1050.5px;top:215px;width:4.4px;height:16.9px;background:linear-gradient(to bottom,#e9301c 0%,#f07628 9%,#f3c83a 18%,#f4f140 27%,#d2e63c 42%,#8cc432 60%,#55a02a 80%,#3c8a24 100%);background-size:4.4px 26.0px;background-position:0 -9.1px;"></div>
<div style="position:absolute;left:1056.1px;top:208.5px;width:4.4px;height:23.4px;background:linear-gradient(to bottom,#e9301c 0%,#f07628 9%,#f3c83a 18%,#f4f140 27%,#d2e63c 42%,#8cc432 60%,#55a02a 80%,#3c8a24 100%);background-size:4.4px 26.0px;background-position:0 -2.6px;"></div>
<div style="position:absolute;left:1050.5px;top:243.5px;width:4.4px;height:19.3px;background:linear-gradient(to bottom,#e9301c 0%,#f07628 9%,#f3c83a 18%,#f4f140 27%,#d2e63c 42%,#8cc432 60%,#55a02a 80%,#3c8a24 100%);background-size:4.4px 26.0px;background-position:0 -6.7px;"></div>
<div style="position:absolute;left:1056.1px;top:243.5px;width:4.4px;height:19.3px;background:linear-gradient(to bottom,#e9301c 0%,#f07628 9%,#f3c83a 18%,#f4f140 27%,#d2e63c 42%,#8cc432 60%,#55a02a 80%,#3c8a24 100%);background-size:4.4px 26.0px;background-position:0 -6.7px;"></div>
<div style="position:absolute;left:1050.5px;top:278.5px;width:4.4px;height:15.2px;background:linear-gradient(to bottom,#e9301c 0%,#f07628 9%,#f3c83a 18%,#f4f140 27%,#d2e63c 42%,#8cc432 60%,#55a02a 80%,#3c8a24 100%);background-size:4.4px 26.0px;background-position:0 -10.8px;"></div><div style="position:absolute;left:1050.5px;top:271.5px;width:4.4px;height:1.3px;background:#e0c020;"></div>
<div style="position:absolute;left:1056.1px;top:278.5px;width:4.4px;height:15.2px;background:linear-gradient(to bottom,#e9301c 0%,#f07628 9%,#f3c83a 18%,#f4f140 27%,#d2e63c 42%,#8cc432 60%,#55a02a 80%,#3c8a24 100%);background-size:4.4px 26.0px;background-position:0 -10.8px;"></div><div style="position:absolute;left:1056.1px;top:271.5px;width:4.4px;height:1.3px;background:#e0c020;"></div>
<svg class="ab" style="left:0;top:0" width="1200" height="763"><defs><radialGradient id="kg2" cx="35%" cy="30%" r="75%"><stop offset="0" stop-color="#ffffff"/><stop offset="0.6" stop-color="#e6e6e6"/><stop offset="1" stop-color="#b8b8b8"/></radialGradient></defs><circle cx="1070.7" cy="187.1" r="7.8" fill="#0d1620" opacity="0.7"/><circle cx="1070.7" cy="186.6" r="7.3" fill="url(#kg2)"/><line x1="1072.18" y1="186.34" x2="1077.40" y2="185.42" stroke="#8a8a8a" stroke-width="1.8"/><circle cx="1070.7" cy="217.8" r="7.8" fill="#0d1620" opacity="0.7"/><circle cx="1070.7" cy="217.3" r="7.3" fill="url(#kg2)"/><line x1="1071.76" y1="216.24" x2="1075.51" y2="212.49" stroke="#8a8a8a" stroke-width="1.8"/><circle cx="1070.7" cy="248.5" r="7.8" fill="#0d1620" opacity="0.7"/><circle cx="1070.7" cy="248.0" r="7.3" fill="url(#kg2)"/><line x1="1072.20" y1="248.00" x2="1077.50" y2="248.00" stroke="#8a8a8a" stroke-width="1.8"/><circle cx="1070.7" cy="279.2" r="7.8" fill="#0d1620" opacity="0.7"/><circle cx="1070.7" cy="278.7" r="7.3" fill="url(#kg2)"/><line x1="1071.21" y1="277.29" x2="1073.03" y2="272.31" stroke="#8a8a8a" stroke-width="1.8"/><circle cx="1070.7" cy="309.9" r="7.8" fill="#0d1620" opacity="0.7"/><circle cx="1070.7" cy="309.4" r="7.3" fill="url(#kg2)"/><line x1="1072.15" y1="309.01" x2="1077.27" y2="307.64" stroke="#8a8a8a" stroke-width="1.8"/><circle cx="1136" cy="279.2" r="5.8" fill="none" stroke="#e6e6e6" stroke-width="1.3"/><circle cx="1136" cy="279.2" r="3.2" fill="none" stroke="#e6e6e6" stroke-width="1.3"/></svg>
<div style="position:absolute;left:940.3px;top:391.3px;width:213.5px;height:21px;box-sizing:border-box;border-top:1px solid #050505;border-bottom:1px solid #050505;background:#3b3e4a;"></div>
<div class="t" style="left:940px;top:395.8px;width:214px;text-align:center;font-size:11px;color:#fff;-webkit-text-stroke:0.25px #fff;transform:scaleX(0.91);transform-origin:center 0;">Manual Edit History</div>
<div style="position:absolute;left:43px;top:623.5px;width:1114px;height:82.1px;background:#172a3c;border-radius:0 0 6.5px 6.5px;"></div>
<div style="position:absolute;left:43px;top:624px;width:1114px;height:1.2px;background:#5a5f68;"></div>
<svg class="ab" style="left:0;top:0" width="1200" height="763"><defs><radialGradient id="bkg" cx="50%" cy="40%" r="60%"><stop offset="0" stop-color="#2a2a2a"/><stop offset="1" stop-color="#141414"/></radialGradient></defs><circle cx="82" cy="655.3" r="22.6" fill="#242424" stroke="#0c0c0c" stroke-width="0.8"/><circle cx="82" cy="657" r="13.5" fill="#0c0c0c" opacity="0.8"/><circle cx="82" cy="655.5" r="12.8" fill="url(#bkg)"/><circle cx="85.4" cy="647.8" r="1.5" fill="#f0f0f0"/><circle cx="70.99" cy="671.03" r="1.3" fill="#cfe8f5"/><circle cx="66.10" cy="666.06" r="1.3" fill="#cfe8f5"/><circle cx="63.31" cy="659.68" r="1.3" fill="#cfe8f5"/><circle cx="62.97" cy="652.73" r="1.3" fill="#cfe8f5"/><circle cx="65.14" cy="646.11" r="1.3" fill="#cfe8f5"/><circle cx="69.53" cy="640.70" r="1.3" fill="#cfe8f5"/><circle cx="75.56" cy="637.21" r="1.3" fill="#cfe8f5"/><circle cx="82.44" cy="636.10" r="1.3" fill="#cfe8f5"/><circle cx="89.25" cy="637.52" r="1.3" fill="#cfe8f5"/><circle cx="95.12" cy="641.28" r="0.9" fill="#2e2e2e"/><circle cx="99.26" cy="646.88" r="0.9" fill="#2e2e2e"/><circle cx="101.12" cy="653.59" r="0.9" fill="#2e2e2e"/><circle cx="100.47" cy="660.53" r="0.9" fill="#2e2e2e"/><circle cx="97.39" cy="666.77" r="0.9" fill="#2e2e2e"/></svg>
<div style="position:absolute;left:55.4px;top:681.2px;width:53.4px;height:16.4px;box-sizing:border-box;background:#323232;border:1px solid #151515;"></div>
<div class="t" style="left:55.4px;top:684.5px;width:53.4px;text-align:center;font-size:11px;color:#d0d0d0;-webkit-text-stroke:0.2px #d0d0d0;transform:scaleX(0.96);transform-origin:center 0;">&#8722;1.5 dB</div>
<div style="position:absolute;left:279px;top:634.3px;width:107px;height:19.2px;box-sizing:border-box;background:#2e2e2e;border:1.2px solid #0a0a0a;"></div>
<div class="t" style="left:279px;top:639px;width:107px;text-align:center;font-size:10.5px;color:#dedede;-webkit-text-stroke:0.2px #dedede;transform:scaleX(0.985);transform-origin:center 0;">01:55:774 / 03:17:326</div>
<div style="position:absolute;left:134px;top:664.7px;width:29px;height:29.2px;background:linear-gradient(165deg,#5ab0de 0%,#3d8ccb 40%,#2e72b4 100%);border-radius:3px;box-shadow:0 1px 1px rgba(0,0,0,.5);"></div>
<div style="position:absolute;left:171.2px;top:664.7px;width:29px;height:29.2px;background:linear-gradient(165deg,#5ab0de 0%,#3d8ccb 40%,#2e72b4 100%);border-radius:3px;box-shadow:0 1px 1px rgba(0,0,0,.5);"></div>
<div style="position:absolute;left:208.2px;top:664.7px;width:29px;height:29.2px;background:linear-gradient(165deg,#5ab0de 0%,#3d8ccb 40%,#2e72b4 100%);border-radius:3px;box-shadow:0 1px 1px rgba(0,0,0,.5);"></div>
<div style="position:absolute;left:245.3px;top:664.7px;width:29px;height:29.2px;background:linear-gradient(165deg,#5ab0de 0%,#3d8ccb 40%,#2e72b4 100%);border-radius:3px;box-shadow:0 1px 1px rgba(0,0,0,.5);"></div>
<div style="position:absolute;left:282.3px;top:664.7px;width:29px;height:29.2px;background:#23405c;border-radius:2px;"></div>
<div style="position:absolute;left:319.3px;top:664.7px;width:29px;height:29.2px;background:linear-gradient(165deg,#5ab0de 0%,#3d8ccb 40%,#2e72b4 100%);border-radius:3px;box-shadow:0 1px 1px rgba(0,0,0,.5);"></div>
<div style="position:absolute;left:356.4px;top:664.7px;width:29px;height:29.2px;background:linear-gradient(165deg,#5ab0de 0%,#3d8ccb 40%,#2e72b4 100%);border-radius:3px;box-shadow:0 1px 1px rgba(0,0,0,.5);"></div>
<svg class="ab" style="left:0;top:0" width="1200" height="763"><rect x="141" y="671.5" width="2" height="16" fill="#ececec"/><path d="M144.5,679.3 L156,671.5 L156,687 Z" fill="#ececec"/><path d="M175.2,679.3 L185.2,672.8 L185.2,685.8Z M185.2,679.3 L195.2,672.8 L195.2,685.8Z" fill="#ececec"/><path d="M233.2,679.3 L223.2,672.8 L223.2,685.8Z M223.2,679.3 L213.2,672.8 L213.2,685.8Z" fill="#ececec"/><rect x="265.3" y="671.5" width="2" height="16" fill="#ececec"/><path d="M263.8,679.3 L252.3,671.5 L252.3,687 Z" fill="#ececec"/><rect x="286.8" y="673.5" width="20" height="11" rx="2.5" fill="none" stroke="#8a7c6e" stroke-width="1.6"/><path d="M297.3,670.5 L301.3,673.5 L297.3,676.5" fill="none" stroke="#8a7c6e" stroke-width="1.4"/><line x1="283.8" y1="668.5" x2="309.8" y2="690" stroke="#8a7c6e" stroke-width="1.3"/><rect x="326.8" y="672" width="14.5" height="14.5" fill="#ececec"/><rect x="365.4" y="671.5" width="4" height="15.5" fill="#ececec"/><rect x="372.4" y="671.5" width="4" height="15.5" fill="#ececec"/><rect x="863.5" y="653.4" width="1.6" height="44" fill="#0a0f15"/><rect x="948.3" y="653.4" width="1.6" height="44" fill="#0a0f15"/><path d="M876.4,655 L896.4,655 M879.4,651.5 L875.4,655 L879.4,658.5 M893.4,651.5 L897.4,655 L893.4,658.5" fill="none" stroke="#fff" stroke-width="2.3" stroke-linecap="round" stroke-linejoin="round"/><path d="M915.7,655 L935.7,655 M918.7,651.5 L914.7,655 L918.7,658.5 M932.7,651.5 L936.7,655 L932.7,658.5" fill="none" stroke="#fff" stroke-width="2.3" stroke-linecap="round" stroke-linejoin="round"/></svg>
<div style="position:absolute;left:869.9px;top:660px;width:33px;height:33.4px;background:linear-gradient(165deg,#5ab0de 0%,#3d8ccb 40%,#2e72b4 100%);border-radius:3px;box-shadow:0 1px 1px rgba(0,0,0,.5);"></div>
<div style="position:absolute;left:909.2px;top:660px;width:33px;height:33.4px;background:linear-gradient(165deg,#5ab0de 0%,#3d8ccb 40%,#2e72b4 100%);border-radius:3px;box-shadow:0 1px 1px rgba(0,0,0,.5);"></div>
<div style="position:absolute;left:955px;top:660px;width:33px;height:33.4px;background:linear-gradient(165deg,#5ab0de 0%,#3d8ccb 40%,#2e72b4 100%);border-radius:3px;box-shadow:0 1px 1px rgba(0,0,0,.5);"></div>
<svg class="ab" style="left:0;top:0" width="1200" height="763"><circle cx="883.9" cy="673.8" r="7" fill="none" stroke="#f2f2f2" stroke-width="1.4"/><line x1="888.9" y1="678.8" x2="896.6999999999999" y2="686.5999999999999" stroke="#f2f2f2" stroke-width="1.5"/><line x1="880.1" y1="673.8" x2="887.6999999999999" y2="673.8" stroke="#f2f2f2" stroke-width="1.5"/><line x1="883.9" y1="670.0" x2="883.9" y2="677.5999999999999" stroke="#f2f2f2" stroke-width="1.5"/><circle cx="923.2" cy="673.8" r="7" fill="none" stroke="#f2f2f2" stroke-width="1.4"/><line x1="928.2" y1="678.8" x2="936.0" y2="686.5999999999999" stroke="#f2f2f2" stroke-width="1.5"/><line x1="919.4000000000001" y1="673.8" x2="927.0" y2="673.8" stroke="#f2f2f2" stroke-width="1.5"/><circle cx="971.6" cy="676.6" r="7.4" fill="none" stroke="#f2f2f2" stroke-width="1.4"/><path d="M971.6,665.6 L969.0,669.4 L974.2,669.4Z M971.6,687.6 L969.0,683.8000000000001 L974.2,683.8000000000001Z M960.6,676.6 L964.4,674.0 L964.4,679.2Z M982.6,676.6 L978.8000000000001,674.0 L978.8000000000001,679.2Z" fill="#f2f2f2"/></svg>
<div class="t" style="left:1044.6px;top:643px;font-size:10px;color:#ececec;-webkit-text-stroke:0.3px #ececec;transform:scaleX(0.91);transform-origin:left 0;">Merge selected</div>
<div class="t" style="left:1047.3px;top:677px;font-size:10px;color:#ececec;-webkit-text-stroke:0.3px #ececec;transform:scaleX(0.9);transform-origin:left 0;">Bounce</div>
<div style="position:absolute;left:1121px;top:632px;width:29.8px;height:29.8px;background:#213a5c;border-radius:2px;"></div>
<div style="position:absolute;left:1086.3px;top:665.6px;width:31px;height:31px;box-sizing:border-box;background:#3a3e48;border:1px solid #0d0d0d;border-radius:3px;"></div>
<div style="position:absolute;left:1120.5px;top:665.6px;width:30.6px;height:31px;box-sizing:border-box;background:#3a3e48;border:1px solid #0d0d0d;border-radius:3px;"></div>
<svg class="ab" style="left:0;top:0" width="1200" height="763"><rect x="1128" y="641" width="15.2" height="2" fill="#6a6e76"/><rect x="1128" y="646" width="15.2" height="2" fill="#6a6e76"/><rect x="1128" y="650.5" width="15.2" height="2" fill="#6a6e76"/><rect x="1094.5" y="679.6" width="14.5" height="2.6" fill="#fff"/><rect x="1128" y="674.8" width="15.2" height="2.5" fill="#fff"/><rect x="1128" y="679.5999999999999" width="15.2" height="2.5" fill="#fff"/><rect x="1128" y="684.5" width="15.2" height="2.5" fill="#fff"/></svg>
</div></body></html>
